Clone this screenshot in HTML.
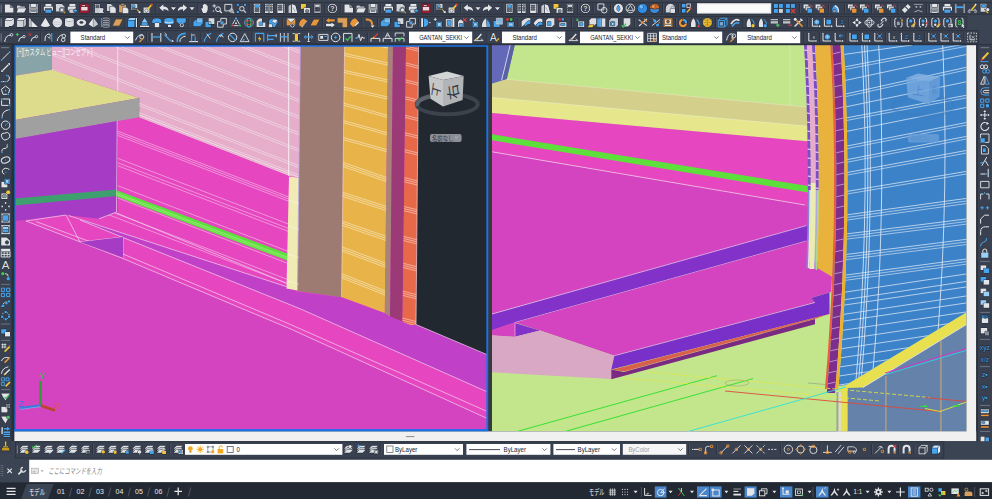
<!DOCTYPE html>
<html lang="ja"><head><meta charset="utf-8"><title>AutoCAD</title>
<style>
html,body{margin:0;padding:0;background:#3b4453;overflow:hidden}
body{width:992px;height:499px;position:relative}
svg{display:block;position:absolute;left:0;top:0}
text{font-family:"Liberation Sans","Noto Sans CJK JP",sans-serif}
</style></head><body>
<svg width="992" height="499" viewBox="0 0 992 499">
<defs><clipPath id="cl"><rect x="15" y="46" width="472.5" height="384.5"/></clipPath>
<clipPath id="cpink"><polygon points="52,46 300.5,46 300,178 289,175.7 139.3,117.2 139.3,98 52,69.7"/></clipPath>
<clipPath id="cwall"><polygon points="117.7,121 139.3,117.2 289,175.7 288,289 66,215 99,218.8 117.7,211.8"/></clipPath>
<clipPath id="corg"><polygon points="344.5,46 388,46 384.8,313 341.5,297"/></clipPath>
<clipPath id="cred"><polygon points="406,46 418.5,46 416,325 410,325 402.5,321.5"/></clipPath>
</defs>
<g clip-path="url(#cl)">
<rect x="15.0" y="46.0" width="472.5" height="384.5" fill="#d444c0" />
<polygon points="26.0,221.0 66.0,215.0 117.7,211.0 117.7,110.0 488.0,110.0 488.0,418.8 290.0,328.7 123.0,258.5" fill="#e646c0" />
<polygon points="52.0,46.0 300.5,46.0 300.0,178.0 289.0,175.7 139.3,117.2 139.3,98.0 52.0,69.7" fill="#e6aecb" />
<polygon points="15.0,46.0 52.0,46.0 52.0,69.7 15.0,75.8" fill="#88a4a8" />
<polygon points="15.0,75.8 52.0,69.7 139.3,98.0 15.0,120.0" fill="#dcdc8c" />
<polygon points="15.0,120.0 139.3,98.0 139.3,117.2 15.0,139.0" fill="#a0a0a0" />
<polygon points="15.0,139.0 117.7,121.0 117.7,211.8 99.0,218.8 66.0,215.0 15.0,221.0" fill="#a63cc5" />
<polygon points="15.0,198.5 116.5,189.4 116.5,196.0 15.0,205.5" fill="#3ea06e" />
<g clip-path="url(#cpink)" stroke="#f1dfea" stroke-width="0.65" fill="none">
<path d="M40 -50.4 L301 51.4"/>
<path d="M40 -48.2 L301 53.6"/>
<path d="M40 -33.9 L301 67.9"/>
<path d="M40 -31.7 L301 70.1"/>
<path d="M40 -17.9 L301 83.9"/>
<path d="M40 -15.7 L301 86.1"/>
<path d="M40 -1.4 L301 100.4"/>
<path d="M40 0.8 L301 102.6"/>
<path d="M40 15.1 L301 116.9"/>
<path d="M40 17.3 L301 119.1"/>
<path d="M40 31.6 L301 133.4"/>
<path d="M40 33.8 L301 135.6"/>
<path d="M40 48.1 L301 149.9"/>
<path d="M40 50.3 L301 152.1"/>
<path d="M40 64.6 L301 166.4"/>
<path d="M40 66.8 L301 168.6"/>
<path d="M40 74.0 L301 175.8"/>
<path d="M40 76.2 L301 178.0"/>
<path d="M40 76.2 L301 178.0"/>
<path d="M40 78.4 L301 180.2"/>
<path d="M288.7 46 V178" stroke="#f4f0f2" stroke-width="1"/>
</g>
<line x1="117.8" y1="46.0" x2="117.8" y2="91.0" stroke="#f6eaf2" stroke-width="0.80" />
<g clip-path="url(#cwall)" stroke="#f6c8ea" stroke-width="0.6" fill="none">
<path d="M100 124.3 L300 201.3"/>
<path d="M100 126.4 L300 203.4"/>
<path d="M100 128.6 L300 205.6"/>
<path d="M100 151.5 L300 228.5"/>
<path d="M100 155.9 L300 232.9"/>
<path d="M100 158.9 L300 235.9"/>
<path d="M100 178.9 L300 255.9"/>
<path d="M100 191.1 L300 268.1"/>
<path d="M100 207.3 L300 284.3"/>
<path d="M100 211.4 L300 288.4"/>
</g>
<line x1="117.2" y1="121.0" x2="116.5" y2="212.0" stroke="#f0c0e6" stroke-width="0.80" />
<polygon points="116.5,190.2 287.0,253.6 287.0,260.6 116.5,196.6" fill="#5ee03c" />
<line x1="116.5" y1="193.2" x2="287.0" y2="257.0" stroke="#b4f098" stroke-width="0.60" />
<line x1="116.5" y1="194.8" x2="287.0" y2="258.6" stroke="#b4f098" stroke-width="0.50" />
<polygon points="68.5,215.5 286.0,286.5 298.0,292.0 341.0,297.3 384.0,312.8 390.0,316.5 402.5,321.5 416.0,325.0 488.0,355.0 488.0,392.2 300.0,308.7 123.0,237.5 80.0,220.0" fill="#c040c8" />
<g stroke="#f2d6ee" stroke-width="0.7" fill="none">
<path d="M80 220 L123 237.5 L300 308.7 L488 392.2"/>
<path d="M26 221 L123 258.5 L290 328.7 L488 418.8"/>
<path d="M36 221.5 L123 254 L290 324.3 L488 411.8"/>
<path d="M26 221 L66 215 L80 242 L123 237 L123 257.5"/>
<path d="M68.5 215.5 L286 286.5"/>
<path d="M116.5 213 L286 283"/>
<path d="M99 218.8 L116.5 212"/>
</g>
<polygon points="80.0,242.0 123.0,237.0 123.0,257.5" fill="#a63cc5" />
<polygon points="289.0,176.5 300.0,178.0 297.5,290.5 286.5,288.5" fill="#f0ebb4" />
<polygon points="300.5,46.0 344.5,46.0 341.5,297.3 297.5,291.0" fill="#9e7b72" />
<polygon points="344.5,46.0 388.0,46.0 384.8,313.0 341.5,297.0" fill="#e8b44a" />
<polygon points="388.0,46.0 393.0,46.0 390.0,316.5 384.8,313.0" fill="#a88478" />
<polygon points="393.0,46.0 406.0,46.0 402.5,321.5 390.0,316.5" fill="#9c3a78" />
<polygon points="406.0,46.0 418.5,46.0 416.0,325.0 410.0,325.0 402.5,321.5" fill="#e8684a" />
<polygon points="418.5,46.0 488.0,46.0 488.0,355.0 416.0,324.5" fill="#212830" />
<line x1="300.3" y1="46.0" x2="297.5" y2="290.0" stroke="#b8a8e8" stroke-width="0.80" />
<line x1="344.6" y1="46.0" x2="341.6" y2="297.0" stroke="#f0e0c0" stroke-width="0.60" />
<line x1="418.6" y1="46.0" x2="416.0" y2="324.5" stroke="#f4d8d0" stroke-width="0.70" />
<line x1="416.0" y1="324.5" x2="488.0" y2="355.0" stroke="#e8d0e8" stroke-width="0.70" />
<g stroke="#ffffff" stroke-width="0.5" opacity="0.8">
<line x1="288.0" y1="200.0" x2="299.0" y2="203.5" stroke="#fff" stroke-width="0.50" />
<line x1="288.0" y1="226.0" x2="299.0" y2="229.5" stroke="#fff" stroke-width="0.50" />
<line x1="288.0" y1="254.0" x2="299.0" y2="257.5" stroke="#fff" stroke-width="0.50" />
<line x1="288.0" y1="281.0" x2="299.0" y2="284.5" stroke="#fff" stroke-width="0.50" />
</g>
<g clip-path="url(#corg)" stroke="#f8ecd0" stroke-width="0.6" fill="none">
<path d="M340 35.4 L392 46.9"/>
<path d="M340 37.5 L392 49.0"/>
<path d="M340 52.4 L392 63.9"/>
<path d="M340 54.5 L392 66.0"/>
<path d="M340 69.4 L392 80.9"/>
<path d="M340 71.5 L392 83.0"/>
<path d="M340 86.3 L392 97.9"/>
<path d="M340 88.4 L392 100.0"/>
<path d="M340 102.1 L392 116.6"/>
<path d="M340 104.2 L392 118.7"/>
<path d="M340 119.6 L392 134.1"/>
<path d="M340 121.7 L392 136.2"/>
<path d="M340 136.6 L392 151.1"/>
<path d="M340 138.7 L392 153.2"/>
<path d="M340 161.3 L392 179.4"/>
<path d="M340 163.4 L392 181.5"/>
<path d="M340 165.5 L392 183.6"/>
<path d="M340 191.4 L392 208.3"/>
<path d="M340 193.5 L392 210.4"/>
<path d="M340 195.6 L392 212.5"/>
<path d="M340 220.3 L392 238.4"/>
<path d="M340 222.4 L392 240.5"/>
<path d="M340 224.5 L392 242.6"/>
<path d="M340 246.1 L392 265.5"/>
<path d="M340 248.2 L392 267.6"/>
<path d="M340 250.3 L392 269.7"/>
<path d="M340 273.0 L392 293.6"/>
<path d="M340 275.1 L392 295.7"/>
<path d="M340 277.2 L392 297.8"/>
<path d="M340 298.9 L392 320.7"/>
<path d="M340 301.0 L392 322.8"/>
<path d="M340 303.1 L392 324.9"/>
</g>
<g clip-path="url(#cred)" stroke="#f8dcd4" stroke-width="0.6" fill="none">
<path d="M400 44.5 L422 50.0"/>
<path d="M400 46.6 L422 52.1"/>
<path d="M400 61.5 L422 67.0"/>
<path d="M400 63.6 L422 69.1"/>
<path d="M400 78.5 L422 84.0"/>
<path d="M400 80.6 L422 86.1"/>
<path d="M400 95.5 L422 101.0"/>
<path d="M400 97.6 L422 103.1"/>
<path d="M400 114.0 L422 119.5"/>
<path d="M400 116.1 L422 121.6"/>
<path d="M400 131.5 L422 137.0"/>
<path d="M400 133.6 L422 139.1"/>
<path d="M400 148.5 L422 154.0"/>
<path d="M400 150.6 L422 156.1"/>
<path d="M400 176.5 L422 182.0"/>
<path d="M400 178.6 L422 184.1"/>
<path d="M400 180.7 L422 186.2"/>
<path d="M400 205.5 L422 211.0"/>
<path d="M400 207.6 L422 213.1"/>
<path d="M400 209.7 L422 215.2"/>
<path d="M400 235.5 L422 241.0"/>
<path d="M400 237.6 L422 243.1"/>
<path d="M400 239.7 L422 245.2"/>
<path d="M400 262.5 L422 268.0"/>
<path d="M400 264.6 L422 270.1"/>
<path d="M400 266.7 L422 272.2"/>
<path d="M400 290.5 L422 296.0"/>
<path d="M400 292.6 L422 298.1"/>
<path d="M400 294.7 L422 300.2"/>
<path d="M400 317.5 L422 323.0"/>
<path d="M400 319.6 L422 325.1"/>
<path d="M400 321.7 L422 327.2"/>
</g>
<ellipse cx="447.2" cy="104.3" rx="30.5" ry="10" fill="none" stroke="#3d434d" stroke-width="4"/>
<path d="M417.5 106 A30.5 10 0 0 1 430 96.5" fill="none" stroke="#5e636c" stroke-width="4"/>
<polygon points="428.6,76.0 447.0,71.5 463.7,76.0 443.0,80.0" fill="#d2d4d6" />
<polygon points="428.6,76.0 443.0,80.0 443.0,106.4 430.5,98.7" fill="#c4c6c8" />
<polygon points="443.0,80.0 463.7,76.0 462.6,100.0 443.0,106.4" fill="#b2b4b7" />
<text x="0" y="0" font-size="13.5" fill="#33373d" text-anchor="middle" transform="translate(432.6,89) rotate(98) skewX(-10) scale(1,0.78)">上</text>
<text x="0" y="0" font-size="15" fill="#33373d" text-anchor="middle" transform="translate(458,90.5) rotate(-98) skewX(8) scale(1,0.9)">右</text>
<rect x="430" y="134" width="31.6" height="8" rx="2" fill="#8b8f97"/>
<text x="432" y="140.5" font-size="6.4" fill="#30343c" textLength="21.5" lengthAdjust="spacingAndGlyphs">名前なし</text>
<path d="M455 136.8 l3.2 0 l-1.6 2.4z" fill="none" stroke="#b4b8be" stroke-width="0.5"/>
<line x1="40.5" y1="381.0" x2="40.5" y2="405.5" stroke="#2ea030" stroke-width="2.60" />
<line x1="40.5" y1="405.5" x2="55.0" y2="410.5" stroke="#b4482e" stroke-width="2.80" />
<line x1="55.0" y1="410.5" x2="40.5" y2="405.5" stroke="#e04040" stroke-width="0.50" transform="translate(0.4,-1.4)"/>
<line x1="40.5" y1="405.5" x2="20.0" y2="408.2" stroke="#3a7ad8" stroke-width="2.60" />
<line x1="20.0" y1="408.2" x2="40.5" y2="405.5" stroke="#8cc0f8" stroke-width="0.60" transform="translate(0,1.2)"/>
<text x="42.4" y="378.6" font-size="9.4" fill="#40b848" text-anchor="middle">Y</text>
<text x="57.2" y="409" font-size="9.4" fill="#e85050" text-anchor="middle">X</text>
<text x="20.6" y="406.8" font-size="9.4" fill="#4a6cf4" text-anchor="middle">Z</text>
<text x="17" y="54.8" font-size="8.3" fill="#f6f6f6" textLength="75.5" lengthAdjust="spacingAndGlyphs">[+][カスタム ビュー][コンセプト]</text>
</g>
<rect x="488.2" y="45.0" width="3.6" height="386.4" fill="#38393b" />
<rect x="14.9" y="45.8" width="472.4" height="384.4" fill="none" stroke="#1a72e8" stroke-width="1.9"/>
<defs><clipPath id="cr"><rect x="492" y="45" width="474.5" height="386.5"/></clipPath>
<clipPath id="cblue"><polygon points="843.6,45.0 844.2,56.4 844.8,67.7 845.3,79.1 845.7,90.5 846.1,101.8 846.5,113.2 846.8,124.6 847.0,135.9 847.2,147.3 847.3,158.7 847.4,170.0 847.4,181.4 847.4,192.8 847.3,204.1 847.2,215.5 847.0,226.9 846.7,238.2 846.4,249.6 846.1,261.0 845.7,272.3 845.2,283.7 844.7,295.1 844.1,306.4 843.5,317.8 842.8,329.2 842.1,340.5 841.3,351.9 840.4,363.3 839.5,374.6 838.6,386.0 846.0,385.0 966.5,312.3 966.5,45.0"/></clipPath>
</defs>
<g clip-path="url(#cr)">
<rect x="492.0" y="45.0" width="474.5" height="386.5" fill="#c3e68c" />
<polygon points="491.8,45.0 514.7,45.0 506.7,79.3 491.8,83.9" fill="#6468b8" />
<polygon points="510.6,45.0 514.7,45.0 506.7,79.3 502.0,80.6" fill="#5a62a4" />
<line x1="510.2" y1="45.0" x2="501.6" y2="80.3" stroke="#dcdcf4" stroke-width="0.90" />
<line x1="790.0" y1="45.0" x2="790.0" y2="105.0" stroke="#d6eeb0" stroke-width="0.80" />
<polygon points="491.8,83.9 506.7,79.3 810.0,107.3 810.0,126.5 492.0,97.5" fill="#d4d08c" />
<polygon points="492.0,97.5 810.0,126.5 810.0,141.6 492.0,113.0" fill="#e6e68c" />
<line x1="506.7" y1="79.3" x2="806.6" y2="107.0" stroke="#e4e6c0" stroke-width="0.60" />
<line x1="492.0" y1="97.5" x2="806.6" y2="126.2" stroke="#eeeec0" stroke-width="0.60" />
<polygon points="492.0,113.0 810.0,141.6 810.0,206.0 492.0,151.8" fill="#e646c0" />
<polygon points="492.0,134.3 808.0,185.9 808.0,192.5 492.0,140.3" fill="#5ee03c" />
<polygon points="492.0,151.8 805.0,205.0 810.0,205.8 810.0,226.0 492.0,314.0" fill="#d444c0" />
<line x1="492.0" y1="151.8" x2="805.0" y2="205.0" stroke="#f2c8ea" stroke-width="0.80" />
<polygon points="492.0,314.0 809.0,224.8 809.0,240.4 515.0,322.5 492.0,330.6" fill="#8232c8" />
<line x1="492.0" y1="314.0" x2="806.6" y2="225.5" stroke="#e8d0f0" stroke-width="0.70" />
<line x1="515.0" y1="322.5" x2="806.6" y2="241.0" stroke="#e8d0f0" stroke-width="0.70" />
<polygon points="515.0,322.5 809.0,240.4 809.0,262.0 820.0,262.0 832.0,276.7 831.0,292.0 811.0,298.0 815.0,302.5 614.4,355.7 540.0,330.5" fill="#d444c0" />
<polygon points="492.0,330.0 515.0,322.0 515.0,337.0 492.0,335.5" fill="#d444c0" />
<polygon points="515.0,323.0 515.0,336.8 540.0,330.5" fill="#8232c8" />
<line x1="515.0" y1="323.0" x2="515.0" y2="336.8" stroke="#e8d0f0" stroke-width="0.60" />
<polygon points="492.0,335.3 515.0,336.8 540.0,330.5 614.4,355.7 611.3,369.5 611.3,379.0 492.0,372.3" fill="#d8a8c4" />
<polygon points="614.4,355.7 815.0,302.5 811.0,298.0 829.5,292.5 829.5,314.0 611.3,369.6" fill="#7830c8" />
<line x1="614.4" y1="355.7" x2="815.0" y2="302.5" stroke="#e8d0f0" stroke-width="0.60" />
<polygon points="612.0,369.8 827.0,314.6 815.0,319.0 625.0,371.6" fill="#d8604a" />
<line x1="625.0" y1="371.4" x2="815.0" y2="318.8" stroke="#d8c0d0" stroke-width="0.60" stroke-dasharray="1 1"/>
<polygon points="611.3,369.5 624.0,372.0 815.0,319.0 815.0,324.2 611.3,379.3" fill="#7a2a82" />
<polygon points="846.0,385.0 966.5,312.3 966.5,324.5 863.0,387.5 846.0,388.0" fill="#e8e050" />
<polygon points="847.5,388.0 863.0,387.5 966.5,324.5 966.5,432.0 847.5,432.0" fill="#6482aa" />
<line x1="863.0" y1="387.5" x2="966.5" y2="324.5" stroke="#e8e8e8" stroke-width="0.80" />
<rect x="836.4" y="392.0" width="2.2" height="40.0" fill="#a0a498" />
<rect x="838.6" y="392.0" width="2.9" height="40.0" fill="#dcdcc8" />
<rect x="841.5" y="388.0" width="5.8" height="44.0" fill="#e8e050" />
<rect x="885.0" y="376.0" width="1.8" height="56.0" fill="#a0988c" />
<rect x="940.0" y="341.0" width="1.8" height="91.0" fill="#a0988c" />
<polygon points="843.6,45.0 844.2,56.4 844.8,67.7 845.3,79.1 845.7,90.5 846.1,101.8 846.5,113.2 846.8,124.6 847.0,135.9 847.2,147.3 847.3,158.7 847.4,170.0 847.4,181.4 847.4,192.8 847.3,204.1 847.2,215.5 847.0,226.9 846.7,238.2 846.4,249.6 846.1,261.0 845.7,272.3 845.2,283.7 844.7,295.1 844.1,306.4 843.5,317.8 842.8,329.2 842.1,340.5 841.3,351.9 840.4,363.3 839.5,374.6 838.6,386.0 846.0,385.0 966.5,312.3 966.5,45.0" fill="#3c82c8" />
<g clip-path="url(#cblue)" fill="none">
<g stroke="#dfe9f6" stroke-width="0.75">
<path d="M838 68.2 L970 43.0"/>
<path d="M838 70.8 L970 45.6" opacity="0.85"/>
<path d="M838 82.0 L970 53.7"/>
<path d="M838 95.7 L970 66.5"/>
<path d="M838 98.3 L970 69.1" opacity="0.85"/>
<path d="M838 108.5 L970 81.0"/>
<path d="M838 119.5 L970 94.6"/>
<path d="M838 122.1 L970 97.2" opacity="0.85"/>
<path d="M838 133.1 L970 106.7"/>
<path d="M838 147.8 L970 121.8"/>
<path d="M838 150.4 L970 124.4" opacity="0.85"/>
<path d="M838 161.4 L970 135.7"/>
<path d="M838 164.0 L970 138.3" opacity="0.85"/>
<path d="M838 174.2 L970 149.8"/>
<path d="M838 176.8 L970 152.4" opacity="0.85"/>
<path d="M838 192.9 L970 170.8"/>
<path d="M838 195.5 L970 173.4" opacity="0.85"/>
<path d="M838 216.1 L970 197.9"/>
<path d="M838 218.7 L970 200.5" opacity="0.85"/>
<path d="M838 221.3 L970 203.1" opacity="0.85"/>
<path d="M838 235.0 L970 218.5"/>
<path d="M838 237.6 L970 221.1" opacity="0.85"/>
<path d="M838 240.2 L970 223.7" opacity="0.85"/>
<path d="M838 255.5 L970 238.9"/>
<path d="M838 258.1 L970 241.5" opacity="0.85"/>
<path d="M838 260.7 L970 244.1" opacity="0.85"/>
<path d="M838 276.1 L970 258.5"/>
<path d="M838 278.7 L970 261.1" opacity="0.85"/>
<path d="M838 281.3 L970 263.7" opacity="0.85"/>
<path d="M838 293.2 L970 273.4"/>
<path d="M838 300.7 L970 280.9"/>
<path d="M838 306.0 L970 286.4"/>
<path d="M838 315.2 L970 295.4"/>
<path d="M838 321.9 L970 302.4"/>
<path d="M838 331.0 L970 311.4"/>
<path d="M838 340.2 L970 320.4"/>
<path d="M838 349.2 L970 329.4"/>
<path d="M838 358.2 L970 338.4"/>
<path d="M838 367.2 L970 347.4"/>
<path d="M838 376.2 L970 356.4"/>
<path d="M838 385.2 L970 365.4"/>
<path d="M838 394.2 L970 374.4"/>
<path d="M840 55 L912 45"/>
</g>
<g stroke="#dce8f8" stroke-width="0.85">
<path d="M861.8 45.0 L862.4 57.0 L862.9 69.0 L863.4 81.0 L863.8 93.0 L864.2 105.0 L864.5 117.0 L864.8 129.0 L864.9 141.0 L865.1 153.0 L865.1 165.0 L865.1 177.0 L865.1 189.0 L864.9 201.0 L864.7 213.0 L864.5 225.0 L864.2 237.0 L863.8 249.0 L863.4 261.0 L862.9 273.0 L862.4 285.0 L861.8 297.0 L861.1 309.0 L860.4 321.0 L859.6 333.0 L858.8 345.0 L857.9 357.0 L856.9 369.0 L855.9 381.0 L854.8 393.0"/>
<path d="M864.5 45.0 L865.1 57.0 L865.6 69.0 L866.1 81.0 L866.5 93.0 L866.9 105.0 L867.2 117.0 L867.5 129.0 L867.6 141.0 L867.8 153.0 L867.8 165.0 L867.8 177.0 L867.8 189.0 L867.6 201.0 L867.4 213.0 L867.2 225.0 L866.9 237.0 L866.5 249.0 L866.1 261.0 L865.6 273.0 L865.1 285.0 L864.5 297.0 L863.8 309.0 L863.1 321.0 L862.3 333.0 L861.5 345.0 L860.6 357.0 L859.6 369.0 L858.6 381.0 L857.5 393.0"/>
<path d="M867.0 45.0 L867.6 57.0 L868.1 69.0 L868.6 81.0 L869.0 93.0 L869.4 105.0 L869.7 117.0 L870.0 129.0 L870.1 141.0 L870.3 153.0 L870.3 165.0 L870.3 177.0 L870.3 189.0 L870.1 201.0 L869.9 213.0 L869.7 225.0 L869.4 237.0 L869.0 249.0 L868.6 261.0 L868.1 273.0 L867.6 285.0 L867.0 297.0 L866.3 309.0 L865.6 321.0 L864.8 333.0 L864.0 345.0 L863.1 357.0 L862.1 369.0 L861.1 381.0 L860.0 393.0"/>
<path d="M878.7 45.0 L879.3 57.0 L879.8 69.0 L880.3 81.0 L880.7 93.0 L881.0 105.0 L881.3 117.0 L881.5 129.0 L881.6 141.0 L881.7 153.0 L881.8 165.0 L881.7 177.0 L881.7 189.0 L881.5 201.0 L881.3 213.0 L881.0 225.0 L880.7 237.0 L880.3 249.0 L879.9 261.0 L879.4 273.0 L878.8 285.0 L878.2 297.0 L877.5 309.0 L876.7 321.0 L875.9 333.0 L875.1 345.0 L874.1 357.0 L873.1 369.0 L872.1 381.0 L871.0 393.0"/>
<path d="M942.7 45.0 L943.2 57.0 L943.6 69.0 L944.0 81.0 L944.3 93.0 L944.6 105.0 L944.8 117.0 L944.9 129.0 L945.0 141.0 L945.0 153.0 L944.9 165.0 L944.8 177.0 L944.7 189.0 L944.4 201.0 L944.1 213.0 L943.8 225.0 L943.4 237.0 L942.9 249.0 L942.4 261.0 L941.8 273.0 L941.1 285.0 L940.4 297.0 L939.6 309.0 L938.8 321.0 L937.9 333.0 L937.0 345.0 L936.0 357.0 L934.9 369.0 L933.7 381.0 L932.6 393.0"/>
</g>
<ellipse cx="923" cy="106" rx="31" ry="9.5" stroke="#3a7cc0" stroke-width="3.5" opacity="0.35"/>
<polygon points="906.0,78.0 918.0,73.5 940.0,77.0 929.0,82.0" fill="#86b2e2" opacity="0.85" stroke="none"/>
<polygon points="906.0,78.0 929.0,82.0 929.0,104.0 908.0,97.5" fill="#76a8de" opacity="0.85" stroke="none"/>
<polygon points="929.0,82.0 940.0,77.0 939.5,96.5 929.0,104.0" fill="#6aa0da" opacity="0.85" stroke="none"/>
<text x="918.5" y="95" font-size="12" fill="#5088c8" stroke="none" text-anchor="middle" opacity="0.8" transform="rotate(6 918 90)">上</text>
<text x="934.4" y="94" font-size="10" fill="#4c84c4" stroke="none" text-anchor="middle" opacity="0.7" transform="translate(934.4,90) scale(0.5,1) translate(-934.4,-90) rotate(-12 934 90)">前</text>
<rect x="908" y="134" width="31" height="8.4" rx="2" fill="#6a9fd8" stroke="none" opacity="0.8"/>
<text x="910.5" y="140.4" font-size="5.6" fill="#5a92d0" stroke="none" textLength="19" opacity="0.9">名前なし</text>
</g>
<polygon points="804.0,45.0 804.3,51.0 804.7,57.1 805.0,63.1 805.2,69.2 805.5,75.2 805.8,81.2 806.0,87.3 806.3,93.3 806.5,99.4 806.7,105.4 806.8,111.5 807.0,117.5 807.2,123.5 807.3,129.6 807.4,135.6 807.5,141.7 807.6,147.7 807.7,153.8 807.8,159.8 807.8,165.8 807.8,171.9 807.8,177.9 807.8,184.0 807.8,190.0 810.8,190.0 810.8,184.0 810.8,177.9 810.8,171.9 810.8,165.8 810.8,159.8 810.7,153.8 810.6,147.7 810.5,141.7 810.4,135.6 810.3,129.6 810.2,123.5 810.0,117.5 809.8,111.5 809.7,105.4 809.5,99.4 809.3,93.3 809.0,87.3 808.8,81.2 808.5,75.2 808.2,69.2 808.0,63.1 807.7,57.1 807.3,51.0 807.0,45.0" fill="#7d4dc8" />
<polygon points="807.8,190.0 807.8,193.2 807.8,196.5 807.8,199.8 807.7,203.0 807.7,206.2 807.7,209.5 807.6,212.8 807.6,216.0 807.5,219.2 807.5,222.5 807.4,225.8 807.3,229.0 807.3,232.2 807.2,235.5 807.1,238.8 807.0,242.0 807.0,245.2 806.9,248.5 806.8,251.8 806.7,255.0 806.6,258.2 806.5,261.5 806.4,264.8 806.2,268.0 807.8,268.0 808.0,264.8 808.1,261.5 808.2,258.2 808.3,255.0 808.4,251.8 808.5,248.5 808.6,245.2 808.6,242.0 808.7,238.8 808.8,235.5 808.9,232.2 808.9,229.0 809.0,225.8 809.1,222.5 809.1,219.2 809.2,216.0 809.2,212.8 809.3,209.5 809.3,206.2 809.3,203.0 809.4,199.8 809.4,196.5 809.4,193.2 809.4,190.0" fill="#8a84d4" />
<polygon points="809.4,190.0 809.4,193.2 809.4,196.5 809.4,199.8 809.3,203.0 809.3,206.2 809.3,209.5 809.2,212.8 809.2,216.0 809.1,219.2 809.1,222.5 809.0,225.8 808.9,229.0 808.9,232.2 808.8,235.5 808.7,238.8 808.6,242.0 808.6,245.2 808.5,248.5 808.4,251.8 808.3,255.0 808.2,258.2 808.1,261.5 808.0,264.8 807.8,268.0 809.2,268.0 809.4,264.8 809.5,261.5 809.6,258.2 809.7,255.0 809.8,251.8 809.9,248.5 810.0,245.2 810.0,242.0 810.1,238.8 810.2,235.5 810.3,232.2 810.3,229.0 810.4,225.8 810.5,222.5 810.5,219.2 810.6,216.0 810.6,212.8 810.7,209.5 810.7,206.2 810.7,203.0 810.8,199.8 810.8,196.5 810.8,193.2 810.8,190.0" fill="#e8e4f4" />
<polygon points="807.0,45.0 807.3,50.8 807.6,56.5 807.9,62.2 808.2,68.0 808.5,73.8 808.7,79.5 808.9,85.2 809.2,91.0 809.4,96.8 809.6,102.5 809.8,108.2 809.9,114.0 810.1,119.8 810.2,125.5 810.3,131.2 810.4,137.0 810.5,142.8 810.6,148.5 810.7,154.2 810.8,160.0 810.8,165.8 810.8,171.5 810.8,177.2 810.8,183.0 815.8,183.0 815.8,177.2 815.8,171.5 815.8,165.8 815.8,160.0 815.7,154.2 815.6,148.5 815.5,142.8 815.4,137.0 815.3,131.2 815.2,125.5 815.1,119.8 814.9,114.0 814.8,108.2 814.6,102.5 814.4,96.8 814.2,91.0 813.9,85.2 813.7,79.5 813.5,73.8 813.2,68.0 812.9,62.2 812.6,56.5 812.3,50.8 812.0,45.0" fill="#e8aacd" />
<polygon points="810.8,183.0 810.8,186.6 810.8,190.2 810.8,193.8 810.8,197.3 810.8,200.9 810.7,204.5 810.7,208.1 810.6,211.7 810.6,215.2 810.5,218.8 810.5,222.4 810.4,226.0 810.3,229.6 810.3,233.2 810.2,236.8 810.1,240.3 810.0,243.9 809.9,247.5 809.8,251.1 809.7,254.7 809.6,258.2 809.5,261.8 809.3,265.4 809.2,269.0 814.2,269.0 814.3,265.4 814.5,261.8 814.6,258.2 814.7,254.7 814.8,251.1 814.9,247.5 815.0,243.9 815.1,240.3 815.2,236.8 815.3,233.2 815.3,229.6 815.4,226.0 815.5,222.4 815.5,218.8 815.6,215.2 815.6,211.7 815.7,208.1 815.7,204.5 815.8,200.9 815.8,197.3 815.8,193.8 815.8,190.2 815.8,186.6 815.8,183.0" fill="#ecebb0" />
<polygon points="812.0,45.0 812.3,51.0 812.7,57.1 813.0,63.1 813.2,69.2 813.5,75.2 813.8,81.2 814.0,87.3 814.3,93.3 814.5,99.4 814.7,105.4 814.8,111.5 815.0,117.5 815.2,123.5 815.3,129.6 815.4,135.6 815.5,141.7 815.6,147.7 815.7,153.8 815.8,159.8 815.8,165.8 815.8,171.9 815.8,177.9 815.8,184.0 815.8,190.0 818.8,190.0 818.8,184.0 818.8,177.9 818.8,171.9 818.8,165.8 818.8,159.8 818.7,153.8 818.6,147.7 818.5,141.7 818.4,135.6 818.3,129.6 818.2,123.5 818.0,117.5 817.8,111.5 817.7,105.4 817.5,99.4 817.3,93.3 817.0,87.3 816.8,81.2 816.5,75.2 816.2,69.2 816.0,63.1 815.7,57.1 815.3,51.0 815.0,45.0" fill="#7d4dc8" />
<polygon points="815.8,190.0 815.8,193.3 815.8,196.6 815.8,199.9 815.7,203.2 815.7,206.5 815.7,209.8 815.6,213.0 815.6,216.3 815.5,219.6 815.5,222.9 815.4,226.2 815.3,229.5 815.3,232.8 815.2,236.1 815.1,239.4 815.0,242.7 814.9,246.0 814.8,249.2 814.8,252.5 814.7,255.8 814.5,259.1 814.4,262.4 814.3,265.7 814.2,269.0 815.8,269.0 815.9,265.7 816.0,262.4 816.1,259.1 816.3,255.8 816.4,252.5 816.4,249.2 816.5,246.0 816.6,242.7 816.7,239.4 816.8,236.1 816.9,232.8 816.9,229.5 817.0,226.2 817.1,222.9 817.1,219.6 817.2,216.3 817.2,213.0 817.3,209.8 817.3,206.5 817.3,203.2 817.4,199.9 817.4,196.6 817.4,193.3 817.4,190.0" fill="#b0a8e0" />
<polygon points="817.4,190.0 817.4,193.3 817.4,196.7 817.4,200.0 817.3,203.3 817.3,206.7 817.3,210.0 817.2,213.3 817.2,216.7 817.1,220.0 817.1,223.3 817.0,226.7 816.9,230.0 816.9,233.3 816.8,236.7 816.7,240.0 816.6,243.3 816.5,246.7 816.4,250.0 816.3,253.3 816.2,256.7 816.1,260.0 816.0,263.3 815.9,266.7 815.8,270.0 817.2,270.0 817.3,266.7 817.4,263.3 817.5,260.0 817.6,256.7 817.7,253.3 817.8,250.0 817.9,246.7 818.0,243.3 818.1,240.0 818.2,236.7 818.3,233.3 818.3,230.0 818.4,226.7 818.5,223.3 818.5,220.0 818.6,216.7 818.6,213.3 818.7,210.0 818.7,206.7 818.7,203.3 818.8,200.0 818.8,196.7 818.8,193.3 818.8,190.0" fill="#a8d890" />
<g stroke="#ecdcf4" stroke-width="0.8">
<line x1="804.3" y1="50.0" x2="807.3" y2="50.5" stroke="#f0e4f8" stroke-width="1.20" />
<line x1="812.3" y1="53.0" x2="815.3" y2="53.5" stroke="#f0e4f8" stroke-width="1.20" />
<line x1="804.8" y1="59.0" x2="807.8" y2="59.5" stroke="#f0e4f8" stroke-width="1.20" />
<line x1="812.8" y1="62.0" x2="815.8" y2="62.5" stroke="#f0e4f8" stroke-width="1.20" />
<line x1="805.2" y1="68.0" x2="808.2" y2="68.5" stroke="#f0e4f8" stroke-width="1.20" />
<line x1="813.2" y1="71.0" x2="816.2" y2="71.5" stroke="#f0e4f8" stroke-width="1.20" />
<line x1="805.6" y1="77.0" x2="808.6" y2="77.5" stroke="#f0e4f8" stroke-width="1.20" />
<line x1="813.6" y1="80.0" x2="816.6" y2="80.5" stroke="#f0e4f8" stroke-width="1.20" />
<line x1="806.0" y1="86.0" x2="809.0" y2="86.5" stroke="#f0e4f8" stroke-width="1.20" />
<line x1="814.0" y1="89.0" x2="817.0" y2="89.5" stroke="#f0e4f8" stroke-width="1.20" />
<line x1="806.3" y1="95.0" x2="809.3" y2="95.5" stroke="#f0e4f8" stroke-width="1.20" />
<line x1="814.3" y1="98.0" x2="817.3" y2="98.5" stroke="#f0e4f8" stroke-width="1.20" />
<line x1="806.6" y1="104.0" x2="809.6" y2="104.5" stroke="#f0e4f8" stroke-width="1.20" />
<line x1="814.6" y1="107.0" x2="817.6" y2="107.5" stroke="#f0e4f8" stroke-width="1.20" />
<line x1="806.9" y1="113.0" x2="809.9" y2="113.5" stroke="#f0e4f8" stroke-width="1.20" />
<line x1="814.9" y1="116.0" x2="817.9" y2="116.5" stroke="#f0e4f8" stroke-width="1.20" />
<line x1="807.1" y1="122.0" x2="810.1" y2="122.5" stroke="#f0e4f8" stroke-width="1.20" />
<line x1="815.1" y1="125.0" x2="818.1" y2="125.5" stroke="#f0e4f8" stroke-width="1.20" />
<line x1="807.3" y1="131.0" x2="810.3" y2="131.5" stroke="#f0e4f8" stroke-width="1.20" />
<line x1="815.3" y1="134.0" x2="818.3" y2="134.5" stroke="#f0e4f8" stroke-width="1.20" />
<line x1="807.5" y1="140.0" x2="810.5" y2="140.5" stroke="#f0e4f8" stroke-width="1.20" />
<line x1="815.5" y1="143.0" x2="818.5" y2="143.5" stroke="#f0e4f8" stroke-width="1.20" />
<line x1="807.6" y1="149.0" x2="810.6" y2="149.5" stroke="#f0e4f8" stroke-width="1.20" />
<line x1="815.6" y1="152.0" x2="818.6" y2="152.5" stroke="#f0e4f8" stroke-width="1.20" />
<line x1="807.7" y1="158.0" x2="810.7" y2="158.5" stroke="#f0e4f8" stroke-width="1.20" />
<line x1="815.7" y1="161.0" x2="818.7" y2="161.5" stroke="#f0e4f8" stroke-width="1.20" />
<line x1="807.8" y1="167.0" x2="810.8" y2="167.5" stroke="#f0e4f8" stroke-width="1.20" />
<line x1="815.8" y1="170.0" x2="818.8" y2="170.5" stroke="#f0e4f8" stroke-width="1.20" />
<line x1="807.8" y1="176.0" x2="810.8" y2="176.5" stroke="#f0e4f8" stroke-width="1.20" />
<line x1="815.8" y1="179.0" x2="818.8" y2="179.5" stroke="#f0e4f8" stroke-width="1.20" />
<line x1="807.8" y1="185.0" x2="810.8" y2="185.5" stroke="#f0e4f8" stroke-width="1.20" />
<line x1="815.8" y1="188.0" x2="818.8" y2="188.5" stroke="#f0e4f8" stroke-width="1.20" />
</g>
<polygon points="815.0,45.0 815.6,56.1 816.2,67.3 816.7,78.5 817.1,89.6 817.5,100.8 817.9,111.9 818.2,123.0 818.4,134.2 818.6,145.3 818.7,156.5 818.8,167.7 818.8,178.8 818.8,189.9 818.8,201.1 818.6,212.2 818.5,223.4 818.2,234.6 817.9,245.7 817.6,256.9 817.2,268.0 832.0,276.7 832.5,268.0 832.9,256.9 833.2,245.7 833.5,234.6 833.8,223.4 833.9,212.2 834.1,201.1 834.1,189.9 834.1,178.8 834.1,167.7 834.0,156.5 833.9,145.3 833.7,134.2 833.5,123.0 833.2,111.9 832.8,100.8 832.4,89.6 832.0,78.5 831.5,67.3 830.9,56.1 830.3,45.0" fill="#e8b23c" />
<polygon points="830.2,45.0 831.0,59.3 831.7,73.7 832.3,88.0 832.8,102.3 833.2,116.7 833.5,131.0 833.8,145.3 834.0,159.7 834.0,174.0 834.0,188.3 833.9,202.7 833.8,217.0 833.5,231.3 833.1,245.7 832.7,260.0 832.2,274.3 831.6,288.7 830.9,303.0 830.1,317.3 829.2,331.7 828.3,346.0 827.3,360.3 826.1,374.7 824.9,389.0 827.1,389.0 828.3,374.7 829.5,360.3 830.5,346.0 831.4,331.7 832.3,317.3 833.1,303.0 833.8,288.7 834.4,274.3 834.9,260.0 835.3,245.7 835.7,231.3 836.0,217.0 836.1,202.7 836.2,188.3 836.2,174.0 836.2,159.7 836.0,145.3 835.7,131.0 835.4,116.7 835.0,102.3 834.5,88.0 833.9,73.7 833.2,59.3 832.4,45.0" fill="#e85c44" />
<polygon points="832.4,45.0 833.2,59.5 833.9,74.0 834.5,88.5 835.0,103.0 835.4,117.5 835.8,132.0 836.0,146.5 836.2,161.0 836.2,175.5 836.2,190.0 836.1,204.5 835.9,219.0 835.7,233.5 835.3,248.0 834.8,262.5 834.3,277.0 833.7,291.5 832.9,306.0 832.1,320.5 831.2,335.0 830.3,349.5 829.2,364.0 828.0,378.5 826.8,393.0 835.0,393.0 836.2,378.5 837.4,364.0 838.5,349.5 839.4,335.0 840.3,320.5 841.1,306.0 841.9,291.5 842.5,277.0 843.0,262.5 843.5,248.0 843.9,233.5 844.1,219.0 844.3,204.5 844.4,190.0 844.4,175.5 844.4,161.0 844.2,146.5 844.0,132.0 843.6,117.5 843.2,103.0 842.7,88.5 842.1,74.0 841.4,59.5 840.6,45.0" fill="#7d2d8c" />
<polygon points="840.6,45.0 841.4,59.4 842.1,73.8 842.7,88.1 843.2,102.5 843.6,116.9 843.9,131.2 844.2,145.6 844.4,160.0 844.4,174.4 844.4,188.8 844.3,203.1 844.2,217.5 843.9,231.9 843.5,246.2 843.1,260.6 842.6,275.0 842.0,289.4 841.3,303.8 840.5,318.1 839.6,332.5 838.6,346.9 837.6,361.2 836.5,375.6 835.2,390.0 838.2,390.0 839.5,375.6 840.6,361.2 841.6,346.9 842.6,332.5 843.5,318.1 844.3,303.8 845.0,289.4 845.6,275.0 846.1,260.6 846.5,246.2 846.9,231.9 847.2,217.5 847.3,203.1 847.4,188.8 847.4,174.4 847.4,160.0 847.2,145.6 846.9,131.2 846.6,116.9 846.2,102.5 845.7,88.1 845.1,73.8 844.4,59.4 843.6,45.0" fill="#eeb030" />
<line x1="833.0" y1="53.8" x2="840.8" y2="52.0" stroke="#c8a8d8" stroke-width="0.80" />
<line x1="833.6" y1="64.8" x2="841.4" y2="63.0" stroke="#c8a8d8" stroke-width="0.80" />
<line x1="834.1" y1="75.8" x2="841.9" y2="74.0" stroke="#c8a8d8" stroke-width="0.80" />
<line x1="834.5" y1="86.8" x2="842.3" y2="85.0" stroke="#c8a8d8" stroke-width="0.80" />
<line x1="834.9" y1="97.8" x2="842.7" y2="96.0" stroke="#c8a8d8" stroke-width="0.80" />
<line x1="835.3" y1="108.8" x2="843.1" y2="107.0" stroke="#c8a8d8" stroke-width="0.80" />
<line x1="835.6" y1="119.8" x2="843.4" y2="118.0" stroke="#c8a8d8" stroke-width="0.80" />
<line x1="835.9" y1="130.8" x2="843.7" y2="129.0" stroke="#c8a8d8" stroke-width="0.80" />
<line x1="836.1" y1="141.8" x2="843.9" y2="140.0" stroke="#c8a8d8" stroke-width="0.80" />
<line x1="836.3" y1="152.8" x2="844.1" y2="151.0" stroke="#c8a8d8" stroke-width="0.80" />
<line x1="836.4" y1="163.8" x2="844.2" y2="162.0" stroke="#c8a8d8" stroke-width="0.80" />
<line x1="836.4" y1="174.8" x2="844.2" y2="173.0" stroke="#c8a8d8" stroke-width="0.80" />
<line x1="836.4" y1="185.8" x2="844.2" y2="184.0" stroke="#c8a8d8" stroke-width="0.80" />
<line x1="836.4" y1="196.8" x2="844.2" y2="195.0" stroke="#c8a8d8" stroke-width="0.80" />
<line x1="836.3" y1="207.8" x2="844.1" y2="206.0" stroke="#c8a8d8" stroke-width="0.80" />
<line x1="836.2" y1="218.8" x2="844.0" y2="217.0" stroke="#c8a8d8" stroke-width="0.80" />
<line x1="836.0" y1="229.8" x2="843.8" y2="228.0" stroke="#c8a8d8" stroke-width="0.80" />
<line x1="835.7" y1="240.8" x2="843.5" y2="239.0" stroke="#c8a8d8" stroke-width="0.80" />
<line x1="835.4" y1="251.8" x2="843.2" y2="250.0" stroke="#c8a8d8" stroke-width="0.80" />
<line x1="835.1" y1="262.8" x2="842.9" y2="261.0" stroke="#c8a8d8" stroke-width="0.80" />
<line x1="834.7" y1="273.8" x2="842.5" y2="272.0" stroke="#c8a8d8" stroke-width="0.80" />
<line x1="834.2" y1="284.8" x2="842.0" y2="283.0" stroke="#c8a8d8" stroke-width="0.80" />
<line x1="833.7" y1="295.8" x2="841.5" y2="294.0" stroke="#c8a8d8" stroke-width="0.80" />
<line x1="833.2" y1="306.8" x2="841.0" y2="305.0" stroke="#c8a8d8" stroke-width="0.80" />
<line x1="832.6" y1="317.8" x2="840.4" y2="316.0" stroke="#c8a8d8" stroke-width="0.80" />
<line x1="831.9" y1="328.8" x2="839.7" y2="327.0" stroke="#c8a8d8" stroke-width="0.80" />
<line x1="831.2" y1="339.8" x2="839.0" y2="338.0" stroke="#c8a8d8" stroke-width="0.80" />
<line x1="830.5" y1="350.8" x2="838.3" y2="349.0" stroke="#c8a8d8" stroke-width="0.80" />
<line x1="829.7" y1="361.8" x2="837.5" y2="360.0" stroke="#c8a8d8" stroke-width="0.80" />
<line x1="828.8" y1="372.8" x2="836.6" y2="371.0" stroke="#c8a8d8" stroke-width="0.80" />
<line x1="827.9" y1="383.8" x2="835.7" y2="382.0" stroke="#c8a8d8" stroke-width="0.80" />
<line x1="517.0" y1="431.5" x2="717.0" y2="375.7" stroke="#28e028" stroke-width="0.90" />
<line x1="565.0" y1="431.5" x2="753.0" y2="378.6" stroke="#28e028" stroke-width="0.90" />
<line x1="624.0" y1="378.0" x2="880.0" y2="401.0" stroke="#e8e83c" stroke-width="0.80" stroke-dasharray="4 2"/>
<line x1="647.0" y1="372.0" x2="930.0" y2="397.5" stroke="#e8e83c" stroke-width="0.80" stroke-dasharray="4 2"/>
<line x1="725.0" y1="391.0" x2="940.0" y2="411.5" stroke="#e04838" stroke-width="0.90" />
<line x1="925.0" y1="397.5" x2="966.5" y2="401.5" stroke="#e04838" stroke-width="0.90" />
<line x1="688.0" y1="431.5" x2="846.0" y2="387.0" stroke="#30e0d8" stroke-width="0.90" />
<line x1="885.0" y1="373.0" x2="966.5" y2="348.5" stroke="#e030d0" stroke-width="0.90" />
<line x1="885.0" y1="374.8" x2="966.5" y2="350.3" stroke="#30d8e0" stroke-width="0.80" />
<line x1="925.0" y1="408.5" x2="940.0" y2="411.5" stroke="#e8e83c" stroke-width="0.90" />
<line x1="940.0" y1="411.5" x2="966.5" y2="402.0" stroke="#e8e83c" stroke-width="0.90" />
<path d="M918 407 l8 -2 l2 2 z M950 406.5 l8 -2 l2 2z" fill="#30e030"/>
<ellipse cx="737" cy="383" rx="12" ry="3" fill="none" stroke="#98a878" stroke-width="0.6"/>
<line x1="808.0" y1="383.0" x2="825.0" y2="384.5" stroke="#98a080" stroke-width="0.70" />
</g>
<rect x="966.5" y="45.0" width="9.7" height="396.0" fill="#f0f0f0" />
<rect x="0.0" y="0.0" width="992.0" height="45.0" fill="#3b4453" />
<rect x="0.0" y="44.2" width="992.0" height="1.0" fill="#2a303a" />
<rect x="-1.0" y="2.4" width="994.0" height="11.8" fill="#394150" stroke="#2d333e" stroke-width="0.9"/>
<g transform="translate(9.4,8.4)" stroke="#1d2532" stroke-width="0.8" paint-order="stroke" stroke-linejoin="round"><path d="M-4.5 -4 h5.5 l3 3 v5 h-8.5z" fill="#e2e4e7" /><path d="M1 -4 l3 3 h-3z" fill="#8e939a" /></g>
<g transform="translate(21.4,8.4)" stroke="#1d2532" stroke-width="0.8" paint-order="stroke" stroke-linejoin="round"><path d="M-4.5 -3 h3 l1 1 h4 v1.5 h-7 l-1 4z" fill="#c9ccd0" /><path d="M-3.2 -0.2 h8 l-2 4.2 h-7.6z" fill="#e2e4e7" /></g>
<g transform="translate(33.4,8.4)" stroke="#1d2532" stroke-width="0.8" paint-order="stroke" stroke-linejoin="round"><rect x="-4.5" y="-4.5" width="9" height="9" fill="#a4a8ae" /><rect x="-2.5" y="-4.5" width="5" height="3.2" fill="#e2e4e7" /><rect x="-3" y="1" width="6" height="3.5" fill="#e2e4e7" /><rect x="-2" y="2" width="4" height="0.8" fill="#a4a8ae" /></g>
<path d="M40.7 3.7 v9.5" stroke="#252a33" stroke-width="0.8"/><path d="M41.5 3.7 v9.5" stroke="#555e6e" stroke-width="0.6"/>
<g transform="translate(48.4,8.4)" stroke="#1d2532" stroke-width="0.8" paint-order="stroke" stroke-linejoin="round"><rect x="-3" y="-4.5" width="6" height="3" fill="#e2e4e7" /><rect x="-4.6" y="-1.8" width="9.2" height="4.2" fill="#e2e4e7" rx="0.8"/><rect x="-3" y="0.8" width="6" height="3.6" fill="#46a4ee" /><rect x="-3" y="0.2" width="6" height="0.8" fill="#8a9098" /></g>
<g transform="translate(60.4,8.4)" stroke="#1d2532" stroke-width="0.8" paint-order="stroke" stroke-linejoin="round"><path d="M-4.5 -4.5 h6 l2.5 2.5 v5 h-8.5z" fill="#d0d3d7" /><circle cx="1.5" cy="1.5" r="2.6" fill="#8a9098" /><circle cx="1.5" cy="1.5" r="1.6" fill="#e2e4e7" /><path d="M3.3 3.3 l1.5 1.5" fill="none" stroke="#c9a040" stroke-width="1.2" /></g>
<g transform="translate(72.4,8.4)" stroke="#1d2532" stroke-width="0.8" paint-order="stroke" stroke-linejoin="round"><rect x="-3" y="-4.5" width="6" height="3" fill="#e2e4e7" /><rect x="-4.6" y="-1.8" width="8" height="4" fill="#e2e4e7" rx="0.8"/><rect x="-3" y="1" width="5" height="3.4" fill="#cfd2d6" /><path d="M1 1.5 h2 v-1.2 l2 2 l-2 2 v-1.2 h-2z" fill="#46a4ee" /></g>
<g transform="translate(84.4,8.4)" stroke="#1d2532" stroke-width="0.8" paint-order="stroke" stroke-linejoin="round"><rect x="-4.6" y="-4.6" width="9.2" height="9.2" fill="#9c1c2e" rx="1.6"/><rect x="-3.2" y="-1.5" width="6.4" height="3.6" fill="#f0d8dc" /><rect x="-2.2" y="-3.4" width="3" height="1.2" fill="#e8b8c0" /></g>
<path d="M92.3 3.7 v9.5" stroke="#252a33" stroke-width="0.8"/><path d="M93.1 3.7 v9.5" stroke="#555e6e" stroke-width="0.6"/>
<g transform="translate(99.4,8.4)" stroke="#1d2532" stroke-width="0.8" paint-order="stroke" stroke-linejoin="round"><path d="M-4.5 -4.5 h5 v4 h3 v5 h-8z" fill="#c4c7cc" /><path d="M0 0.5 l4 4 M4 0.5 l-4 4" fill="none" stroke="#e2e4e7" stroke-width="1.1" /><rect x="-3.5" y="-3.3" width="3" height="0.8" fill="#6a707a" /><rect x="-3.5" y="-1.6" width="3" height="0.8" fill="#6a707a" /></g>
<g transform="translate(111.4,8.4)" stroke="#1d2532" stroke-width="0.8" paint-order="stroke" stroke-linejoin="round"><path d="M-4.5 -4.5 h4 l2 2 v5 h-6z" fill="#cdd0d4" /><path d="M-1.5 -1.8 h4 l2 2 v4.5 h-6z" fill="#e2e4e7" /><path d="M-1.5 -1.8 h4 l2 2 v4.5 h-6z" fill="none" stroke="#6a707a" stroke-width="0.5" /></g>
<g transform="translate(123.6,8.4)" stroke="#1d2532" stroke-width="0.8" paint-order="stroke" stroke-linejoin="round"><rect x="-4.5" y="-3.8" width="7" height="8" fill="#d8a060" rx="0.8"/><rect x="-2.5" y="-4.8" width="3" height="1.8" fill="#8a9098" /><path d="M-1 -1 h4 l1.8 1.8 v4 h-5.8z" fill="#e2e4e7" /></g>
<g transform="translate(135.8,8.4)" stroke="#1d2532" stroke-width="0.8" paint-order="stroke" stroke-linejoin="round"><path d="M-4.5 -4.5 h6 v6 h-6z" fill="#d4d7da" /><rect x="-3.5" y="-3.4" width="2.5" height="2.5" fill="#46a4ee" /><rect x="-3.5" y="0" width="4" height="0.8" fill="#6a707a" /><path d="M0.5 0 l4 3 l-1.6 1.6 z" fill="#f2c63a" /><circle cx="3.8" cy="3.8" r="1.1" fill="#e2e4e7" /></g>
<g transform="translate(148.0,8.4)" stroke="#1d2532" stroke-width="0.8" paint-order="stroke" stroke-linejoin="round"><path d="M-4.5 -1 h6 v5.5 h-6z" fill="#cfd2d6" /><path d="M-1 1.5 l5 -5.5" fill="none" stroke="#f2c63a" stroke-width="1.6" /><path d="M3 -3 l1.4 -1.6" fill="none" stroke="#d83c3c" stroke-width="1.6" /><circle cx="-1.5" cy="2.2" r="1.3" fill="#e2e4e7" /></g>
<path d="M156.1 3.7 v9.5" stroke="#252a33" stroke-width="0.8"/><path d="M156.9 3.7 v9.5" stroke="#555e6e" stroke-width="0.6"/>
<g transform="translate(164.0,8.4)" stroke="#1d2532" stroke-width="0.8" paint-order="stroke" stroke-linejoin="round"><path d="M-4.8 -0.6 l4.2 -3.6 v2.4 q5.2 0 5.2 4.6 q-1.6 -2 -5.2 -2 v2.4z" fill="#e2e4e7" /></g>
<g transform="translate(173.4,8.4)" stroke="#1d2532" stroke-width="0.8" paint-order="stroke" stroke-linejoin="round"><path d="M-2.6 -1.2 h5.2 l-2.6 3z" fill="#e2e4e7" /></g>
<g transform="translate(182.4,8.4)" stroke="#1d2532" stroke-width="0.8" paint-order="stroke" stroke-linejoin="round"><path d="M4.8 -0.6 l-4.2 -3.6 v2.4 q-5.2 0 -5.2 4.6 q1.6 -2 5.2 -2 v2.4z" fill="#e2e4e7" /></g>
<g transform="translate(192.0,8.4)" stroke="#1d2532" stroke-width="0.8" paint-order="stroke" stroke-linejoin="round"><path d="M-2.6 -1.2 h5.2 l-2.6 3z" fill="#e2e4e7" /></g>
<path d="M198.1 3.7 v9.5" stroke="#252a33" stroke-width="0.8"/><path d="M198.9 3.7 v9.5" stroke="#555e6e" stroke-width="0.6"/>
<g transform="translate(205.0,8.4)" stroke="#1d2532" stroke-width="0.8" paint-order="stroke" stroke-linejoin="round"><path d="M-3.8 0 l1 -0.4 l0.6 1 v-4.2 q0.7 -0.6 1.2 0 v-0.8 q0.7 -0.6 1.3 0 v0.6 q0.7 -0.5 1.3 0 v1 q0.7 -0.4 1.1 0.2 v4 q-0.4 2.4 -2 3.2 h-2.6 q-1.2 -2.4 -1.9 -4.6z" fill="#e2e4e7" /></g>
<g transform="translate(217.0,8.4)" stroke="#1d2532" stroke-width="0.8" paint-order="stroke" stroke-linejoin="round"><circle cx="1" cy="0.8" r="2.4" fill="none" stroke="#e2e4e7" stroke-width="1"/><path d="M2.8 2.6 l2 2" fill="none" stroke="#e2e4e7" stroke-width="1.2" /><path d="M-4.5 -2.5 h3.4 M-2.8 -4.2 v3.4" fill="none" stroke="#e2e4e7" stroke-width="0.9" /><path d="M-3.5 1.5 l1.2 1.6 h-2.4z" fill="#e2e4e7" /></g>
<g transform="translate(229.0,8.4)" stroke="#1d2532" stroke-width="0.8" paint-order="stroke" stroke-linejoin="round"><path d="M-4.2 -4 h7 v6.5 h-7z" fill="none" stroke="#e2e4e7" stroke-width="0.9" /><circle cx="2.4" cy="2.2" r="1.7" fill="none" stroke="#e2e4e7" stroke-width="0.9"/><path d="M3.6 3.4 l1.4 1.4" fill="none" stroke="#e2e4e7" stroke-width="1.1" /></g>
<g transform="translate(241.4,8.4)" stroke="#1d2532" stroke-width="0.8" paint-order="stroke" stroke-linejoin="round"><path d="M-4 -4 l2 2 M4 -4 l-2 2 M-4 4 l2 -2" fill="none" stroke="#46a4ee" stroke-width="1" /><circle cx="0.5" cy="0.3" r="2.2" fill="none" stroke="#e2e4e7" stroke-width="0.9"/><path d="M2.2 2 l2.2 2.2" fill="none" stroke="#e2e4e7" stroke-width="1.2" /><rect x="-4.6" y="-4.6" width="2" height="2" fill="#46a4ee" /><rect x="2.6" y="-4.6" width="2" height="2" fill="#46a4ee" /><rect x="-4.6" y="2.6" width="2" height="2" fill="#46a4ee" /></g>
<path d="M249.3 3.7 v9.5" stroke="#252a33" stroke-width="0.8"/><path d="M250.1 3.7 v9.5" stroke="#555e6e" stroke-width="0.6"/>
<g transform="translate(257.0,8.4)" stroke="#1d2532" stroke-width="0.8" paint-order="stroke" stroke-linejoin="round"><rect x="-3.2" y="-4.6" width="6.4" height="9.2" fill="#d6d9dc" rx="0.6"/><rect x="-2" y="-3.4" width="4" height="2.6" fill="#46a4ee" /><rect x="-2" y="0.2" width="1.6" height="1.2" fill="#6a707a" /><rect x="0.4" y="0.2" width="1.6" height="1.2" fill="#6a707a" /><rect x="-2" y="2.2" width="1.6" height="1.2" fill="#6a707a" /><rect x="0.4" y="2.2" width="1.6" height="1.2" fill="#6a707a" /></g>
<g transform="translate(269.0,8.4)" stroke="#1d2532" stroke-width="0.8" paint-order="stroke" stroke-linejoin="round"><rect x="-4" y="-4.6" width="3.6" height="9.2" fill="#d6d9dc" /><rect x="0.4" y="-4.6" width="3.6" height="9.2" fill="#d6d9dc" /><rect x="-3.2" y="-3.4" width="2" height="1" fill="#6a707a" /><rect x="1.2" y="-3.4" width="2" height="1" fill="#6a707a" /><rect x="-3.2" y="-1" width="2" height="1" fill="#6a707a" /><rect x="1.2" y="-1" width="2" height="1" fill="#6a707a" /><rect x="-3.2" y="1.4" width="2" height="1" fill="#6a707a" /><rect x="1.2" y="1.4" width="2" height="1" fill="#6a707a" /></g>
<g transform="translate(281.0,8.4)" stroke="#1d2532" stroke-width="0.8" paint-order="stroke" stroke-linejoin="round"><rect x="-3.6" y="-4.6" width="6" height="9.2" fill="#e0e2e5" /><rect x="-2.6" y="-3.2" width="3.6" height="0.9" fill="#5a606a" /><rect x="-2.6" y="-1.2" width="3.6" height="0.9" fill="#5a606a" /><rect x="-2.6" y="0.8" width="3.6" height="0.9" fill="#5a606a" /><rect x="2.6" y="-4.6" width="1.4" height="9.2" fill="#8a9098" /></g>
<g transform="translate(293.0,8.4)" stroke="#1d2532" stroke-width="0.8" paint-order="stroke" stroke-linejoin="round"><path d="M-4.5 4.5 v-7 l3 -2 v9z" fill="#c4c7cc" /><path d="M-1 4.5 v-9 l3.4 1.6 l2 7.4z" fill="#e2e4e7" /><path d="M0 -1 l2 4" fill="none" stroke="#8a9098" stroke-width="0.7" /></g>
<g transform="translate(305.4,8.4)" stroke="#1d2532" stroke-width="0.8" paint-order="stroke" stroke-linejoin="round"><rect x="-4.5" y="-4.5" width="5" height="5" fill="#f2c63a" /><rect x="-1.5" y="-0.5" width="6" height="5" fill="#dfe1e4" /><rect x="0.5" y="1.5" width="2.4" height="2.4" fill="#7a8088" /></g>
<g transform="translate(317.4,8.4)" stroke="#1d2532" stroke-width="0.8" paint-order="stroke" stroke-linejoin="round"><rect x="-3.2" y="-4.6" width="6.4" height="9.2" fill="#a4a8ae" rx="0.6"/><rect x="-2.2" y="-3.6" width="4.4" height="2" fill="#d8dadd" /><rect x="-2.2" y="-0.6" width="1.2" height="1.2" fill="#4a505a" /><rect x="-0.6" y="-0.6" width="1.2" height="1.2" fill="#4a505a" /><rect x="1" y="-0.6" width="1.2" height="1.2" fill="#4a505a" /><rect x="-2.2" y="1.4" width="1.2" height="1.2" fill="#4a505a" /><rect x="-0.6" y="1.4" width="1.2" height="1.2" fill="#4a505a" /><rect x="1" y="1.4" width="1.2" height="1.2" fill="#4a505a" /></g>
<path d="M325.1 3.7 v9.5" stroke="#252a33" stroke-width="0.8"/><path d="M325.9 3.7 v9.5" stroke="#555e6e" stroke-width="0.6"/>
<g transform="translate(332.4,8.4)" stroke="#1d2532" stroke-width="0.8" paint-order="stroke" stroke-linejoin="round"><circle cx="0" cy="0" r="4.7" fill="#e2e4e7" /><circle cx="0" cy="0" r="3.5" fill="#394150" /><text x="0" y="2.6" font-size="7" font-weight="bold" text-anchor="middle" fill="#e2e4e7">?</text></g>
<path d="M340.3 3.7 v9.5" stroke="#252a33" stroke-width="0.8"/><path d="M341.1 3.7 v9.5" stroke="#555e6e" stroke-width="0.6"/>
<g transform="translate(349.0,8.4)" stroke="#1d2532" stroke-width="0.8" paint-order="stroke" stroke-linejoin="round"><path d="M-4.5 -4 h5.5 l3 3 v5 h-8.5z" fill="#e2e4e7" /><path d="M1 -4 l3 3 h-3z" fill="#8e939a" /></g>
<g transform="translate(361.0,8.4)" stroke="#1d2532" stroke-width="0.8" paint-order="stroke" stroke-linejoin="round"><path d="M-4.5 -3 h3 l1 1 h4 v1.5 h-7 l-1 4z" fill="#c9ccd0" /><path d="M-3.2 -0.2 h8 l-2 4.2 h-7.6z" fill="#e2e4e7" /></g>
<g transform="translate(373.0,8.4)" stroke="#1d2532" stroke-width="0.8" paint-order="stroke" stroke-linejoin="round"><rect x="-4.5" y="-4.5" width="9" height="9" fill="#a4a8ae" /><rect x="-2.5" y="-4.5" width="5" height="3.2" fill="#e2e4e7" /><rect x="-3" y="1" width="6" height="3.5" fill="#e2e4e7" /><rect x="-2" y="2" width="4" height="0.8" fill="#a4a8ae" /></g>
<path d="M380.7 3.7 v9.5" stroke="#252a33" stroke-width="0.8"/><path d="M381.5 3.7 v9.5" stroke="#555e6e" stroke-width="0.6"/>
<g transform="translate(388.4,8.4)" stroke="#1d2532" stroke-width="0.8" paint-order="stroke" stroke-linejoin="round"><rect x="-3" y="-4.5" width="6" height="3" fill="#e2e4e7" /><rect x="-4.6" y="-1.8" width="9.2" height="4.2" fill="#e2e4e7" rx="0.8"/><rect x="-3" y="0.8" width="6" height="3.6" fill="#46a4ee" /><rect x="-3" y="0.2" width="6" height="0.8" fill="#8a9098" /></g>
<g transform="translate(401.0,8.4)" stroke="#1d2532" stroke-width="0.8" paint-order="stroke" stroke-linejoin="round"><path d="M-4.5 -4.5 h6 l2.5 2.5 v5 h-8.5z" fill="#d0d3d7" /><circle cx="1.5" cy="1.5" r="2.6" fill="#8a9098" /><circle cx="1.5" cy="1.5" r="1.6" fill="#e2e4e7" /><path d="M3.3 3.3 l1.5 1.5" fill="none" stroke="#c9a040" stroke-width="1.2" /></g>
<g transform="translate(413.4,8.4)" stroke="#1d2532" stroke-width="0.8" paint-order="stroke" stroke-linejoin="round"><rect x="-3" y="-4.5" width="6" height="3" fill="#e2e4e7" /><rect x="-4.6" y="-1.8" width="8" height="4" fill="#e2e4e7" rx="0.8"/><rect x="-3" y="1" width="5" height="3.4" fill="#cfd2d6" /><path d="M1 1.5 h2 v-1.2 l2 2 l-2 2 v-1.2 h-2z" fill="#46a4ee" /></g>
<g transform="translate(426.0,8.4)" stroke="#1d2532" stroke-width="0.8" paint-order="stroke" stroke-linejoin="round"><rect x="-4.6" y="-4.6" width="9.2" height="9.2" fill="#9c1c2e" rx="1.6"/><rect x="-3.2" y="-1.5" width="6.4" height="3.6" fill="#f0d8dc" /><rect x="-2.2" y="-3.4" width="3" height="1.2" fill="#e8b8c0" /></g>
<path d="M433.7 3.7 v9.5" stroke="#252a33" stroke-width="0.8"/><path d="M434.5 3.7 v9.5" stroke="#555e6e" stroke-width="0.6"/>
<g transform="translate(441.0,8.4)" stroke="#1d2532" stroke-width="0.8" paint-order="stroke" stroke-linejoin="round"><path d="M-4.5 -4.5 h6 v6 h-6z" fill="#d4d7da" /><rect x="-3.5" y="-3.4" width="2.5" height="2.5" fill="#46a4ee" /><rect x="-3.5" y="0" width="4" height="0.8" fill="#6a707a" /><path d="M0.5 0 l4 3 l-1.6 1.6 z" fill="#f2c63a" /><circle cx="3.8" cy="3.8" r="1.1" fill="#e2e4e7" /></g>
<g transform="translate(453.0,8.4)" stroke="#1d2532" stroke-width="0.8" paint-order="stroke" stroke-linejoin="round"><path d="M-4.5 -1 h6 v5.5 h-6z" fill="#cfd2d6" /><path d="M-1 1.5 l5 -5.5" fill="none" stroke="#f2c63a" stroke-width="1.6" /><path d="M3 -3 l1.4 -1.6" fill="none" stroke="#d83c3c" stroke-width="1.6" /><circle cx="-1.5" cy="2.2" r="1.3" fill="#e2e4e7" /></g>
<path d="M460.7 3.7 v9.5" stroke="#252a33" stroke-width="0.8"/><path d="M461.5 3.7 v9.5" stroke="#555e6e" stroke-width="0.6"/>
<g transform="translate(468.4,8.4)" stroke="#1d2532" stroke-width="0.8" paint-order="stroke" stroke-linejoin="round"><path d="M-4.8 -0.6 l4.2 -3.6 v2.4 q5.2 0 5.2 4.6 q-1.6 -2 -5.2 -2 v2.4z" fill="#e2e4e7" /></g>
<g transform="translate(478.0,8.4)" stroke="#1d2532" stroke-width="0.8" paint-order="stroke" stroke-linejoin="round"><path d="M-2.6 -1.2 h5.2 l-2.6 3z" fill="#e2e4e7" /></g>
<g transform="translate(487.4,8.4)" stroke="#1d2532" stroke-width="0.8" paint-order="stroke" stroke-linejoin="round"><path d="M4.8 -0.6 l-4.2 -3.6 v2.4 q-5.2 0 -5.2 4.6 q1.6 -2 5.2 -2 v2.4z" fill="#e2e4e7" /></g>
<g transform="translate(497.4,8.4)" stroke="#1d2532" stroke-width="0.8" paint-order="stroke" stroke-linejoin="round"><path d="M-2.6 -1.2 h5.2 l-2.6 3z" fill="#e2e4e7" /></g>
<path d="M503.1 3.7 v9.5" stroke="#252a33" stroke-width="0.8"/><path d="M503.9 3.7 v9.5" stroke="#555e6e" stroke-width="0.6"/>
<g transform="translate(509.4,8.4)" stroke="#1d2532" stroke-width="0.8" paint-order="stroke" stroke-linejoin="round"><rect x="-3.2" y="-4.6" width="6.4" height="9.2" fill="#d6d9dc" rx="0.6"/><rect x="-2" y="-3.4" width="4" height="2.6" fill="#46a4ee" /><rect x="-2" y="0.2" width="1.6" height="1.2" fill="#6a707a" /><rect x="0.4" y="0.2" width="1.6" height="1.2" fill="#6a707a" /><rect x="-2" y="2.2" width="1.6" height="1.2" fill="#6a707a" /><rect x="0.4" y="2.2" width="1.6" height="1.2" fill="#6a707a" /></g>
<g transform="translate(521.6,8.4)" stroke="#1d2532" stroke-width="0.8" paint-order="stroke" stroke-linejoin="round"><rect x="-4" y="-4.6" width="3.6" height="9.2" fill="#d6d9dc" /><rect x="0.4" y="-4.6" width="3.6" height="9.2" fill="#d6d9dc" /><rect x="-3.2" y="-3.4" width="2" height="1" fill="#6a707a" /><rect x="1.2" y="-3.4" width="2" height="1" fill="#6a707a" /><rect x="-3.2" y="-1" width="2" height="1" fill="#6a707a" /><rect x="1.2" y="-1" width="2" height="1" fill="#6a707a" /><rect x="-3.2" y="1.4" width="2" height="1" fill="#6a707a" /><rect x="1.2" y="1.4" width="2" height="1" fill="#6a707a" /></g>
<g transform="translate(533.8,8.4)" stroke="#1d2532" stroke-width="0.8" paint-order="stroke" stroke-linejoin="round"><rect x="-3.6" y="-4.6" width="6" height="9.2" fill="#e0e2e5" /><rect x="-2.6" y="-3.2" width="3.6" height="0.9" fill="#5a606a" /><rect x="-2.6" y="-1.2" width="3.6" height="0.9" fill="#5a606a" /><rect x="-2.6" y="0.8" width="3.6" height="0.9" fill="#5a606a" /><rect x="2.6" y="-4.6" width="1.4" height="9.2" fill="#8a9098" /></g>
<g transform="translate(545.8,8.4)" stroke="#1d2532" stroke-width="0.8" paint-order="stroke" stroke-linejoin="round"><path d="M-4.5 4.5 v-7 l3 -2 v9z" fill="#c4c7cc" /><path d="M-1 4.5 v-9 l3.4 1.6 l2 7.4z" fill="#e2e4e7" /><path d="M0 -1 l2 4" fill="none" stroke="#8a9098" stroke-width="0.7" /></g>
<g transform="translate(558.0,8.4)" stroke="#1d2532" stroke-width="0.8" paint-order="stroke" stroke-linejoin="round"><rect x="-4.5" y="-4.5" width="5" height="5" fill="#f2c63a" /><rect x="-1.5" y="-0.5" width="6" height="5" fill="#dfe1e4" /><rect x="0.5" y="1.5" width="2.4" height="2.4" fill="#7a8088" /></g>
<g transform="translate(570.0,8.4)" stroke="#1d2532" stroke-width="0.8" paint-order="stroke" stroke-linejoin="round"><rect x="-3.2" y="-4.6" width="6.4" height="9.2" fill="#a4a8ae" rx="0.6"/><rect x="-2.2" y="-3.6" width="4.4" height="2" fill="#d8dadd" /><rect x="-2.2" y="-0.6" width="1.2" height="1.2" fill="#4a505a" /><rect x="-0.6" y="-0.6" width="1.2" height="1.2" fill="#4a505a" /><rect x="1" y="-0.6" width="1.2" height="1.2" fill="#4a505a" /><rect x="-2.2" y="1.4" width="1.2" height="1.2" fill="#4a505a" /><rect x="-0.6" y="1.4" width="1.2" height="1.2" fill="#4a505a" /><rect x="1" y="1.4" width="1.2" height="1.2" fill="#4a505a" /></g>
<path d="M577.7 3.7 v9.5" stroke="#252a33" stroke-width="0.8"/><path d="M578.5 3.7 v9.5" stroke="#555e6e" stroke-width="0.6"/>
<g transform="translate(585.4,8.4)" stroke="#1d2532" stroke-width="0.8" paint-order="stroke" stroke-linejoin="round"><circle cx="0" cy="0" r="4.7" fill="#e2e4e7" /><circle cx="0" cy="0" r="3.5" fill="#394150" /><text x="0" y="2.6" font-size="7" font-weight="bold" text-anchor="middle" fill="#e2e4e7">?</text></g>
<path d="M593.3 3.7 v9.5" stroke="#252a33" stroke-width="0.8"/><path d="M594.1 3.7 v9.5" stroke="#555e6e" stroke-width="0.6"/>
<g transform="translate(602.4,8.4)" stroke="#1d2532" stroke-width="0.8" paint-order="stroke" stroke-linejoin="round"><path d="M-4.5 -4.5 h6 v6 h-6z" fill="none" stroke="#e2e4e7" stroke-width="0.9" /><circle cx="1.8" cy="1.8" r="2.8" fill="none" stroke="#e2e4e7" stroke-width="0.9"/></g>
<path d="M610.7 3.7 v9.5" stroke="#252a33" stroke-width="0.8"/><path d="M611.5 3.7 v9.5" stroke="#555e6e" stroke-width="0.6"/>
<g transform="translate(618.4,8.4)" stroke="#1d2532" stroke-width="0.8" paint-order="stroke" stroke-linejoin="round"><circle cx="0" cy="0" r="4.6" fill="#e2e4e7" /><path d="M0 -3.2 q3 4.4 0 6 q-3 -1.6 0 -6" fill="#46a4ee" /></g>
<g transform="translate(630.4,8.4)" stroke="#1d2532" stroke-width="0.8" paint-order="stroke" stroke-linejoin="round"><circle cx="0" cy="0" r="4.3" fill="none" stroke="#e2e4e7" stroke-width="0.9"/><path d="M0 -3 l3 5 h-6z" fill="none" stroke="#e2e4e7" stroke-width="0.8" /></g>
<g transform="translate(642.4,8.4)" stroke="#1d2532" stroke-width="0.8" paint-order="stroke" stroke-linejoin="round"><circle cx="0" cy="0" r="4.7" fill="#2f8fe8"/><circle cx="-1.2" cy="-1.6" r="2" fill="#7cc4fa" opacity="0.8"/></g>
<g transform="translate(654.6,8.4)" stroke="#1d2532" stroke-width="0.8" paint-order="stroke" stroke-linejoin="round"><circle cx="0" cy="0" r="4.7" fill="#d06820"/><path d="M-4.7 0 a4.7 4.7 0 0 0 9.4 0 q-4.7 2 -9.4 0" fill="#3a8ce0"/><circle cx="-1.2" cy="-2" r="1.6" fill="#f0a060" opacity="0.8"/></g>
<path d="M662.7 3.7 v9.5" stroke="#252a33" stroke-width="0.8"/><path d="M663.5 3.7 v9.5" stroke="#555e6e" stroke-width="0.6"/>
<g transform="translate(670.4,8.4)" stroke="#1d2532" stroke-width="0.8" paint-order="stroke" stroke-linejoin="round"><path d="M-4.6 0 a4.6 4.6 0 0 1 9.2 0 v4 h-9.2z" fill="#d0d3d7" /><rect x="0" y="0.5" width="4.6" height="4" fill="#e2e4e7" /><path d="M1 0.5 v-1.4 a1.3 1.3 0 0 1 2.6 0 v1.4" fill="none" stroke="#8a9098" stroke-width="0.8" /></g>
<path d="M678.7 3.7 v9.5" stroke="#252a33" stroke-width="0.8"/><path d="M679.5 3.7 v9.5" stroke="#555e6e" stroke-width="0.6"/>
<g transform="translate(686.4,8.4)" stroke="#1d2532" stroke-width="0.8" paint-order="stroke" stroke-linejoin="round"><rect x="-4.5" y="-4.5" width="3.6" height="3.6" fill="#46a4ee" /><rect x="-4.5" y="0.6" width="3.6" height="3.6" fill="#46a4ee" /><rect x="0.4" y="-4.5" width="3.6" height="3.6" fill="none" stroke="#e2e4e7" stroke-width="0.8"/><path d="M0.5 4 l4 -4.5" fill="none" stroke="#f2c63a" stroke-width="1.4" /><path d="M3.6 0.6 l1 -1.2" fill="none" stroke="#d83c3c" stroke-width="1.4" /></g>
<g transform="translate(778.4,8.4)" stroke="#1d2532" stroke-width="0.8" paint-order="stroke" stroke-linejoin="round"><rect x="-4.5" y="-4.5" width="4" height="4" fill="#46a4ee" /><rect x="0.5" y="-4.5" width="4" height="4" fill="#46a4ee" /><rect x="-4.5" y="0.5" width="4" height="4" fill="#46a4ee" /><rect x="0.5" y="0.5" width="4" height="4" fill="#cfd2d6" /></g>
<g transform="translate(790.4,8.4)" stroke="#1d2532" stroke-width="0.8" paint-order="stroke" stroke-linejoin="round"><rect x="-4.5" y="-4.5" width="4" height="4" fill="#46a4ee" /><rect x="0.5" y="-4.5" width="4" height="4" fill="#46a4ee" /><rect x="-4.5" y="0.5" width="4" height="4" fill="#46a4ee" /><path d="M0.6 0.6 l4 4 M4.6 0.6 l-4 4" fill="none" stroke="#d83c3c" stroke-width="1.3" /></g>
<path d="M799.7 3.7 v9.5" stroke="#252a33" stroke-width="0.8"/><path d="M800.5 3.7 v9.5" stroke="#555e6e" stroke-width="0.6"/>
<g transform="translate(808.0,8.4)" stroke="#1d2532" stroke-width="0.8" paint-order="stroke" stroke-linejoin="round"><rect x="-4.5" y="-4" width="5" height="4" fill="#e2e4e7" /><rect x="-2.5" y="-2" width="5" height="4" fill="#bfc3c8" /><rect x="-0.5" y="0.2" width="4.6" height="4.2" fill="#46a4ee" /><path d="M1.5 -3.5 q3 0 3 2.6" fill="none" stroke="#d83c3c" stroke-width="0.8" /></g>
<g transform="translate(820.0,8.4)" stroke="#1d2532" stroke-width="0.8" paint-order="stroke" stroke-linejoin="round"><rect x="-4.5" y="-4" width="5" height="4" fill="#e2e4e7" /><rect x="-2.5" y="-2" width="5" height="4" fill="#bfc3c8" /><rect x="-0.5" y="0.2" width="4.6" height="4.2" fill="#e6953a" /><path d="M1.5 -3.5 q3 0 3 2.6" fill="none" stroke="#d83c3c" stroke-width="0.8" /></g>
<path d="M828.5 3.7 v9.5" stroke="#252a33" stroke-width="0.8"/><path d="M829.3 3.7 v9.5" stroke="#555e6e" stroke-width="0.6"/>
<g transform="translate(836.4,8.4)" stroke="#1d2532" stroke-width="0.8" paint-order="stroke" stroke-linejoin="round"><path d="M-4 4 q-1.5 -5 3 -8 q3 2 3.6 8z" fill="#46a4ee" /><path d="M-1.5 -2.5 q4 1 3.5 6.5" fill="none" stroke="#e2e4e7" stroke-width="1.1" /><circle cx="-2" cy="2.6" r="1.6" fill="#8a9098" /></g>
<path d="M844.7 3.7 v9.5" stroke="#252a33" stroke-width="0.8"/><path d="M845.5 3.7 v9.5" stroke="#555e6e" stroke-width="0.6"/>
<g transform="translate(852.4,8.4)" stroke="#1d2532" stroke-width="0.8" paint-order="stroke" stroke-linejoin="round"><rect x="-4.5" y="-4" width="5" height="4" fill="#e2e4e7" /><rect x="-2.5" y="-2" width="5" height="4" fill="#bfc3c8" /><rect x="-0.5" y="0.2" width="4.6" height="4.2" fill="#e6953a" /><path d="M1.5 -3.5 q3 0 3 2.6" fill="none" stroke="#d83c3c" stroke-width="0.8" /></g>
<g transform="translate(864.4,8.4)" stroke="#1d2532" stroke-width="0.8" paint-order="stroke" stroke-linejoin="round"><rect x="-4.5" y="-4" width="5" height="4" fill="#e2e4e7" /><rect x="-2.5" y="-2" width="5" height="4" fill="#bfc3c8" /><rect x="-0.5" y="0.2" width="4.6" height="4.2" fill="#46a4ee" /><path d="M1.5 -3.5 q3 0 3 2.6" fill="none" stroke="#d83c3c" stroke-width="0.8" /></g>
<path d="M871.7 3.7 v9.5" stroke="#252a33" stroke-width="0.8"/><path d="M872.5 3.7 v9.5" stroke="#555e6e" stroke-width="0.6"/>
<g transform="translate(879.4,8.4)" stroke="#1d2532" stroke-width="0.8" paint-order="stroke" stroke-linejoin="round"><rect x="-4.5" y="-4" width="5" height="4" fill="#e2e4e7" /><rect x="-2.5" y="-2" width="5" height="4" fill="#bfc3c8" /><rect x="-0.5" y="0.2" width="4.6" height="4.2" fill="#e6953a" /><path d="M1.5 -3.5 q3 0 3 2.6" fill="none" stroke="#d83c3c" stroke-width="0.8" /></g>
<g transform="translate(891.4,8.4)" stroke="#1d2532" stroke-width="0.8" paint-order="stroke" stroke-linejoin="round"><rect x="-4.5" y="-4" width="5" height="4" fill="#e2e4e7" /><rect x="-2.5" y="-2" width="5" height="4" fill="#bfc3c8" /><rect x="-0.5" y="0.2" width="4.6" height="4.2" fill="#46a4ee" /><path d="M1.5 -3.5 q3 0 3 2.6" fill="none" stroke="#d83c3c" stroke-width="0.8" /></g>
<path d="M898.3 3.7 v9.5" stroke="#252a33" stroke-width="0.8"/><path d="M899.1 3.7 v9.5" stroke="#555e6e" stroke-width="0.6"/>
<g transform="translate(906.4,8.4)" stroke="#1d2532" stroke-width="0.8" paint-order="stroke" stroke-linejoin="round"><path d="M-4.6 1.6 l6 -6 l3 3 l-6 6z" fill="#e2e4e7" /><path d="M-1.2 -1.8 l3 3" fill="none" stroke="#394150" stroke-width="1.1" /></g>
<g transform="translate(918.4,8.4)" stroke="#1d2532" stroke-width="0.8" paint-order="stroke" stroke-linejoin="round"><path d="M-4 3.5 q4 -3 8 0" fill="none" stroke="#a4a8ae" stroke-width="1" /><circle cx="-2" cy="-1.5" r="1.1" fill="#a4a8ae" /><circle cx="2" cy="-1.5" r="1.1" fill="#a4a8ae" /><path d="M-4.5 -4 h9" fill="none" stroke="#a4a8ae" stroke-width="0.8" /></g>
<path d="M926.7 3.7 v9.5" stroke="#252a33" stroke-width="0.8"/><path d="M927.5 3.7 v9.5" stroke="#555e6e" stroke-width="0.6"/>
<g transform="translate(934.6,8.4)" stroke="#1d2532" stroke-width="0.8" paint-order="stroke" stroke-linejoin="round"><rect x="-4.5" y="-4.5" width="9" height="9" fill="#a4a8ae" /><rect x="-2.5" y="-4.5" width="5" height="3.2" fill="#e2e4e7" /><rect x="-3" y="1" width="6" height="3.5" fill="#e2e4e7" /><rect x="-2" y="2" width="4" height="0.8" fill="#a4a8ae" /></g>
<g transform="translate(947.4,8.4)" stroke="#1d2532" stroke-width="0.8" paint-order="stroke" stroke-linejoin="round"><rect x="-3" y="-4.5" width="6" height="3" fill="#e2e4e7" /><rect x="-4.6" y="-1.8" width="9.2" height="4.2" fill="#e2e4e7" rx="0.8"/><rect x="-3" y="0.8" width="6" height="3.6" fill="#46a4ee" /><rect x="-3" y="0.2" width="6" height="0.8" fill="#8a9098" /></g>
<g transform="translate(960.0,8.4)" stroke="#1d2532" stroke-width="0.8" paint-order="stroke" stroke-linejoin="round"><path d="M-4.2 -4.5 v9 M4.2 -4.5 v9" fill="none" stroke="#a4a8ae" stroke-width="1.3" /><path d="M-4 -1.2 h8" fill="none" stroke="#46a4ee" stroke-width="1.8" /></g>
<g transform="translate(972.4,8.4)" stroke="#1d2532" stroke-width="0.8" paint-order="stroke" stroke-linejoin="round"><path d="M-4.5 3.5 l2 -3 v4z M4.5 3.5 l-2 -3 v4z" fill="none" stroke="#a4a8ae" stroke-width="0.9" /><path d="M-4 2 h8" fill="none" stroke="#a4a8ae" stroke-width="0.9" /><path d="M-1 1.5 l4.2 -5" fill="none" stroke="#f2c63a" stroke-width="1.5" /><path d="M2.6 -3 l1.2 -1.5" fill="none" stroke="#e2e4e7" stroke-width="1.5" /></g>
<g transform="translate(984.4,8.4)" stroke="#1d2532" stroke-width="0.8" paint-order="stroke" stroke-linejoin="round"><rect x="-3.8" y="-4.6" width="5.8" height="8" fill="#d4d7da" rx="0.5"/><rect x="-2.8" y="-3.6" width="3.8" height="2.4" fill="#46a4ee" /><path d="M0.2 0.6 l4.4 3 l-1.8 1.4 z" fill="#f2c63a" /><circle cx="3.4" cy="1.2" r="1.6" fill="#e2e4e7" /></g>
<path d="M1.2 4.4 v8.0" stroke="#6a7484" stroke-width="1.2"/>
<rect x="697" y="3.2" width="74.2" height="10.4" fill="#e9eaec"/><rect x="698.4" y="4.4" width="71.4" height="8" fill="#fbfbfb"/>
<rect x="-1.0" y="16.4" width="967.6" height="11.9" fill="#394150" stroke="#2d333e" stroke-width="0.9"/>
<g transform="translate(9.4,22.6)" stroke="#1d2532" stroke-width="0.8" paint-order="stroke" stroke-linejoin="round"><path d="M-4.5 -2.5 l2 -2 h7 v6 l-2 2 h-3 v1 h-4z" fill="#dcdee1" /><path d="M-4.5 -2.5 h7 l2 -2 h-7z" fill="#e2e4e7" /></g>
<g transform="translate(21.4,22.6)" stroke="#1d2532" stroke-width="0.8" paint-order="stroke" stroke-linejoin="round"><path d="M-4.5 -2.5 l2 -2 h7 v7 l-2 2 h-7z" fill="#d0d3d6" /><path d="M-4.5 -2.5 h7 l2 -2 h-7z" fill="#e2e4e7" /><path d="M2.5 -2.5 l2 -2 v7 l-2 2z" fill="#b8bcc1" /></g>
<g transform="translate(33.4,22.6)" stroke="#1d2532" stroke-width="0.8" paint-order="stroke" stroke-linejoin="round"><path d="M-4.5 -4.5 l9 9 h-9z" fill="#e4e6e8" /><path d="M-4.5 -4.5 l2 1 v8 h-2z" fill="#bcc0c5" /></g>
<g transform="translate(45.4,22.6)" stroke="#1d2532" stroke-width="0.8" paint-order="stroke" stroke-linejoin="round"><path d="M0 -4.8 l4.8 8 q-4.8 2.6 -9.6 0z" fill="#e6e8ea" /></g>
<g transform="translate(57.4,22.6)" stroke="#1d2532" stroke-width="0.8" paint-order="stroke" stroke-linejoin="round"><circle cx="0" cy="0" r="4.8" fill="#e0e2e5" /><ellipse cx="0" cy="0.8" rx="4.7" ry="1.2" fill="none" stroke="#b4b8be" stroke-width="0.5"/></g>
<g transform="translate(69.4,22.6)" stroke="#1d2532" stroke-width="0.8" paint-order="stroke" stroke-linejoin="round"><path d="M-4.4 -3.2 q4.4 -2.6 8.8 0 v6.4 q-4.4 2.6 -8.8 0z" fill="#dcdee1" /><ellipse cx="0" cy="-3.2" rx="4.4" ry="1.5" fill="#e2e4e7"/></g>
<g transform="translate(81.4,22.6)" stroke="#1d2532" stroke-width="0.8" paint-order="stroke" stroke-linejoin="round"><ellipse cx="0" cy="0" rx="4.8" ry="3.4" fill="#e2e4e7"/><ellipse cx="0" cy="-0.2" rx="1.7" ry="0.9" fill="#394150"/></g>
<g transform="translate(93.4,22.6)" stroke="#1d2532" stroke-width="0.8" paint-order="stroke" stroke-linejoin="round"><path d="M0 -4.8 l4.8 6.4 l-4.8 3.2 l-4.8 -3.2z" fill="#e6e8ea" /><path d="M0 -4.8 l4.8 6.4 l-4.8 3.2z" fill="#c4c8cc" /></g>
<g transform="translate(105.4,22.6)" stroke="#1d2532" stroke-width="0.8" paint-order="stroke" stroke-linejoin="round"><ellipse cx="0.5" cy="-3.2" rx="3.8" ry="1.4" fill="none" stroke="#a4a8ae" stroke-width="0.8"/><ellipse cx="0.5" cy="-1" rx="3.8" ry="1.4" fill="none" stroke="#a4a8ae" stroke-width="0.8"/><ellipse cx="0.5" cy="1.2" rx="3.8" ry="1.4" fill="none" stroke="#a4a8ae" stroke-width="0.8"/><ellipse cx="0.5" cy="3.4" rx="3.8" ry="1.4" fill="none" stroke="#a4a8ae" stroke-width="0.8"/><rect x="-4.6" y="-4.6" width="1" height="9.2" fill="#46a4ee" /></g>
<g transform="translate(117.6,22.6)" stroke="#1d2532" stroke-width="0.8" paint-order="stroke" stroke-linejoin="round"><path d="M-4.6 3 l3 -6 h6.2 l-3 6z" fill="#d8a060" /><path d="M-4.6 3 l3 -6 h6.2 l-3 6z" fill="none" stroke="#e6953a" stroke-width="0.5"/></g>
<path d="M125.1 17.9 v9.5" stroke="#252a33" stroke-width="0.8"/><path d="M125.9 17.9 v9.5" stroke="#555e6e" stroke-width="0.6"/>
<g transform="translate(132.4,22.6)" stroke="#1d2532" stroke-width="0.8" paint-order="stroke" stroke-linejoin="round"><path d="M-4.5 -2.5 l2 -2 h7 v7 l-2 2 h-7z" fill="#46a4ee" /><path d="M-4.5 -2.5 h7 l2 -2 h-7z" fill="#9ad0f8" /><path d="M2.5 -2.5 l2 -2 v7 l-2 2z" fill="#2f80d0" /><rect x="3.6" y="-4.6" width="1" height="9.2" fill="#e2e4e7" /></g>
<g transform="translate(144.6,22.6)" stroke="#1d2532" stroke-width="0.8" paint-order="stroke" stroke-linejoin="round"><path d="M-3 0 l3 -4.6 l3 4.6 v3 h-6z" fill="#46a4ee" /><rect x="-4.6" y="3" width="9.2" height="1.4" fill="#e2e4e7" /><path d="M-3 0 l3 -4.6 l3 4.6z" fill="#8ccaf8" /></g>
<g transform="translate(156.8,22.6)" stroke="#1d2532" stroke-width="0.8" paint-order="stroke" stroke-linejoin="round"><path d="M-4.6 -1 q0 -3.4 4.6 -3.4 q4.6 0 4.6 3.4 v1.4 h-9.2z" fill="#46a4ee" /><rect x="-2" y="0.4" width="4.4" height="4.2" fill="#e2e4e7" /></g>
<g transform="translate(169.0,22.6)" stroke="#1d2532" stroke-width="0.8" paint-order="stroke" stroke-linejoin="round"><path d="M-4.6 -3.6 q4.6 -2 9.2 0 v4.6 q-4.6 2 -9.2 0z" fill="#46a4ee" /><path d="M-4.6 -0.6 q4.6 2 9.2 0" fill="none" stroke="#e2e4e7" stroke-width="0.9" /><rect x="-1" y="2.2" width="3" height="2.2" fill="#e2e4e7" /></g>
<g transform="translate(181.2,22.6)" stroke="#1d2532" stroke-width="0.8" paint-order="stroke" stroke-linejoin="round"><path d="M-4.6 -4.4 h9.2 v3.4 l-3 3 h-3.2 l-3 -3z" fill="#46a4ee" /><circle cx="0.6" cy="2.6" r="2" fill="#e2e4e7" /><circle cx="0.6" cy="2.6" r="0.9" fill="#394150" /></g>
<path d="M189.1 17.9 v9.5" stroke="#252a33" stroke-width="0.8"/><path d="M189.9 17.9 v9.5" stroke="#555e6e" stroke-width="0.6"/>
<g transform="translate(198.0,22.6)" stroke="#1d2532" stroke-width="0.8" paint-order="stroke" stroke-linejoin="round"><path d="M-4.6 -0.6 l2.6 -2.6 h6.6 v4.2 l-2.6 2.6 h-6.6z" fill="#46a4ee" /><path d="M-1 -4.6 h5.6 v4.6 h-5.6z" fill="#8ccaf8" opacity="0.7"/></g>
<g transform="translate(210.0,22.6)" stroke="#1d2532" stroke-width="0.8" paint-order="stroke" stroke-linejoin="round"><rect x="-4.6" y="-0.8" width="5.4" height="5.4" fill="#46a4ee" /><rect x="-1.4" y="-4.4" width="5.8" height="5.8" fill="#d6d9dc" /><rect x="-1.4" y="-0.8" width="2.2" height="2.2" fill="#8ccaf8" /></g>
<g transform="translate(222.0,22.6)" stroke="#1d2532" stroke-width="0.8" paint-order="stroke" stroke-linejoin="round"><rect x="-4.4" y="-1" width="5.6" height="5.6" fill="none" stroke="#e2e4e7" stroke-width="0.9"/><rect x="-1.2" y="-4.2" width="5.6" height="5.6" fill="none" stroke="#e2e4e7" stroke-width="0.9"/><rect x="-1.2" y="-1" width="2.4" height="2.4" fill="#46a4ee" /></g>
<path d="M229.1 17.9 v9.5" stroke="#252a33" stroke-width="0.8"/><path d="M229.9 17.9 v9.5" stroke="#555e6e" stroke-width="0.6"/>
<g transform="translate(236.0,22.6)" stroke="#1d2532" stroke-width="0.8" paint-order="stroke" stroke-linejoin="round"><path d="M0 -4.4 l4.2 7.4 h-8.4z" fill="none" stroke="#e2e4e7" stroke-width="0.9" /><circle cx="0" cy="-4.2" r="1.1" fill="#46a4ee" /><circle cx="4" cy="3" r="1.1" fill="#44c45c" /><circle cx="-4" cy="3" r="1.1" fill="#d83c3c" /><circle cx="0" cy="0.6" r="1" fill="#e2e4e7" /></g>
<g transform="translate(249.0,22.6)" stroke="#1d2532" stroke-width="0.8" paint-order="stroke" stroke-linejoin="round"><ellipse cx="0" cy="0" rx="4.6" ry="2" fill="none" stroke="#d83c3c" stroke-width="0.9"/><ellipse cx="0" cy="0" rx="2" ry="4.6" fill="none" stroke="#44c45c" stroke-width="0.9"/><circle cx="0" cy="0" r="4.4" fill="none" stroke="#46a4ee" stroke-width="0.8"/></g>
<g transform="translate(261.0,22.6)" stroke="#1d2532" stroke-width="0.8" paint-order="stroke" stroke-linejoin="round"><path d="M-4.4 4.4 v-6 l2.4 -2.6 h3 v4 h3.4 v4.6z" fill="#dcdee1" /><rect x="-1.8" y="-0.4" width="3.4" height="3" fill="#46a4ee" /></g>
<g transform="translate(273.4,22.6)" stroke="#1d2532" stroke-width="0.8" paint-order="stroke" stroke-linejoin="round"><path d="M-4.4 4.4 v-5 q0 -3.6 4.4 -3.6 q4.4 0 4.4 3.6 l-3 5z" fill="#46a4ee" /><path d="M-1.6 -1.4 q3 -3 5.6 -0.4 l-2.4 2.4z" fill="#e2e4e7" /><rect x="-4.6" y="1.6" width="3.4" height="3" fill="#e2e4e7" /></g>
<path d="M282.7 17.9 v9.5" stroke="#252a33" stroke-width="0.8"/><path d="M283.5 17.9 v9.5" stroke="#555e6e" stroke-width="0.6"/>
<g transform="translate(291.0,22.6)" stroke="#1d2532" stroke-width="0.8" paint-order="stroke" stroke-linejoin="round"><rect x="-4.4" y="-4" width="8.8" height="7" fill="#e6953a" rx="0.5"/><path d="M-4.4 -4 h8.8 l-4.4 3.6z" fill="#e2e4e7" /><circle cx="1.4" cy="2.8" r="2.1" fill="#e2e4e7" /><circle cx="1.4" cy="2.8" r="1" fill="#394150" /></g>
<g transform="translate(303.0,22.6)" stroke="#1d2532" stroke-width="0.8" paint-order="stroke" stroke-linejoin="round"><path d="M-4 2.6 q0 -5 4.6 -6.8 l3.6 2.6 q-4.4 1.4 -5 6.4z" fill="#e6953a" /><path d="M-0.8 4.8 q0.6 -5 5 -6.4" fill="#d8a060" stroke="#e2e4e7" stroke-width="0.7" fill="none"/></g>
<g transform="translate(315.0,22.6)" stroke="#1d2532" stroke-width="0.8" paint-order="stroke" stroke-linejoin="round"><path d="M-4.6 2.8 l3.4 -5.8 h5.8 l-3.4 5.8z" fill="#e6953a" /></g>
<path d="M322.7 17.9 v9.5" stroke="#252a33" stroke-width="0.8"/><path d="M323.5 17.9 v9.5" stroke="#555e6e" stroke-width="0.6"/>
<g transform="translate(330.4,22.6)" stroke="#1d2532" stroke-width="0.8" paint-order="stroke" stroke-linejoin="round"><path d="M4.4 -3.4 h-5.4 v-1.4 l-3.6 2.6 l3.6 2.6 v-1.4 h5.4z" fill="#e6953a" /><path d="M-4.4 2.4 h5.4 v-1.4 l3.6 2.6 l-3.6 2.6 v-1.4 h-5.4z" fill="#e2e4e7" transform="translate(0,-1.2)"/></g>
<g transform="translate(342.4,22.6)" stroke="#1d2532" stroke-width="0.8" paint-order="stroke" stroke-linejoin="round"><path d="M-4.6 -4.4 h9.2 v8.8 h-4.2 v-4.6 h-5z" fill="#d8a060" /><path d="M-4.6 -4.4 h9.2 v8.8 h-4.2 v-4.6 h-5z" fill="none" stroke="#e6953a" stroke-width="0.6" /></g>
<g transform="translate(354.4,22.6)" stroke="#1d2532" stroke-width="0.8" paint-order="stroke" stroke-linejoin="round"><path d="M-4.4 1.4 q1 -5.4 5.4 -5.8 l3 3 q-1 4.8 -5.6 5.8z" fill="#e6953a" /><path d="M0.8 3 l3.4 -3.4" fill="none" stroke="#e2e4e7" stroke-width="1.3" /></g>
<path d="M362.1 17.9 v9.5" stroke="#252a33" stroke-width="0.8"/><path d="M362.9 17.9 v9.5" stroke="#555e6e" stroke-width="0.6"/>
<g transform="translate(369.4,22.6)" stroke="#1d2532" stroke-width="0.8" paint-order="stroke" stroke-linejoin="round"><path d="M-3.6 -3 q6.6 -1 6.6 6.4" fill="none" stroke="#e6953a" stroke-width="2.2" /><path d="M1 3 l4.4 -0.4 l-2.2 2.6z" fill="#e2e4e7" /></g>
<path d="M377.7 17.9 v9.5" stroke="#252a33" stroke-width="0.8"/><path d="M378.5 17.9 v9.5" stroke="#555e6e" stroke-width="0.6"/>
<g transform="translate(385.4,22.6)" stroke="#1d2532" stroke-width="0.8" paint-order="stroke" stroke-linejoin="round"><path d="M-4.6 -0.6 l2.6 -2.6 h6.6 v4.2 l-2.6 2.6 h-6.6z" fill="#46a4ee" /><path d="M-1 -4.6 h5.6 v4.6 h-5.6z" fill="#8ccaf8" opacity="0.7"/></g>
<g transform="translate(399.0,22.6)" stroke="#1d2532" stroke-width="0.8" paint-order="stroke" stroke-linejoin="round"><rect x="-4.6" y="-0.8" width="5.4" height="5.4" fill="#46a4ee" /><rect x="-1.4" y="-4.4" width="5.8" height="5.8" fill="#d6d9dc" /><rect x="-1.4" y="-0.8" width="2.2" height="2.2" fill="#8ccaf8" /></g>
<g transform="translate(411.0,22.6)" stroke="#1d2532" stroke-width="0.8" paint-order="stroke" stroke-linejoin="round"><rect x="-4.4" y="-1" width="5.6" height="5.6" fill="none" stroke="#e2e4e7" stroke-width="0.9"/><rect x="-1.2" y="-4.2" width="5.6" height="5.6" fill="none" stroke="#e2e4e7" stroke-width="0.9"/><rect x="-1.2" y="-1" width="2.4" height="2.4" fill="#46a4ee" /></g>
<path d="M418.7 17.9 v9.5" stroke="#252a33" stroke-width="0.8"/><path d="M419.5 17.9 v9.5" stroke="#555e6e" stroke-width="0.6"/>
<g transform="translate(425.6,22.6)" stroke="#1d2532" stroke-width="0.8" paint-order="stroke" stroke-linejoin="round"><path d="M-4.4 -4.4 h2 v8.8 h-2z" fill="#e2e4e7" /><path d="M-1.6 -4.4 q4.4 0.4 4.4 4.4 q0 4 -4.4 4.4z" fill="#46a4ee" /><path d="M3.4 0 h1.6" fill="none" stroke="#e2e4e7" stroke-width="0.9" /></g>
<g transform="translate(438.0,22.6)" stroke="#1d2532" stroke-width="0.8" paint-order="stroke" stroke-linejoin="round"><path d="M-4.2 -3.2 h3 M-2.7 -4.7 v3" fill="none" stroke="#e2e4e7" stroke-width="0.9" /><rect x="-1.6" y="-1" width="5.6" height="5.6" fill="#46a4ee" /><rect x="-0.4" y="0.2" width="3.2" height="3.2" fill="#9ad0f8" /></g>
<g transform="translate(450.0,22.6)" stroke="#1d2532" stroke-width="0.8" paint-order="stroke" stroke-linejoin="round"><rect x="-4.2" y="-3.6" width="6.4" height="7.6" fill="#c9ccd0" /><rect x="-2.6" y="-2.2" width="3.4" height="4.8" fill="#46a4ee" /><rect x="2.4" y="-4.6" width="2" height="9" fill="#e2e4e7" /></g>
<g transform="translate(462.0,22.6)" stroke="#1d2532" stroke-width="0.8" paint-order="stroke" stroke-linejoin="round"><path d="M-4 4.4 v-4 q0 -3 3 -3.6 l2.4 2 v5.6z" fill="#dcdee1" /><path d="M1 -4.4 l3.4 3.4 M4.4 -4.4 l-3.4 3.4" fill="none" stroke="#d83c3c" stroke-width="1.2" /><rect x="-2.6" y="1" width="3" height="3" fill="#46a4ee" /></g>
<g transform="translate(474.0,22.6)" stroke="#1d2532" stroke-width="0.8" paint-order="stroke" stroke-linejoin="round"><path d="M-4 -2 a2 2 0 1 1 2 2" fill="none" stroke="#e2e4e7" stroke-width="1" /><rect x="-1.4" y="-0.8" width="5.6" height="5.4" fill="#46a4ee" /><rect x="0" y="0.6" width="2.8" height="2.6" fill="#9ad0f8" /></g>
<g transform="translate(486.0,22.6)" stroke="#1d2532" stroke-width="0.8" paint-order="stroke" stroke-linejoin="round"><path d="M-4.2 4.4 q0 -6.4 4.2 -8.8 q1.6 2 1.6 8.8z" fill="#dcdee1" /><path d="M0.4 -3 q4 2.4 3.8 7.4 h-3z" fill="#46a4ee" /></g>
<g transform="translate(498.0,22.6)" stroke="#1d2532" stroke-width="0.8" paint-order="stroke" stroke-linejoin="round"><rect x="-4.4" y="-1.6" width="6" height="6" fill="#46a4ee" /><rect x="-1.6" y="-4.4" width="6" height="6" fill="#8ccaf8" opacity="0.85"/><path d="M-1.6 -4.4 h6 v6 h-6z" fill="none" stroke="#e2e4e7" stroke-width="0.6" /></g>
<g transform="translate(510.4,22.6)" stroke="#1d2532" stroke-width="0.8" paint-order="stroke" stroke-linejoin="round"><rect x="-4.2" y="-4.4" width="2.6" height="2.6" fill="#d83c3c" /><rect x="-0.6" y="-4.4" width="2.6" height="2.6" fill="#44c45c" /><rect x="-3" y="-0.6" width="6.6" height="5" fill="#46a4ee" /><rect x="-1.8" y="0.6" width="4.2" height="2.6" fill="#9ad0f8" /></g>
<path d="M518.1 17.9 v9.5" stroke="#252a33" stroke-width="0.8"/><path d="M518.9 17.9 v9.5" stroke="#555e6e" stroke-width="0.6"/>
<g transform="translate(526.0,22.6)" stroke="#1d2532" stroke-width="0.8" paint-order="stroke" stroke-linejoin="round"><path d="M-4.4 4.4 v-5.4 q3.4 -4.4 8.8 -3.4 v5.4 q-5 -0.6 -8.8 3.4z" fill="#dcdee1" /><path d="M-1.4 2 q2 -3.8 5.6 -4.4 v3.6 q-3 0.2 -5.6 3z" fill="#46a4ee" /></g>
<g transform="translate(538.0,22.6)" stroke="#1d2532" stroke-width="0.8" paint-order="stroke" stroke-linejoin="round"><path d="M-4.4 1 q4 -7 8.8 -4.4 v3.4 q-4.6 -2 -6.4 3.4z" fill="#e2e4e7" /><path d="M-2 3.4 q1.8 -5 6.4 -3.4 v2.4 q-3.4 -0.8 -4.4 2z" fill="#46a4ee" /></g>
<g transform="translate(550.0,22.6)" stroke="#1d2532" stroke-width="0.8" paint-order="stroke" stroke-linejoin="round"><path d="M-4 -2.4 l2.4 -2 h6 v6.4 l-2.4 2.4 h-6z" fill="#dcdee1" /><rect x="-2.6" y="-1" width="3.4" height="4" fill="#46a4ee" /></g>
<g transform="translate(562.4,22.6)" stroke="#1d2532" stroke-width="0.8" paint-order="stroke" stroke-linejoin="round"><rect x="-4" y="-4.4" width="2.4" height="2.4" fill="#d83c3c" /><rect x="-0.8" y="-4.4" width="2.4" height="2.4" fill="#46a4ee" /><rect x="-3" y="-0.4" width="7" height="4.8" fill="#dcdee1" /><rect x="-1.6" y="1" width="4" height="2" fill="#46a4ee" /></g>
<path d="M571.7 17.9 v9.5" stroke="#252a33" stroke-width="0.8"/><path d="M572.5 17.9 v9.5" stroke="#555e6e" stroke-width="0.6"/>
<g transform="translate(580.0,22.6)" stroke="#1d2532" stroke-width="0.8" paint-order="stroke" stroke-linejoin="round"><path d="M-4 -2.6 h2.6 M-2.7 -4 v2.6" fill="none" stroke="#44c45c" stroke-width="1" /><rect x="-1.8" y="-1.2" width="6" height="5.6" fill="#e2e4e7" /><rect x="-0.6" y="0.2" width="3.4" height="3" fill="#46a4ee" /></g>
<g transform="translate(592.0,22.6)" stroke="#1d2532" stroke-width="0.8" paint-order="stroke" stroke-linejoin="round"><path d="M-2.6 3 v-5.4 l2 -2 h5 v5.4 l-2 2z" fill="#dcdee1" /><path d="M-4.6 4.6 l2.4 -2.4 h4 l-1.4 2.4z" fill="#f2c63a" /></g>
<g transform="translate(601.6,22.6)" stroke="#1d2532" stroke-width="0.8" paint-order="stroke" stroke-linejoin="round"><rect x="-4.4" y="-4.2" width="3.6" height="8.4" fill="#46a4ee" /><rect x="0.2" y="-4.2" width="3.6" height="8.4" fill="#dcdee1" /><path d="M-0.6 -4.6 v9.2" fill="none" stroke="#e2e4e7" stroke-width="0.6" /></g>
<g transform="translate(613.6,22.6)" stroke="#1d2532" stroke-width="0.8" paint-order="stroke" stroke-linejoin="round"><path d="M-4.4 -2.2 l2 -2.2 h6.8 v6.8 l-2 2 h-6.8z" fill="#c9ccd0" /><rect x="-3" y="-0.8" width="4" height="4" fill="#46a4ee" /><rect x="-1.8" y="0.4" width="1.8" height="1.8" fill="#e2e4e7" /></g>
<g transform="translate(626.0,22.6)" stroke="#1d2532" stroke-width="0.8" paint-order="stroke" stroke-linejoin="round"><path d="M-2.4 -4.4 h6.8 v6 l-2.4 2.4 h-4.4z" fill="#dcdee1" /><path d="M-4.4 2.6 l1.6 1.8 l2.8 -3.4" fill="none" stroke="#44c45c" stroke-width="1.2" /></g>
<path d="M634.7 17.9 v9.5" stroke="#252a33" stroke-width="0.8"/><path d="M635.5 17.9 v9.5" stroke="#555e6e" stroke-width="0.6"/>
<g transform="translate(643.0,22.6)" stroke="#1d2532" stroke-width="0.8" paint-order="stroke" stroke-linejoin="round"><path d="M-4.4 -3 l8.4 6 M-4 3.4 l8 -7" fill="none" stroke="#e2e4e7" stroke-width="1.1" /><circle cx="-1" cy="0" r="1.3" fill="#e6953a" /><path d="M1 -4 l3 3" fill="none" stroke="#e6953a" stroke-width="1.1" /></g>
<g transform="translate(656.0,22.6)" stroke="#1d2532" stroke-width="0.8" paint-order="stroke" stroke-linejoin="round"><circle cx="-1.2" cy="-1.8" r="1.6" fill="#46a4ee" /><circle cx="1.6" cy="2.4" r="1.6" fill="#46a4ee" /><path d="M-4 3 l8 -6" fill="none" stroke="#e2e4e7" stroke-width="0.9" /><path d="M-3 -4 l1.2 1.4 M3.8 -0.4 l-1.2 1.4" fill="none" stroke="#e6953a" stroke-width="1" /></g>
<g transform="translate(668.0,22.6)" stroke="#1d2532" stroke-width="0.8" paint-order="stroke" stroke-linejoin="round"><rect x="-4.4" y="-4.4" width="8.8" height="8.8" fill="#e6953a" rx="0.6"/><rect x="-3.2" y="-3.2" width="6.4" height="4.4" fill="#f4ddb8" /><rect x="-3.2" y="2" width="6.4" height="1.4" fill="#e2e4e7" /><circle cx="0" cy="-1" r="1.3" fill="#8a5a30" /></g>
<path d="M675.7 17.9 v9.5" stroke="#252a33" stroke-width="0.8"/><path d="M676.5 17.9 v9.5" stroke="#555e6e" stroke-width="0.6"/>
<g transform="translate(683.0,22.6)" stroke="#1d2532" stroke-width="0.8" paint-order="stroke" stroke-linejoin="round"><circle cx="0" cy="0.4" r="4.2" fill="#e6953a" /><path d="M0 0.4 v-4.2 a4.2 4.2 0 0 1 4.2 4.2z" fill="#46a4ee" /><circle cx="0" cy="0.4" r="1.6" fill="#394150" /></g>
<g transform="translate(695.0,22.6)" stroke="#1d2532" stroke-width="0.8" paint-order="stroke" stroke-linejoin="round"><path d="M-4 4.4 q-0.6 -6 2.6 -8.8 q2.6 3 2 8.8z" fill="#e2e4e7" /><path d="M1.6 -3 q3 2 2.4 6.6" fill="none" stroke="#46a4ee" stroke-width="1.1" /><circle cx="3.4" cy="3.6" r="1.2" fill="#d83c3c" /></g>
<g transform="translate(707.4,22.6)" stroke="#1d2532" stroke-width="0.8" paint-order="stroke" stroke-linejoin="round"><circle cx="0" cy="0" r="4.6" fill="#e6bc3c" /><path d="M-4.6 0 h9.2 M0 -4.6 v9.2 M-3.4 -3 q3.4 2 6.8 0 M-3.4 3 q3.4 -2 6.8 0" fill="none" stroke="#a87c18" stroke-width="0.6" /></g>
<path d="M715.7 17.9 v9.5" stroke="#252a33" stroke-width="0.8"/><path d="M716.5 17.9 v9.5" stroke="#555e6e" stroke-width="0.6"/>
<g transform="translate(722.6,22.6)" stroke="#1d2532" stroke-width="0.8" paint-order="stroke" stroke-linejoin="round"><path d="M-4.4 -2 l2.4 -2.4 h6.4 v6.4 l-2.4 2.4 h-6.4z M-4.4 -2 h6.4 v6.4 M2 -2 l2.4 -2.4" fill="none" stroke="#46a4ee" stroke-width="1" /><rect x="-3" y="-0.6" width="3.6" height="3.6" fill="#9ad0f8" opacity="0.7"/></g>
<g transform="translate(735.0,22.6)" stroke="#1d2532" stroke-width="0.8" paint-order="stroke" stroke-linejoin="round"><path d="M-4 1.4 q4 -6.4 8.4 -3.4" fill="none" stroke="#e2e4e7" stroke-width="1.6" /><path d="M-3 4 q3.4 -5 7.4 -3.4" fill="none" stroke="#46a4ee" stroke-width="1.6" /></g>
<path d="M743.1 17.9 v9.5" stroke="#252a33" stroke-width="0.8"/><path d="M743.9 17.9 v9.5" stroke="#555e6e" stroke-width="0.6"/>
<g transform="translate(750.4,22.6)" stroke="#1d2532" stroke-width="0.8" paint-order="stroke" stroke-linejoin="round"><path d="M-3.6 4.4 q-1 -5.4 2.2 -8.8 q2.2 2.2 2 8.8z" fill="#e2e4e7" /><path d="M1.2 -3.4 q3 2.2 2.6 6" fill="none" stroke="#46a4ee" stroke-width="1" /><circle cx="2.6" cy="3.2" r="1.7" fill="#f2c63a" /></g>
<g transform="translate(762.6,22.6)" stroke="#1d2532" stroke-width="0.8" paint-order="stroke" stroke-linejoin="round"><path d="M-3.6 4.4 q-1 -5.4 2.2 -8.8 q2.2 2.2 2 8.8z" fill="#e2e4e7" /><path d="M1.2 -3.4 q3 2.2 2.6 6" fill="none" stroke="#46a4ee" stroke-width="1" /><circle cx="2.6" cy="3.2" r="1.7" fill="#46a4ee" /></g>
<g transform="translate(775.0,22.6)" stroke="#1d2532" stroke-width="0.8" paint-order="stroke" stroke-linejoin="round"><rect x="-4.4" y="-3.4" width="7.4" height="1.2" fill="#e2e4e7" /><rect x="-4.4" y="-1.4" width="7.4" height="2.4" fill="#bfc3c8" /><path d="M1 2.6 h3.6 M2.8 0.8 v3.6" fill="none" stroke="#44c45c" stroke-width="1.2" /></g>
<g transform="translate(787.4,22.6)" stroke="#1d2532" stroke-width="0.8" paint-order="stroke" stroke-linejoin="round"><rect x="-4.4" y="-3.4" width="7.4" height="1.2" fill="#e2e4e7" /><rect x="-4.4" y="-1.4" width="7.4" height="2.4" fill="#bfc3c8" /><path d="M1 2.6 h3.6" fill="none" stroke="#d83c3c" stroke-width="1.2" /></g>
<g transform="translate(798.6,22.6)" stroke="#1d2532" stroke-width="0.8" paint-order="stroke" stroke-linejoin="round"><path d="M-4 4 l7.4 -7.4" fill="none" stroke="#e2e4e7" stroke-width="1.4" /><path d="M-4 -4 l8 8" fill="none" stroke="#e6953a" stroke-width="1.5" /><path d="M2 -4.6 l2.6 2.6 l-1.6 0.6 l-1.6 -1.6z" fill="#e2e4e7" /><circle cx="-3.4" cy="-3.4" r="1.5" fill="#e2e4e7" /></g>
<path d="M807.7 17.9 v9.5" stroke="#252a33" stroke-width="0.8"/><path d="M808.5 17.9 v9.5" stroke="#555e6e" stroke-width="0.6"/>
<g transform="translate(816.0,22.6)" stroke="#1d2532" stroke-width="0.8" paint-order="stroke" stroke-linejoin="round"><path d="M-3.6 -4.4 v8 h8" fill="none" stroke="#e2e4e7" stroke-width="1" /><path d="M-3.6 -4.8 l1.2 1.8 h-2.4z M4.8 3.6 l-1.8 1.2 v-2.4z" fill="#e2e4e7" /><circle cx="0.8" cy="-0.6" r="2.6" fill="#46a4ee" /><path d="M-1.4 -0.6 h4.4 M0.8 -2.8 v4.4" fill="none" stroke="#e2e4e7" stroke-width="0.5" /></g>
<g transform="translate(828.0,22.6)" stroke="#1d2532" stroke-width="0.8" paint-order="stroke" stroke-linejoin="round"><path d="M-3.6 -4.4 v8 h8" fill="none" stroke="#e2e4e7" stroke-width="1" /><path d="M-3.6 -4.8 l1.2 1.8 h-2.4z M4.8 3.6 l-1.8 1.2 v-2.4z" fill="#e2e4e7" /><rect x="-1.6" y="-3" width="4.8" height="4.8" fill="#46a4ee" /></g>
<g transform="translate(840.0,22.6)" stroke="#1d2532" stroke-width="0.8" paint-order="stroke" stroke-linejoin="round"><path d="M-3.6 -4.4 v8 h8" fill="none" stroke="#e2e4e7" stroke-width="1" /><path d="M-3.6 -4.8 l1.2 1.8 h-2.4z M4.8 3.6 l-1.8 1.2 v-2.4z" fill="#e2e4e7" /><text x="0.6" y="1.6" font-size="5" fill="#46a4ee">3</text></g>
<path d="M848.7 17.9 v9.5" stroke="#252a33" stroke-width="0.8"/><path d="M849.5 17.9 v9.5" stroke="#555e6e" stroke-width="0.6"/>
<g transform="translate(857.0,22.6)" stroke="#1d2532" stroke-width="0.8" paint-order="stroke" stroke-linejoin="round"><path d="M0 -4.8 l1.8 3 h-1 v1 h1 v-1 l3 1.8 l-3 1.8 v-1 h-1 v1 h1 l-1.8 3 l-1.8 -3 h1 v-1 h-1 v1 l-3 -1.8 l3 -1.8 v1 h1 v-1 h-1z" fill="#e2e4e7" /><circle cx="0" cy="0" r="1.1" fill="#394150" /></g>
<g transform="translate(869.4,22.6)" stroke="#1d2532" stroke-width="0.8" paint-order="stroke" stroke-linejoin="round"><ellipse cx="0" cy="0" rx="4.6" ry="2.4" fill="none" stroke="#e2e4e7" stroke-width="0.9"/><ellipse cx="0" cy="0" rx="2.4" ry="4.6" fill="none" stroke="#e2e4e7" stroke-width="0.9"/><circle cx="0" cy="0" r="1" fill="#e2e4e7" /></g>
<g transform="translate(882.0,22.6)" stroke="#1d2532" stroke-width="0.8" paint-order="stroke" stroke-linejoin="round"><path d="M-3.6 1.4 q-1.4 2 0.6 3 q1.6 0.6 3 -1.4 l1 -1.6 M3.6 -1.4 q1.4 -2 -0.6 -3 q-1.6 -0.6 -3 1.4 l-1 1.6" fill="none" stroke="#e2e4e7" stroke-width="1.1" /><path d="M-1.6 1.8 l3.2 -3.6" fill="none" stroke="#e2e4e7" stroke-width="1" /></g>
<path d="M890.7 17.9 v9.5" stroke="#252a33" stroke-width="0.8"/><path d="M891.5 17.9 v9.5" stroke="#555e6e" stroke-width="0.6"/>
<g transform="translate(899.0,22.6)" stroke="#1d2532" stroke-width="0.8" paint-order="stroke" stroke-linejoin="round"><path d="M-2.6 -4.4 q-1.6 0 -1.6 1.6 v5.6 q0 1.6 1.6 1.6 M1.4 -4.4 q1.6 0 1.6 1.6 v5.6 q0 1.6 -1.6 1.6" fill="none" stroke="#e2e4e7" stroke-width="1" /><rect x="-2.2" y="-1" width="3" height="3.6" fill="#9aa0a8" /><path d="M2.4 -4.6 l0.6 1.4 l1.4 0.2 l-1 1 l0.2 1.4 l-1.2 -0.7z" fill="#f2c63a" /></g>
<g transform="translate(911.4,22.6)" stroke="#1d2532" stroke-width="0.8" paint-order="stroke" stroke-linejoin="round"><path d="M-2.6 -4.4 q-1.6 0 -1.6 1.6 v5.6 q0 1.6 1.6 1.6 M1.4 -4.4 q1.6 0 1.6 1.6 v5.6 q0 1.6 -1.6 1.6" fill="none" stroke="#e2e4e7" stroke-width="1" /><circle cx="-0.6" cy="-1.6" r="1.7" fill="#46a4ee" /><path d="M0 4 l4 -3.6" fill="none" stroke="#f2c63a" stroke-width="1.5" /><path d="M3.4 1 l1 -1" fill="none" stroke="#d83c3c" stroke-width="1.4" /></g>
<g transform="translate(923.6,22.6)" stroke="#1d2532" stroke-width="0.8" paint-order="stroke" stroke-linejoin="round"><path d="M-2.6 -4.4 q-1.6 0 -1.6 1.6 v5.6 q0 1.6 1.6 1.6 M1.4 -4.4 q1.6 0 1.6 1.6 v5.6 q0 1.6 -1.6 1.6" fill="none" stroke="#e2e4e7" stroke-width="1" /><circle cx="-0.6" cy="-1.6" r="1.7" fill="#46a4ee" /><circle cx="-0.6" cy="2.2" r="1.3" fill="#e2e4e7" /><path d="M1.6 -1 l3 3 M4.6 -1 l-3 3" fill="none" stroke="#d83c3c" stroke-width="1.1" /></g>
<g transform="translate(936.0,22.6)" stroke="#1d2532" stroke-width="0.8" paint-order="stroke" stroke-linejoin="round"><path d="M-2.6 -4.4 q-1.6 0 -1.6 1.6 v5.6 q0 1.6 1.6 1.6 M1.4 -4.4 q1.6 0 1.6 1.6 v5.6 q0 1.6 -1.6 1.6" fill="none" stroke="#e2e4e7" stroke-width="1" /><circle cx="-0.6" cy="-1.6" r="1.7" fill="#46a4ee" /><circle cx="-0.8" cy="2.2" r="1.2" fill="#e2e4e7" /><path d="M0.6 4.4 l3.6 -3.4" fill="none" stroke="#f2c63a" stroke-width="1.5" /><path d="M3.6 1.6 l1 -1" fill="none" stroke="#d83c3c" stroke-width="1.4" /></g>
<g transform="translate(948.0,22.6)" stroke="#1d2532" stroke-width="0.8" paint-order="stroke" stroke-linejoin="round"><path d="M-2.6 -4.4 q-1.6 0 -1.6 1.6 v5.6 q0 1.6 1.6 1.6 M1.4 -4.4 q1.6 0 1.6 1.6 v5.6 q0 1.6 -1.6 1.6" fill="none" stroke="#e2e4e7" stroke-width="1" /><circle cx="-0.6" cy="-1.6" r="1.7" fill="#46a4ee" /><rect x="0.4" y="1" width="4.4" height="3.6" fill="#e2e4e7" /><rect x="1.4" y="2.4" width="1.4" height="1.2" fill="#6a707a" /></g>
<g transform="translate(960.0,22.6)" stroke="#1d2532" stroke-width="0.8" paint-order="stroke" stroke-linejoin="round"><path d="M-2.6 -4.4 q-1.6 0 -1.6 1.6 v5.6 q0 1.6 1.6 1.6 M1.4 -4.4 q1.6 0 1.6 1.6 v5.6 q0 1.6 -1.6 1.6" fill="none" stroke="#e2e4e7" stroke-width="1" /><text x="-0.6" y="2.6" font-size="7" text-anchor="middle" fill="#44c45c" font-weight="bold">8</text><path d="M1.6 0.6 v4.4 l1 -1 l0.9 1.6 l0.8 -0.4 l-0.8 -1.5 h1.4z" fill="#e2e4e7" /></g>
<path d="M1.2 18.6 v8.0" stroke="#6a7484" stroke-width="1.2"/>
<rect x="-1.0" y="30.6" width="979.4" height="13.2" fill="#394150" stroke="#2d333e" stroke-width="0.9"/>
<g transform="translate(8.4,37.4)" stroke="#1d2532" stroke-width="0.8" paint-order="stroke" stroke-linejoin="round"><path d="M-3.4 3.6 q0.4 -5.6 6 -6" fill="none" stroke="#e2e4e7" stroke-width="1" /><circle cx="3.2" cy="-2.6" r="1.3" fill="none" stroke="#e2e4e7" stroke-width="0.8"/><path d="M-4.4 4.4 l0.4 -2 l1.6 1.6z" fill="#e2e4e7" /></g>
<g transform="translate(21.0,37.4)" stroke="#1d2532" stroke-width="0.8" paint-order="stroke" stroke-linejoin="round"><path d="M-2.4 4 q0.2 -4 4.4 -4.6" fill="none" stroke="#e2e4e7" stroke-width="1" /><circle cx="3" cy="-0.8" r="1.2" fill="none" stroke="#e2e4e7" stroke-width="0.8"/><path d="M-3.6 -4.4 v3 M-5.1 -2.9 h3" fill="none" stroke="#44c45c" stroke-width="1.1" /></g>
<g transform="translate(33.4,37.4)" stroke="#1d2532" stroke-width="0.8" paint-order="stroke" stroke-linejoin="round"><path d="M-2.4 4 q0.2 -4 4.4 -4.6" fill="none" stroke="#e2e4e7" stroke-width="1" /><circle cx="3" cy="-0.8" r="1.2" fill="none" stroke="#e2e4e7" stroke-width="0.8"/><path d="M-4.8 -4.2 l2.6 2.6 M-2.2 -4.2 l-2.6 2.6" fill="none" stroke="#d83c3c" stroke-width="1" /></g>
<path d="M40.7 32.4 v10.0" stroke="#252a33" stroke-width="0.8"/><path d="M41.5 32.4 v10.0" stroke="#555e6e" stroke-width="0.6"/>
<g transform="translate(48.6,37.4)" stroke="#1d2532" stroke-width="0.8" paint-order="stroke" stroke-linejoin="round"><path d="M-3.6 3.6 q-0.4 -6.6 4 -7 q2.6 0.4 0.6 3.6" fill="none" stroke="#e2e4e7" stroke-width="1" /><rect x="2.6" y="-4.4" width="1.2" height="8.8" fill="#46a4ee" /><path d="M-1 -0.6 l3 2" fill="none" stroke="#e2e4e7" stroke-width="0.8" /></g>
<g transform="translate(61.0,37.4)" stroke="#1d2532" stroke-width="0.8" paint-order="stroke" stroke-linejoin="round"><path d="M-3.8 3.6 q0.6 -5 5.2 -6.4" fill="none" stroke="#e2e4e7" stroke-width="1" /><circle cx="2.8" cy="-1.4" r="1.8" fill="none" stroke="#e2e4e7" stroke-width="0.9"/><circle cx="2.2" cy="2.4" r="1.8" fill="none" stroke="#e2e4e7" stroke-width="0.9"/></g>
<g transform="translate(139.4,37.4)" stroke="#1d2532" stroke-width="0.8" paint-order="stroke" stroke-linejoin="round"><path d="M-4 3 q3 -7 7.6 -5.4" fill="none" stroke="#e2e4e7" stroke-width="1" /><circle cx="2.4" cy="-0.4" r="2" fill="none" stroke="#e2e4e7" stroke-width="0.9"/><path d="M0 4.6 l3.4 -3.4" fill="none" stroke="#e6953a" stroke-width="1.3" /></g>
<path d="M146.7 32.4 v10.0" stroke="#252a33" stroke-width="0.8"/><path d="M147.5 32.4 v10.0" stroke="#555e6e" stroke-width="0.6"/>
<path d="M150.1 32.4 v10.0" stroke="#252a33" stroke-width="0.8"/><path d="M150.9 32.4 v10.0" stroke="#555e6e" stroke-width="0.6"/>
<g transform="translate(156.4,37.4)" stroke="#1d2532" stroke-width="0.8" paint-order="stroke" stroke-linejoin="round"><path d="M-4.4 -4.4 v8.8 M4.4 -4.4 v8.8" fill="none" stroke="#e2e4e7" stroke-width="1" /><path d="M-4 -0.4 h8" fill="none" stroke="#46a4ee" stroke-width="1.3" /></g>
<g transform="translate(169.0,37.4)" stroke="#1d2532" stroke-width="0.8" paint-order="stroke" stroke-linejoin="round"><path d="M-4.4 -2.6 l6.4 6.6" fill="none" stroke="#46a4ee" stroke-width="1.3" /><path d="M-4.4 -4.4 l2.4 2.4 M2.4 2.4 l2 2" fill="none" stroke="#e2e4e7" stroke-width="1" /><path d="M4.6 4.6 l-2.6 -0.6 l2 -2z" fill="#e2e4e7" /></g>
<g transform="translate(181.4,37.4)" stroke="#1d2532" stroke-width="0.8" paint-order="stroke" stroke-linejoin="round"><path d="M-4.2 4.4 q0 -8 8.4 -8.4" fill="none" stroke="#46a4ee" stroke-width="1.6" /><path d="M-1.6 4.4 q0.4 -5 5.8 -5.6" fill="none" stroke="#e2e4e7" stroke-width="1" /></g>
<g transform="translate(193.6,37.4)" stroke="#1d2532" stroke-width="0.8" paint-order="stroke" stroke-linejoin="round"><path d="M-4.4 4.2 h8.8" fill="none" stroke="#e2e4e7" stroke-width="1.1" /><path d="M-2 4 v-8 M1.6 4 v-5" fill="none" stroke="#46a4ee" stroke-width="1.1" /><path d="M-2 -2.4 h3.6" fill="none" stroke="#e2e4e7" stroke-width="0.8" /></g>
<path d="M201.1 32.4 v10.0" stroke="#252a33" stroke-width="0.8"/><path d="M201.9 32.4 v10.0" stroke="#555e6e" stroke-width="0.6"/>
<g transform="translate(208.4,37.4)" stroke="#1d2532" stroke-width="0.8" paint-order="stroke" stroke-linejoin="round"><path d="M-4.2 4.4 q0.6 -6 7 -8.6" fill="none" stroke="#46a4ee" stroke-width="1.1" /><path d="M-1.6 -3.6 l3.4 4.6" fill="none" stroke="#e2e4e7" stroke-width="0.9" /></g>
<g transform="translate(220.6,37.4)" stroke="#1d2532" stroke-width="0.8" paint-order="stroke" stroke-linejoin="round"><path d="M-4.2 4.4 q0.6 -6 7 -8.6" fill="none" stroke="#46a4ee" stroke-width="1.1" /><path d="M-1.4 -2.6 l1.6 2 l0.6 -2 l2 2.6" fill="none" stroke="#e2e4e7" stroke-width="0.9" /></g>
<g transform="translate(232.6,37.4)" stroke="#1d2532" stroke-width="0.8" paint-order="stroke" stroke-linejoin="round"><circle cx="0" cy="0" r="4.2" fill="none" stroke="#e2e4e7" stroke-width="1"/><path d="M-3 -3 l6 6" fill="none" stroke="#46a4ee" stroke-width="1.2" /></g>
<g transform="translate(244.6,37.4)" stroke="#1d2532" stroke-width="0.8" paint-order="stroke" stroke-linejoin="round"><path d="M-4.4 4.2 h8.8 l-4.2 -8z" fill="none" stroke="#e2e4e7" stroke-width="0.9" /><path d="M-1.6 4 q0.2 -1.6 1.4 -2.4" fill="none" stroke="#46a4ee" stroke-width="1.2" /></g>
<path d="M252.1 32.4 v10.0" stroke="#252a33" stroke-width="0.8"/><path d="M252.9 32.4 v10.0" stroke="#555e6e" stroke-width="0.6"/>
<g transform="translate(259.6,37.4)" stroke="#1d2532" stroke-width="0.8" paint-order="stroke" stroke-linejoin="round"><path d="M-4.2 4.4 v-8.4 h8.4 v8.4" fill="none" stroke="#46a4ee" stroke-width="1.1" /><path d="M0.4 -1.6 l-2.2 3.4 h1.8 l-1 3 l3 -4 h-1.8z" fill="#f2c63a" /></g>
<g transform="translate(272.0,37.4)" stroke="#1d2532" stroke-width="0.8" paint-order="stroke" stroke-linejoin="round"><path d="M-4.4 -3.4 v7 M-4.4 -1.8 h8.4 M-4.4 2 h6" fill="none" stroke="#46a4ee" stroke-width="1.1" /><path d="M4.2 -3.4 v3.2" fill="none" stroke="#e2e4e7" stroke-width="0.9" /></g>
<g transform="translate(284.2,37.4)" stroke="#1d2532" stroke-width="0.8" paint-order="stroke" stroke-linejoin="round"><path d="M-3.8 -4.4 v8.8 M3.8 -4.4 v8.8 M0 -4.4 v8.8" fill="none" stroke="#e2e4e7" stroke-width="0.9" /><path d="M-3.8 -0.6 h7.6" fill="none" stroke="#46a4ee" stroke-width="1.3" /></g>
<g transform="translate(296.4,37.4)" stroke="#1d2532" stroke-width="0.8" paint-order="stroke" stroke-linejoin="round"><path d="M-3.8 -3.8 h7.6 M-3.8 3.8 h7.6" fill="none" stroke="#e2e4e7" stroke-width="0.9" /><rect x="-1.6" y="-3.6" width="3.2" height="7.2" fill="#f2c63a" /></g>
<g transform="translate(308.6,37.4)" stroke="#1d2532" stroke-width="0.8" paint-order="stroke" stroke-linejoin="round"><path d="M0 -4.6 v9.2" fill="none" stroke="#e2e4e7" stroke-width="1" /><path d="M-4.4 -0.4 h8.8" fill="none" stroke="#46a4ee" stroke-width="1.2" /><path d="M-2.4 -2.4 l-2 2 l2 2 M2.4 -2.4 l2 2 l-2 2" fill="none" stroke="#46a4ee" stroke-width="0.8" /><path d="M-1.6 4.6 h3.2 l-1.6 -2z" fill="#e2e4e7" /></g>
<path d="M316.1 32.4 v10.0" stroke="#252a33" stroke-width="0.8"/><path d="M316.9 32.4 v10.0" stroke="#555e6e" stroke-width="0.6"/>
<g transform="translate(323.4,37.4)" stroke="#1d2532" stroke-width="0.8" paint-order="stroke" stroke-linejoin="round"><rect x="-4.6" y="-3" width="9.2" height="6" fill="none" stroke="#e2e4e7" stroke-width="0.9"/><rect x="-3.2" y="-1.6" width="3" height="3" fill="#e2e4e7" /><rect x="1" y="-1.6" width="2.4" height="1.2" fill="#46a4ee" /></g>
<g transform="translate(335.6,37.4)" stroke="#1d2532" stroke-width="0.8" paint-order="stroke" stroke-linejoin="round"><circle cx="0" cy="0" r="4.3" fill="none" stroke="#e2e4e7" stroke-width="1"/><path d="M-1.6 0 h3.2 M0 -1.6 v3.2" fill="none" stroke="#46a4ee" stroke-width="0.9" /></g>
<g transform="translate(347.8,37.4)" stroke="#1d2532" stroke-width="0.8" paint-order="stroke" stroke-linejoin="round"><path d="M-4.2 4.4 v-8.4 h8.4 v8.4" fill="none" stroke="#e2e4e7" stroke-width="1" /><path d="M-2.2 1 l1.8 2 l3.2 -4" fill="none" stroke="#44c45c" stroke-width="1.4" /></g>
<g transform="translate(360.0,37.4)" stroke="#1d2532" stroke-width="0.8" paint-order="stroke" stroke-linejoin="round"><path d="M-4.6 0.6 h2.4 l1.2 -3.6 l1.6 6.4 l1.4 -4 l0.8 1.2 h2" fill="none" stroke="#e2e4e7" stroke-width="1" /><rect x="-4.6" y="-0.2" width="1.6" height="1.6" fill="#46a4ee" /></g>
<path d="M367.9 32.4 v10.0" stroke="#252a33" stroke-width="0.8"/><path d="M368.7 32.4 v10.0" stroke="#555e6e" stroke-width="0.6"/>
<g transform="translate(375.4,37.4)" stroke="#1d2532" stroke-width="0.8" paint-order="stroke" stroke-linejoin="round"><path d="M-4.4 4.4 v-3.4 h8.8 v3.4" fill="none" stroke="#e2e4e7" stroke-width="1" /><path d="M-2 0.6 l4.4 -4.6" fill="none" stroke="#d83c3c" stroke-width="1.5" /><path d="M-2.6 1.2 l1.4 -1.4" fill="none" stroke="#f2c63a" stroke-width="1.5" /></g>
<g transform="translate(387.6,37.4)" stroke="#1d2532" stroke-width="0.8" paint-order="stroke" stroke-linejoin="round"><path d="M-4.4 4.4 v-3.4 h8.8 v3.4" fill="none" stroke="#e2e4e7" stroke-width="1" /><path d="M-2.4 0.4 l2.4 -5 l2.4 5 M-1.4 -1.6 h2.8" fill="none" stroke="#e2e4e7" stroke-width="0.9" /></g>
<g transform="translate(399.6,37.4)" stroke="#1d2532" stroke-width="0.8" paint-order="stroke" stroke-linejoin="round"><path d="M-4.4 4.4 v-3.4 h8.8 v3.4 M-4.4 -1 v-3.4 h8.8 v3.4" fill="none" stroke="#e2e4e7" stroke-width="0.9" /><path d="M-1.6 1.6 l1.4 1.6 l2.6 -3.4" fill="none" stroke="#44c45c" stroke-width="1.3" /></g>
<g transform="translate(478.6,37.4)" stroke="#1d2532" stroke-width="0.8" paint-order="stroke" stroke-linejoin="round"><path d="M-4.4 3.2 h8.8 M-4.4 3.2 l2 -2 M4.4 3.2 l-2 -2" fill="none" stroke="#e2e4e7" stroke-width="0.9" /><path d="M-1.6 1.6 l4.4 -5" fill="none" stroke="#e2e4e7" stroke-width="1.4" /><path d="M-2.2 2.2 l1 -1" fill="none" stroke="#f2c63a" stroke-width="1.4" /></g>
<path d="M487.1 32.4 v10.0" stroke="#252a33" stroke-width="0.8"/><path d="M487.9 32.4 v10.0" stroke="#555e6e" stroke-width="0.6"/>
<g transform="translate(494.4,37.4)" stroke="#1d2532" stroke-width="0.8" paint-order="stroke" stroke-linejoin="round"><text x="-1" y="3.6" font-size="10" text-anchor="middle" fill="#e2e4e7">A</text><path d="M1.6 4 l3 -3" fill="none" stroke="#f2c63a" stroke-width="1.2" /></g>
<g transform="translate(573.4,37.4)" stroke="#1d2532" stroke-width="0.8" paint-order="stroke" stroke-linejoin="round"><path d="M-4.4 3.2 h8.8 M-4.4 3.2 l2 -2 M4.4 3.2 l-2 -2" fill="none" stroke="#e2e4e7" stroke-width="0.9" /><path d="M-1.6 1.6 l4.4 -5" fill="none" stroke="#e2e4e7" stroke-width="1.4" /><path d="M-2.2 2.2 l1 -1" fill="none" stroke="#f2c63a" stroke-width="1.4" /></g>
<g transform="translate(652.0,37.4)" stroke="#1d2532" stroke-width="0.8" paint-order="stroke" stroke-linejoin="round"><path d="M-4.4 -4 h8.8 v8 h-8.8z M-4.4 -1.4 h8.8 M-4.4 1.2 h8.8 M-1.4 -4 v8 M1.6 -4 v8" fill="none" stroke="#e2e4e7" stroke-width="0.8" /><path d="M0.6 4.4 l3.4 -3.4" fill="none" stroke="#e6953a" stroke-width="1.4" /></g>
<g transform="translate(731.0,37.4)" stroke="#1d2532" stroke-width="0.8" paint-order="stroke" stroke-linejoin="round"><path d="M-4.4 3 q1 -6.6 5 -6.6 q2.6 0.6 0.6 3.4 q-1 1.6 1 2" fill="none" stroke="#e2e4e7" stroke-width="1" /><circle cx="2.8" cy="-1.6" r="1.9" fill="none" stroke="#e2e4e7" stroke-width="0.9"/><path d="M-0.6 4.4 l3.6 -3.6" fill="none" stroke="#e6953a" stroke-width="1.3" /></g>
<path d="M804.1 32.4 v10.0" stroke="#252a33" stroke-width="0.8"/><path d="M804.9 32.4 v10.0" stroke="#555e6e" stroke-width="0.6"/>
<g transform="translate(812.4,37.4)" stroke="#1d2532" stroke-width="0.8" paint-order="stroke" stroke-linejoin="round"><path d="M-3.6 -4.4 v8 h8" fill="none" stroke="#e2e4e7" stroke-width="1" /><path d="M-3.6 -4.8 l1.2 1.8 h-2.4z M4.8 3.6 l-1.8 1.2 v-2.4z" fill="#e2e4e7" /><text x="0" y="1.6" font-size="5" fill="#e2e4e7">x</text></g>
<path d="M819.7 32.4 v10.0" stroke="#252a33" stroke-width="0.8"/><path d="M820.5 32.4 v10.0" stroke="#555e6e" stroke-width="0.6"/>
<g transform="translate(826.6,37.4)" stroke="#1d2532" stroke-width="0.8" paint-order="stroke" stroke-linejoin="round"><path d="M-3.6 -4.4 v8 h8" fill="none" stroke="#e2e4e7" stroke-width="1" /><path d="M-3.6 -4.8 l1.2 1.8 h-2.4z M4.8 3.6 l-1.8 1.2 v-2.4z" fill="#e2e4e7" /><circle cx="0.8" cy="-0.6" r="2.6" fill="#46a4ee" /><path d="M-1.4 -0.6 h4.4 M0.8 -2.8 v4.4" fill="none" stroke="#e2e4e7" stroke-width="0.5" /></g>
<g transform="translate(838.8,37.4)" stroke="#1d2532" stroke-width="0.8" paint-order="stroke" stroke-linejoin="round"><path d="M-3.6 -4.4 v8 h8" fill="none" stroke="#e2e4e7" stroke-width="1" /><path d="M-3.6 -4.8 l1.2 1.8 h-2.4z M4.8 3.6 l-1.8 1.2 v-2.4z" fill="#e2e4e7" /><path d="M4.4 -1.6 h-4 M1.8 -3 l-1.6 1.4 l1.6 1.4" fill="none" stroke="#46a4ee" stroke-width="0.9" /></g>
<path d="M846.1 32.4 v10.0" stroke="#252a33" stroke-width="0.8"/><path d="M846.9 32.4 v10.0" stroke="#555e6e" stroke-width="0.6"/>
<g transform="translate(853.6,37.4)" stroke="#1d2532" stroke-width="0.8" paint-order="stroke" stroke-linejoin="round"><path d="M-3.6 -4.4 v8 h8" fill="none" stroke="#e2e4e7" stroke-width="1" /><path d="M-3.6 -4.8 l1.2 1.8 h-2.4z M4.8 3.6 l-1.8 1.2 v-2.4z" fill="#e2e4e7" /><rect x="-1.6" y="-3" width="4.8" height="4.8" fill="#46a4ee" /></g>
<g transform="translate(866.0,37.4)" stroke="#1d2532" stroke-width="0.8" paint-order="stroke" stroke-linejoin="round"><path d="M-3.6 -4.4 v8 h8" fill="none" stroke="#e2e4e7" stroke-width="1" /><path d="M-3.6 -4.8 l1.2 1.8 h-2.4z M4.8 3.6 l-1.8 1.2 v-2.4z" fill="#e2e4e7" /><rect x="-1.6" y="-3" width="4.8" height="4.8" fill="#46a4ee" /></g>
<g transform="translate(878.4,37.4)" stroke="#1d2532" stroke-width="0.8" paint-order="stroke" stroke-linejoin="round"><path d="M-3.6 -4.4 v8 h8" fill="none" stroke="#e2e4e7" stroke-width="1" /><path d="M-3.6 -4.8 l1.2 1.8 h-2.4z M4.8 3.6 l-1.8 1.2 v-2.4z" fill="#e2e4e7" /><path d="M-1 -3.4 l4.4 4.4 M3.4 -3.4 l-4.4 4.4" fill="none" stroke="#e2e4e7" stroke-width="0.6" /><rect x="0" y="-2.4" width="2.4" height="2.4" fill="#46a4ee" /></g>
<path d="M885.7 32.4 v10.0" stroke="#252a33" stroke-width="0.8"/><path d="M886.5 32.4 v10.0" stroke="#555e6e" stroke-width="0.6"/>
<g transform="translate(892.8,37.4)" stroke="#1d2532" stroke-width="0.8" paint-order="stroke" stroke-linejoin="round"><path d="M-3.6 -4.4 v8 h8" fill="none" stroke="#e2e4e7" stroke-width="1" /><path d="M-3.6 -4.8 l1.2 1.8 h-2.4z M4.8 3.6 l-1.8 1.2 v-2.4z" fill="#e2e4e7" /><text x="0" y="1.6" font-size="5" fill="#e2e4e7">x</text></g>
<g transform="translate(905.0,37.4)" stroke="#1d2532" stroke-width="0.8" paint-order="stroke" stroke-linejoin="round"><path d="M-3.6 -4.4 v8 h8" fill="none" stroke="#e2e4e7" stroke-width="1" /><path d="M-3.6 -4.8 l1.2 1.8 h-2.4z M4.8 3.6 l-1.8 1.2 v-2.4z" fill="#e2e4e7" /><text x="0" y="1.6" font-size="5" fill="#46a4ee">Z</text></g>
<g transform="translate(917.4,37.4)" stroke="#1d2532" stroke-width="0.8" paint-order="stroke" stroke-linejoin="round"><path d="M-3.6 -4.4 v8 h8" fill="none" stroke="#e2e4e7" stroke-width="1" /><path d="M-3.6 -4.8 l1.2 1.8 h-2.4z M4.8 3.6 l-1.8 1.2 v-2.4z" fill="#e2e4e7" /><text x="0.6" y="1.6" font-size="5" fill="#46a4ee">3</text></g>
<path d="M924.7 32.4 v10.0" stroke="#252a33" stroke-width="0.8"/><path d="M925.5 32.4 v10.0" stroke="#555e6e" stroke-width="0.6"/>
<g transform="translate(932.4,37.4)" stroke="#1d2532" stroke-width="0.8" paint-order="stroke" stroke-linejoin="round"><path d="M-3.6 -4.4 v8 h8" fill="none" stroke="#e2e4e7" stroke-width="1" /><path d="M-3.6 -4.8 l1.2 1.8 h-2.4z M4.8 3.6 l-1.8 1.2 v-2.4z" fill="#e2e4e7" /><path d="M-1 -3.4 l4.4 4.4 M3.4 -3.4 l-4.4 4.4" fill="none" stroke="#e2e4e7" stroke-width="0.6" /><rect x="0" y="-2.4" width="2.4" height="2.4" fill="#46a4ee" /></g>
<g transform="translate(944.6,37.4)" stroke="#1d2532" stroke-width="0.8" paint-order="stroke" stroke-linejoin="round"><path d="M-3.6 -4.4 v8 h8" fill="none" stroke="#e2e4e7" stroke-width="1" /><path d="M-3.6 -4.8 l1.2 1.8 h-2.4z M4.8 3.6 l-1.8 1.2 v-2.4z" fill="#e2e4e7" /><path d="M-1 -3.4 l4.4 4.4 M3.4 -3.4 l-4.4 4.4" fill="none" stroke="#e2e4e7" stroke-width="0.6" /><rect x="0" y="-2.4" width="2.4" height="2.4" fill="#46a4ee" /></g>
<g transform="translate(956.8,37.4)" stroke="#1d2532" stroke-width="0.8" paint-order="stroke" stroke-linejoin="round"><path d="M-3.6 -4.4 v8 h8" fill="none" stroke="#e2e4e7" stroke-width="1" /><path d="M-3.6 -4.8 l1.2 1.8 h-2.4z M4.8 3.6 l-1.8 1.2 v-2.4z" fill="#e2e4e7" /><path d="M-1 -3.4 l4.4 4.4 M3.4 -3.4 l-4.4 4.4" fill="none" stroke="#e2e4e7" stroke-width="0.6" /><rect x="0" y="-2.4" width="2.4" height="2.4" fill="#46a4ee" /></g>
<path d="M964.1 32.4 v10.0" stroke="#252a33" stroke-width="0.8"/><path d="M964.9 32.4 v10.0" stroke="#555e6e" stroke-width="0.6"/>
<g transform="translate(972.0,37.4)" stroke="#1d2532" stroke-width="0.8" paint-order="stroke" stroke-linejoin="round"><path d="M-4.4 -4.4 h8.8 v8.8 h-8.8z" fill="none" stroke="#e2e4e7" stroke-width="0.8" stroke-dasharray="1.6 1.2"/><path d="M-2 -2.6 v5 h5" fill="none" stroke="#e2e4e7" stroke-width="0.9" /><path d="M-0.4 -1.6 l3 3 M2.6 -1.6 l-3 3" fill="none" stroke="#e2e4e7" stroke-width="0.6" /></g>
<path d="M1.2 33.4 v8.0" stroke="#6a7484" stroke-width="1.2"/>
<rect x="70.4" y="31.6" width="62.8" height="11.6" fill="#fff"/>
<text x="80.6" y="39.8" font-size="6.7" fill="#20242c" textLength="24.6" lengthAdjust="spacingAndGlyphs">Standard</text>
<path d="M125.2 36.4 l2.2 2.2 l2.2 -2.2" fill="none" stroke="#555a64" stroke-width="0.8"/>
<rect x="409.0" y="31.6" width="63.2" height="11.6" fill="#fff"/>
<text x="419.2" y="39.8" font-size="6.7" fill="#20242c" textLength="43.0" lengthAdjust="spacingAndGlyphs">GANTAN_SEKKI</text>
<path d="M464.2 36.4 l2.2 2.2 l2.2 -2.2" fill="none" stroke="#555a64" stroke-width="0.8"/>
<rect x="502.0" y="31.6" width="63.2" height="11.6" fill="#fff"/>
<text x="512.4" y="39.8" font-size="6.7" fill="#20242c" textLength="24.6" lengthAdjust="spacingAndGlyphs">Standard</text>
<path d="M557.2 36.4 l2.2 2.2 l2.2 -2.2" fill="none" stroke="#555a64" stroke-width="0.8"/>
<rect x="580.0" y="31.6" width="63.4" height="11.6" fill="#fff"/>
<text x="590.2" y="39.8" font-size="6.7" fill="#20242c" textLength="43.0" lengthAdjust="spacingAndGlyphs">GANTAN_SEKKI</text>
<path d="M635.4 36.4 l2.2 2.2 l2.2 -2.2" fill="none" stroke="#555a64" stroke-width="0.8"/>
<rect x="659.0" y="31.6" width="63.2" height="11.6" fill="#fff"/>
<text x="662.0" y="39.8" font-size="6.7" fill="#20242c" textLength="24.6" lengthAdjust="spacingAndGlyphs">Standard</text>
<path d="M714.2 36.4 l2.2 2.2 l2.2 -2.2" fill="none" stroke="#555a64" stroke-width="0.8"/>
<rect x="737.0" y="31.6" width="63.2" height="11.6" fill="#fff"/>
<text x="747.2" y="39.8" font-size="6.7" fill="#20242c" textLength="24.6" lengthAdjust="spacingAndGlyphs">Standard</text>
<path d="M792.2 36.4 l2.2 2.2 l2.2 -2.2" fill="none" stroke="#555a64" stroke-width="0.8"/>
<rect x="0.0" y="45.0" width="11.4" height="409.0" fill="#394150" />
<rect x="11.4" y="45.0" width="3.0" height="396.0" fill="#2a303a" />
<path d="M1 47.6 h8" stroke="#6a7484" stroke-width="1.2"/>
<g transform="translate(5.6,56.0)" stroke="#1d2532" stroke-width="0.8" paint-order="stroke" stroke-linejoin="round"><path d="M-4 4 l8 -8" fill="none" stroke="#e2e4e7" stroke-width="1" /><circle cx="-4" cy="4" r="0.9" fill="#46a4ee" /><circle cx="4" cy="-4" r="0.9" fill="#46a4ee" /></g>
<g transform="translate(5.6,67.5)" stroke="#1d2532" stroke-width="0.8" paint-order="stroke" stroke-linejoin="round"><path d="M-4 4 l8 -8" fill="none" stroke="#e2e4e7" stroke-width="1.1" /><path d="M4.6 -4.6 l-2.6 0.6 l2 2z M-4.6 4.6 l2.6 -0.6 l-2 -2z" fill="#e2e4e7" /></g>
<g transform="translate(5.6,79.0)" stroke="#1d2532" stroke-width="0.8" paint-order="stroke" stroke-linejoin="round"><path d="M-4.4 2.6 h4 M1 -3.6 q4 0.6 2.4 4.4 q-1.4 2 -3.4 1.8" fill="none" stroke="#e2e4e7" stroke-width="1" /><circle cx="-4.2" cy="2.6" r="0.9" fill="#46a4ee" /><circle cx="0" cy="2.6" r="0.9" fill="#46a4ee" /><circle cx="1" cy="-3.6" r="0.9" fill="#46a4ee" /></g>
<g transform="translate(5.6,90.5)" stroke="#1d2532" stroke-width="0.8" paint-order="stroke" stroke-linejoin="round"><path d="M0 -4.4 l4.2 3.2 l-1.6 5 h-5.2 l-1.6 -5z" fill="none" stroke="#e2e4e7" stroke-width="1" /><circle cx="0" cy="0" r="0.9" fill="#46a4ee" /><circle cx="2.6" cy="3.8" r="0.9" fill="#46a4ee" /></g>
<g transform="translate(5.6,102.0)" stroke="#1d2532" stroke-width="0.8" paint-order="stroke" stroke-linejoin="round"><path d="M-4 -3 h8 v6.4 h-8z" fill="none" stroke="#e2e4e7" stroke-width="1" /><circle cx="-4" cy="-3" r="0.9" fill="#46a4ee" /><circle cx="4" cy="3.4" r="0.9" fill="#46a4ee" /></g>
<g transform="translate(5.6,113.5)" stroke="#1d2532" stroke-width="0.8" paint-order="stroke" stroke-linejoin="round"><path d="M-3.6 4.2 q0 -7 7.2 -8" fill="none" stroke="#e2e4e7" stroke-width="1" /><circle cx="-3.6" cy="4.2" r="0.9" fill="#46a4ee" /><circle cx="3.6" cy="-3.8" r="0.9" fill="#46a4ee" /></g>
<g transform="translate(5.6,125.2)" stroke="#1d2532" stroke-width="0.8" paint-order="stroke" stroke-linejoin="round"><circle cx="0" cy="0" r="4.2" fill="none" stroke="#e2e4e7" stroke-width="1"/><path d="M0 0 l3 -3" fill="none" stroke="#46a4ee" stroke-width="0.9" /><circle cx="0" cy="0" r="0.8" fill="#46a4ee" /></g>
<g transform="translate(5.6,136.8)" stroke="#1d2532" stroke-width="0.8" paint-order="stroke" stroke-linejoin="round"><path d="M-4 0 q-1 -4 3 -3.6 q3 -2 5 1 q1.4 3 -2 5 q-3 2 -5 -0.4z" fill="none" stroke="#e2e4e7" stroke-width="1" /></g>
<g transform="translate(5.6,148.4)" stroke="#1d2532" stroke-width="0.8" paint-order="stroke" stroke-linejoin="round"><path d="M-3.6 4.2 q-1 -4 3 -4.2 q3 0 2 -4.2" fill="none" stroke="#e2e4e7" stroke-width="1" /><circle cx="-3.6" cy="4.2" r="0.8" fill="#46a4ee" /><circle cx="1.6" cy="-4.2" r="0.8" fill="#46a4ee" /></g>
<g transform="translate(5.6,160.0)" stroke="#1d2532" stroke-width="0.8" paint-order="stroke" stroke-linejoin="round"><ellipse cx="0" cy="0" rx="4.4" ry="3" fill="none" stroke="#e2e4e7" stroke-width="1" transform="rotate(-20)"/><circle cx="0" cy="0" r="0.8" fill="#46a4ee" /></g>
<g transform="translate(5.6,171.6)" stroke="#1d2532" stroke-width="0.8" paint-order="stroke" stroke-linejoin="round"><path d="M3.8 -2 q-4 -3 -7 0.6 q-1 3 2 4" fill="none" stroke="#e2e4e7" stroke-width="1" /><circle cx="0.4" cy="0.6" r="0.8" fill="#46a4ee" /></g>
<g transform="translate(5.6,183.2)" stroke="#1d2532" stroke-width="0.8" paint-order="stroke" stroke-linejoin="round"><rect x="-4.2" y="-1.4" width="6" height="5.6" fill="#e2e4e7" /><rect x="-1" y="-4.4" width="5.2" height="5.2" fill="#46a4ee" /><rect x="0.2" y="-3.2" width="2.8" height="2.8" fill="#9ad0f8" /></g>
<g transform="translate(5.6,194.8)" stroke="#1d2532" stroke-width="0.8" paint-order="stroke" stroke-linejoin="round"><rect x="-4.2" y="-1.4" width="6" height="5.6" fill="#e2e4e7" /><rect x="-2.8" y="0" width="3.2" height="2.8" fill="#8a9098" /><circle cx="2.6" cy="-2.6" r="2" fill="#f2c63a" /></g>
<g transform="translate(5.6,206.4)" stroke="#1d2532" stroke-width="0.8" paint-order="stroke" stroke-linejoin="round"><circle cx="0" cy="-3.4" r="0.9" fill="#e2e4e7" /><circle cx="-3.4" cy="0" r="0.9" fill="#e2e4e7" /><circle cx="3.4" cy="0" r="0.9" fill="#e2e4e7" /><circle cx="0" cy="3.4" r="0.9" fill="#e2e4e7" /></g>
<g transform="translate(5.6,218.0)" stroke="#1d2532" stroke-width="0.8" paint-order="stroke" stroke-linejoin="round"><path d="M-4.4 -4 h8.8 M-4.4 4 h8.8 M-3.4 -4 v8 M3.4 -4 v8" fill="none" stroke="#e2e4e7" stroke-width="0.9" /><rect x="-2.6" y="-2.8" width="5.2" height="5.6" fill="#46a4ee" /></g>
<g transform="translate(5.6,229.6)" stroke="#1d2532" stroke-width="0.8" paint-order="stroke" stroke-linejoin="round"><path d="M-4.4 -4 h8.8 M-4.4 4 h8.8 M-3.4 -4 v8 M3.4 -4 v8" fill="none" stroke="#e2e4e7" stroke-width="0.9" /><rect x="-2.6" y="-2.8" width="5.2" height="3" fill="#9ad0f8" /><rect x="-2.6" y="0.2" width="5.2" height="2.6" fill="#46a4ee" /></g>
<g transform="translate(5.6,241.4)" stroke="#1d2532" stroke-width="0.8" paint-order="stroke" stroke-linejoin="round"><path d="M-4.4 -4 h5.4 l3.4 3.4 v4.6 h-8.8z" fill="#e2e4e7" /><circle cx="1.4" cy="1" r="1.6" fill="#394150" /></g>
<g transform="translate(5.6,253.0)" stroke="#1d2532" stroke-width="0.8" paint-order="stroke" stroke-linejoin="round"><path d="M-4.4 -4 h8.8 v8 h-8.8z M-4.4 -1.2 h8.8 M-4.4 1.4 h8.8 M-1.4 -1.2 v5.2 M1.6 -1.2 v5.2" fill="none" stroke="#e2e4e7" stroke-width="0.9" /><rect x="-4.4" y="-4" width="8.8" height="2.4" fill="#e2e4e7" /></g>
<g transform="translate(5.6,264.6)" stroke="#1d2532" stroke-width="0.8" paint-order="stroke" stroke-linejoin="round"><text x="0" y="4.2" font-size="11.5" text-anchor="middle" fill="#e2e4e7">A</text></g>
<g transform="translate(5.6,276.2)" stroke="#1d2532" stroke-width="0.8" paint-order="stroke" stroke-linejoin="round"><circle cx="-2.8" cy="-2.4" r="1.7" fill="#44c45c" /><circle cx="2.6" cy="2.6" r="1.7" fill="#46a4ee" /><path d="M-0.6 -2.6 q3.4 0 3.2 3" fill="none" stroke="#e2e4e7" stroke-width="0.9" /></g>
<path d="M1 284.4 h9" stroke="#6a7484" stroke-width="1"/>
<g transform="translate(5.6,292.4)" stroke="#1d2532" stroke-width="0.8" paint-order="stroke" stroke-linejoin="round"><path d="M-4.2 -4.2 h3.2 v3.2 h-3.2z M1 -4.2 h3.2 v3.2 h-3.2z M-4.2 1 h3.2 v3.2 h-3.2z M1 1 h3.2 v3.2 h-3.2z" fill="none" stroke="#46a4ee" stroke-width="1" /></g>
<g transform="translate(5.6,304.0)" stroke="#1d2532" stroke-width="0.8" paint-order="stroke" stroke-linejoin="round"><path d="M-4.2 3 q3 -7 8.4 -5" fill="none" stroke="#e2e4e7" stroke-width="0.9" /><rect x="-3.6" y="0.6" width="2.4" height="2.4" fill="#46a4ee" /><rect x="-0.4" y="-2" width="2.4" height="2.4" fill="#46a4ee" /><rect x="2.4" y="-3.6" width="2" height="2" fill="#46a4ee" /></g>
<g transform="translate(5.6,315.6)" stroke="#1d2532" stroke-width="0.8" paint-order="stroke" stroke-linejoin="round"><circle cx="0" cy="0" r="3.4" fill="none" stroke="#e2e4e7" stroke-width="0.8" stroke-dasharray="1.4 1"/><rect x="-1" y="-4.6" width="2.2" height="2.2" fill="#46a4ee" /><rect x="-4.6" y="0" width="2.2" height="2.2" fill="#46a4ee" /><rect x="2.4" y="0" width="2.2" height="2.2" fill="#46a4ee" /><rect x="-1" y="2.6" width="2.2" height="2.2" fill="#46a4ee" /></g>
<path d="M1 324.0 h9" stroke="#6a7484" stroke-width="1"/>
<g transform="translate(5.6,332.6)" stroke="#1d2532" stroke-width="0.8" paint-order="stroke" stroke-linejoin="round"><rect x="-4.4" y="-3.4" width="5.2" height="4.4" fill="#46a4ee" /><rect x="-0.6" y="-0.6" width="5" height="4.4" fill="#e2e4e7" /></g>
<path d="M1 340.4 h9" stroke="#6a7484" stroke-width="1"/>
<g transform="translate(5.6,347.6)" stroke="#1d2532" stroke-width="0.8" paint-order="stroke" stroke-linejoin="round"><path d="M-4.2 -3 h5 M-4.2 -0.6 h5 M-3 -4.2 v5 M-0.6 -4.2 v5" fill="none" stroke="#e2e4e7" stroke-width="0.8" /><path d="M-1 4 l5 -5" fill="none" stroke="#f2c63a" stroke-width="1.6" /><path d="M3.4 -1.6 l1 -1" fill="none" stroke="#d83c3c" stroke-width="1.5" /></g>
<g transform="translate(5.6,359.0)" stroke="#1d2532" stroke-width="0.8" paint-order="stroke" stroke-linejoin="round"><path d="M-4.2 2 q2 -5 8.4 -3" fill="none" stroke="#e2e4e7" stroke-width="1" /><path d="M-1 3.6 l4.4 -4.4" fill="none" stroke="#e6953a" stroke-width="1.6" /></g>
<g transform="translate(5.6,370.4)" stroke="#1d2532" stroke-width="0.8" paint-order="stroke" stroke-linejoin="round"><path d="M-4.2 3.4 q1 -6 7 -7" fill="none" stroke="#e2e4e7" stroke-width="1" /><path d="M-1 4 l5 -5" fill="none" stroke="#e2e4e7" stroke-width="1.4" /><path d="M-1.6 4.6 l1 -1" fill="none" stroke="#f2c63a" stroke-width="1.4" /></g>
<g transform="translate(5.6,382.0)" stroke="#1d2532" stroke-width="0.8" paint-order="stroke" stroke-linejoin="round"><path d="M-4.2 -4.2 h3 v3 h-3z M0.4 -4.2 h3 v3 h-3z M-4.2 0.4 h3 v3 h-3z" fill="none" stroke="#46a4ee" stroke-width="0.9" /><path d="M0 4.4 l4.4 -4.4" fill="none" stroke="#f2c63a" stroke-width="1.6" /></g>
<path d="M1 389.6 h9" stroke="#6a7484" stroke-width="1"/>
<g transform="translate(5.6,397.0)" stroke="#1d2532" stroke-width="0.8" paint-order="stroke" stroke-linejoin="round"><path d="M-4.4 -3.4 h8.8 l-3 4 l-1.4 3 l-2.6 -3.6z" fill="#e2e4e7" /><path d="M-1 0 l1.4 1.6 l3 -3.6" fill="none" stroke="#44c45c" stroke-width="1.2" /></g>
<g transform="translate(5.6,408.4)" stroke="#1d2532" stroke-width="0.8" paint-order="stroke" stroke-linejoin="round"><rect x="-4.2" y="-1.6" width="6" height="5.6" fill="#e2e4e7" /><rect x="0.6" y="-4.2" width="3.8" height="3.8" fill="#c9ccd0" /><rect x="1.4" y="-3.4" width="2.2" height="2.2" fill="#6a707a" /></g>
<g transform="translate(5.6,419.8)" stroke="#1d2532" stroke-width="0.8" paint-order="stroke" stroke-linejoin="round"><path d="M-4.4 -3.4 h8.8 l-3 4 l-1.4 3 l-2.6 -3.6z" fill="#e2e4e7" /><circle cx="2.6" cy="-2.6" r="1.7" fill="#44c45c" /></g>
<g transform="translate(5.6,431.6)" stroke="#1d2532" stroke-width="0.8" paint-order="stroke" stroke-linejoin="round"><rect x="-4.2" y="-4.4" width="1.4" height="7" fill="#e2e4e7" /><path d="M-2 -3.6 h3.4 v-1.4 l3 2.2 l-3 2.2 v-1.4 h-3.4z" fill="#46a4ee" /><rect x="-2.2" y="-0.2" width="6.6" height="1.6" fill="#46a4ee" /><rect x="-2.2" y="2" width="6.6" height="1.6" fill="#46a4ee" /><rect x="-2.2" y="4.2" width="6.6" height="1.2" fill="#46a4ee" /></g>
<g transform="translate(5.6,446.0)" stroke="#1d2532" stroke-width="0.8" paint-order="stroke" stroke-linejoin="round"><rect x="-0.7" y="-4.6" width="1.4" height="5" fill="#f2c63a" /><path d="M-2.6 0.4 h5.2 v1.4 h-5.2z" fill="#f2c63a" /><path d="M-3.4 1.8 h6.8 l0.6 2.8 h-8z" fill="#c89820" /></g>
<rect x="976.2" y="45.0" width="2.0" height="405.0" fill="#2a303a" />
<rect x="978.0" y="45.0" width="14.0" height="405.0" fill="#394150" />
<path d="M980.5 47.6 h8.6" stroke="#6a7484" stroke-width="1.2"/>
<g transform="translate(984.8,57.0)" stroke="#1d2532" stroke-width="0.8" paint-order="stroke" stroke-linejoin="round"><path d="M-2.4 2 l6 -6.4" fill="none" stroke="#f2c63a" stroke-width="2" /><path d="M-3.8 3.6 l1.4 -1.6" fill="none" stroke="#d83c3c" stroke-width="2" /><path d="M-4.4 4.6 h8" fill="none" stroke="#46a4ee" stroke-width="0.9" /></g>
<g transform="translate(984.8,68.8)" stroke="#1d2532" stroke-width="0.8" paint-order="stroke" stroke-linejoin="round"><circle cx="-2.6" cy="-2" r="1.9" fill="none" stroke="#e2e4e7" stroke-width="1"/><circle cx="1" cy="-2" r="1.9" fill="none" stroke="#e2e4e7" stroke-width="1"/><circle cx="-0.4" cy="2.6" r="1.8" fill="none" stroke="#46a4ee" stroke-width="1"/><circle cx="3" cy="2.6" r="1.8" fill="none" stroke="#46a4ee" stroke-width="1"/></g>
<g transform="translate(984.8,80.4)" stroke="#1d2532" stroke-width="0.8" paint-order="stroke" stroke-linejoin="round"><path d="M-0.6 -4.2 l-3.6 8 h3.6z" fill="none" stroke="#e2e4e7" stroke-width="0.9" /><path d="M0.8 -4.2 l3.6 8 h-3.6z" fill="none" stroke="#46a4ee" stroke-width="0.9" /></g>
<g transform="translate(984.8,91.6)" stroke="#1d2532" stroke-width="0.8" paint-order="stroke" stroke-linejoin="round"><path d="M4.4 -3.8 h-5 q-3.4 0 -3.4 3.6 q0 3.6 3.4 3.6 h5" fill="none" stroke="#46a4ee" stroke-width="1" /><path d="M4.4 -1.2 h-4.6 q-1.2 0 -1.2 1.2 q0 1.2 1.2 1.2 h4.6" fill="none" stroke="#e2e4e7" stroke-width="1" /></g>
<g transform="translate(984.8,103.2)" stroke="#1d2532" stroke-width="0.8" paint-order="stroke" stroke-linejoin="round"><path d="M-4.2 -4.2 h3.2 v3.2 h-3.2z M1 -4.2 h3.2 v3.2 h-3.2z M-4.2 1 h3.2 v3.2 h-3.2z" fill="none" stroke="#46a4ee" stroke-width="1" /><rect x="1" y="1" width="3.2" height="3.2" fill="#46a4ee" /></g>
<g transform="translate(984.8,115.0)" stroke="#1d2532" stroke-width="0.8" paint-order="stroke" stroke-linejoin="round"><path d="M0 -4.4 v8.8 M-4.4 0 h8.8" fill="none" stroke="#e2e4e7" stroke-width="1" /><path d="M0 -5 l1.6 2 h-3.2z M0 5 l1.6 -2 h-3.2z M-5 0 l2 1.6 v-3.2z M5 0 l-2 1.6 v-3.2z" fill="#e2e4e7" /></g>
<g transform="translate(984.8,126.6)" stroke="#1d2532" stroke-width="0.8" paint-order="stroke" stroke-linejoin="round"><path d="M3 -2.8 a4 4 0 1 0 1 3.4" fill="none" stroke="#e2e4e7" stroke-width="1.1" /><path d="M1.4 -4.8 l3 1.4 l-2.6 2z" fill="#e2e4e7" /></g>
<g transform="translate(984.8,138.2)" stroke="#1d2532" stroke-width="0.8" paint-order="stroke" stroke-linejoin="round"><path d="M-4.2 -4.2 h8.4 v8.4 h-8.4z" fill="none" stroke="#e2e4e7" stroke-width="0.9" /><rect x="-4.2" y="0" width="4.2" height="4.2" fill="#46a4ee" /></g>
<g transform="translate(984.8,149.8)" stroke="#1d2532" stroke-width="0.8" paint-order="stroke" stroke-linejoin="round"><path d="M-3.4 -4.2 h4 l3 3 v5.4 h-7z" fill="none" stroke="#e2e4e7" stroke-width="0.9" /><rect x="-2" y="-1.4" width="3" height="3.6" fill="#46a4ee" /></g>
<g transform="translate(984.8,161.4)" stroke="#1d2532" stroke-width="0.8" paint-order="stroke" stroke-linejoin="round"><path d="M-3 4.4 l5 -8.8 M3.6 4.4 l-3 -5" fill="none" stroke="#e2e4e7" stroke-width="1" /><path d="M-4.4 1.4 h3" fill="none" stroke="#46a4ee" stroke-width="1.2" /></g>
<g transform="translate(984.8,173.0)" stroke="#1d2532" stroke-width="0.8" paint-order="stroke" stroke-linejoin="round"><path d="M-4.4 1 h5 M3.4 -4.2 v8.4" fill="none" stroke="#e2e4e7" stroke-width="1" /><path d="M0.6 1 h2" fill="none" stroke="#46a4ee" stroke-width="1.2" /></g>
<g transform="translate(984.8,184.6)" stroke="#1d2532" stroke-width="0.8" paint-order="stroke" stroke-linejoin="round"><path d="M-4.2 -3.2 h8.4 v6.4 h-8.4z" fill="none" stroke="#e2e4e7" stroke-width="0.9" /></g>
<g transform="translate(984.8,196.2)" stroke="#1d2532" stroke-width="0.8" paint-order="stroke" stroke-linejoin="round"><path d="M-4.2 3.2 v-5.4 h3 M1.2 -2.2 h3 v5.4" fill="none" stroke="#e2e4e7" stroke-width="0.9" /><path d="M-0.6 -4.6 l1.6 1.4 l-1.6 1.4z" fill="#46a4ee" /></g>
<g transform="translate(984.8,207.8)" stroke="#1d2532" stroke-width="0.8" paint-order="stroke" stroke-linejoin="round"><path d="M-4.4 0 h3.4 M1 0 h3.4 M-2.7 -1.7 v3.4 M2.7 -1.7 v3.4" fill="none" stroke="#46a4ee" stroke-width="1" /></g>
<g transform="translate(984.8,219.4)" stroke="#1d2532" stroke-width="0.8" paint-order="stroke" stroke-linejoin="round"><path d="M-4.2 4.2 v-4.6 l4 -3.8 h4.4" fill="none" stroke="#e2e4e7" stroke-width="1" /></g>
<g transform="translate(984.8,231.0)" stroke="#1d2532" stroke-width="0.8" paint-order="stroke" stroke-linejoin="round"><path d="M-4.2 4.2 v-3.6 q0 -4.8 4.8 -4.8 h3.6" fill="none" stroke="#e2e4e7" stroke-width="1" /></g>
<g transform="translate(984.8,242.2)" stroke="#1d2532" stroke-width="0.8" paint-order="stroke" stroke-linejoin="round"><path d="M-4.2 4.2 q0 -4 3 -4.2 q3 -0.2 3 -4.2" fill="none" stroke="#46a4ee" stroke-width="1" /></g>
<g transform="translate(984.8,253.4)" stroke="#1d2532" stroke-width="0.8" paint-order="stroke" stroke-linejoin="round"><rect x="-3.6" y="-0.8" width="7.2" height="5.2" fill="#9ad0f8" rx="0.6"/><path d="M-2 -0.8 v-1.6 a2 2 0 0 1 4 0 v1.6" fill="none" stroke="#e2e4e7" stroke-width="1" /></g>
<path d="M980 261.4 h10" stroke="#6a7484" stroke-width="1"/>
<g transform="translate(984.8,269.2)" stroke="#1d2532" stroke-width="0.8" paint-order="stroke" stroke-linejoin="round"><rect x="-4.2" y="-3.8" width="5.6" height="4.6" fill="#e2e4e7" /><rect x="-1.2" y="-0.8" width="5.6" height="4.6" fill="#46a4ee" /></g>
<g transform="translate(984.8,280.8)" stroke="#1d2532" stroke-width="0.8" paint-order="stroke" stroke-linejoin="round"><rect x="-4.2" y="-3.8" width="5.6" height="4.6" fill="#46a4ee" /><rect x="-1.2" y="-0.8" width="5.6" height="4.6" fill="#e2e4e7" /></g>
<g transform="translate(984.8,292.4)" stroke="#1d2532" stroke-width="0.8" paint-order="stroke" stroke-linejoin="round"><rect x="-4.2" y="-3.8" width="5.6" height="4.6" fill="#e2e4e7" /><rect x="-1.2" y="-0.8" width="5.6" height="4.6" fill="#9ad0f8" /></g>
<g transform="translate(984.8,304.0)" stroke="#1d2532" stroke-width="0.8" paint-order="stroke" stroke-linejoin="round"><rect x="-4.2" y="-3.8" width="5.6" height="4.6" fill="#9ad0f8" /><rect x="-1.2" y="-0.8" width="5.6" height="4.6" fill="#e2e4e7" /></g>
<path d="M980 312.4 h10" stroke="#6a7484" stroke-width="1"/>
<g transform="translate(984.8,319.4)" stroke="#1d2532" stroke-width="0.8" paint-order="stroke" stroke-linejoin="round"><rect x="-3" y="-1.8" width="6.4" height="5.4" fill="#e2e4e7" /><text x="-3.4" y="-1.2" font-size="4.4" fill="#46a4ee">ABC</text></g>
<g transform="translate(984.8,331.0)" stroke="#1d2532" stroke-width="0.8" paint-order="stroke" stroke-linejoin="round"><rect x="-4" y="-3" width="6.4" height="5.4" fill="#e2e4e7" /><rect x="0.2" y="0.4" width="4" height="4" fill="#8a9098" /></g>
<path d="M980 339.4 h10" stroke="#6a7484" stroke-width="1"/>
<g transform="translate(984.8,347.4)" stroke="#1d2532" stroke-width="0.8" paint-order="stroke" stroke-linejoin="round"><text x="0" y="2.6" font-size="6.6" text-anchor="middle" fill="#46a4ee">xyz</text></g>
<g transform="translate(984.8,359.0)" stroke="#1d2532" stroke-width="0.8" paint-order="stroke" stroke-linejoin="round"><text x="0" y="2.6" font-size="6.4" text-anchor="middle" fill="#46a4ee">x/z</text></g>
<path d="M980 366.6 h10" stroke="#6a7484" stroke-width="1"/>
<g transform="translate(984.8,374.4)" stroke="#1d2532" stroke-width="0.8" paint-order="stroke" stroke-linejoin="round"><text x="0" y="2.6" font-size="7.4" text-anchor="middle" fill="#46a4ee">z▪</text></g>
<g transform="translate(984.8,386.0)" stroke="#1d2532" stroke-width="0.8" paint-order="stroke" stroke-linejoin="round"><text x="0" y="2.6" font-size="7.4" text-anchor="middle" fill="#46a4ee">x▪</text></g>
<g transform="translate(984.8,397.4)" stroke="#1d2532" stroke-width="0.8" paint-order="stroke" stroke-linejoin="round"><text x="0" y="2.6" font-size="7.4" text-anchor="middle" fill="#46a4ee">y▪</text></g>
<path d="M980 405.4 h10" stroke="#6a7484" stroke-width="1"/>
<g transform="translate(984.8,412.6)" stroke="#1d2532" stroke-width="0.8" paint-order="stroke" stroke-linejoin="round"><rect x="-4" y="-3.4" width="8" height="4" fill="#e2e4e7" /><rect x="-3" y="-2.4" width="6" height="1.4" fill="#46a4ee" /><rect x="-4" y="2" width="8" height="1.6" fill="#e6953a" /></g>
<g transform="translate(984.8,424.2)" stroke="#1d2532" stroke-width="0.8" paint-order="stroke" stroke-linejoin="round"><rect x="-4" y="-3.4" width="8" height="4" fill="#e2e4e7" /><rect x="-3" y="-2.4" width="3" height="1.4" fill="#46a4ee" /><rect x="-4" y="2" width="8" height="1.6" fill="#e6953a" /></g>
<path d="M980 431.4 h10" stroke="#6a7484" stroke-width="1"/>
<g transform="translate(984.8,440.0)" stroke="#1d2532" stroke-width="0.8" paint-order="stroke" stroke-linejoin="round"><rect x="-4.2" y="-3.4" width="4" height="7" fill="#e2e4e7" /><rect x="0.6" y="-2.6" width="3.6" height="5.2" fill="#46a4ee" /></g>
<rect x="14.4" y="431.4" width="961.8" height="9.8" fill="#f0f0f0" />
<path d="M406 436.6 h8.4" stroke="#8a8a8a" stroke-width="1"/>
<path d="M13.95 430.2 h474.3" stroke="#1a72e8" stroke-width="1.9"/>
<rect x="14.4" y="441.2" width="978.0" height="18.0" fill="#3b4453" />
<rect x="15.4" y="441.8" width="928.4" height="16.2" fill="#394150" stroke="#2d333e" stroke-width="0.9"/>
<g transform="translate(24.0,449.4)" stroke="#1d2532" stroke-width="0.8" paint-order="stroke" stroke-linejoin="round"><path d="M-4.4 -0.6 l3 -3 h6 l-3 3z" fill="#e2e4e7" /><path d="M-4.4 1.4 l3 -3 h6 l-3 3z" fill="#c4c8cd" /><path d="M-4.4 3.4 l3 -3 h6 l-3 3z" fill="#e2e4e7" /><circle cx="2.8" cy="2.8" r="1.8" fill="#f2c63a" /></g>
<g transform="translate(36.2,449.4)" stroke="#1d2532" stroke-width="0.8" paint-order="stroke" stroke-linejoin="round"><path d="M-4.4 -0.6 l3 -3 h6 l-3 3z" fill="#e2e4e7" /><path d="M-4.4 1.4 l3 -3 h6 l-3 3z" fill="#c4c8cd" /><path d="M-4.4 3.4 l3 -3 h6 l-3 3z" fill="#e2e4e7" /><path d="M-4 -3 l1.6 1.8 l3 -3.4" fill="none" stroke="#44c45c" stroke-width="1.2" /></g>
<g transform="translate(48.4,449.4)" stroke="#1d2532" stroke-width="0.8" paint-order="stroke" stroke-linejoin="round"><path d="M-4.4 -0.6 l3 -3 h6 l-3 3z" fill="#e2e4e7" /><path d="M-4.4 1.4 l3 -3 h6 l-3 3z" fill="#c4c8cd" /><path d="M-4.4 3.4 l3 -3 h6 l-3 3z" fill="#e2e4e7" /><path d="M1 4 l3.6 -3.6" fill="none" stroke="#e2e4e7" stroke-width="1.2" /></g>
<g transform="translate(60.6,449.4)" stroke="#1d2532" stroke-width="0.8" paint-order="stroke" stroke-linejoin="round"><path d="M-4.4 -0.6 l3 -3 h6 l-3 3z" fill="#e2e4e7" /><path d="M-4.4 1.4 l3 -3 h6 l-3 3z" fill="#c4c8cd" /><path d="M-4.4 3.4 l3 -3 h6 l-3 3z" fill="#e2e4e7" /><path d="M1 4 l3.6 -3.6" fill="none" stroke="#46a4ee" stroke-width="1.2" /></g>
<g transform="translate(73.0,449.4)" stroke="#1d2532" stroke-width="0.8" paint-order="stroke" stroke-linejoin="round"><path d="M-1 -4.4 q4 0.6 2 4 q-3 1 -1 4.6" fill="none" stroke="#46a4ee" stroke-width="1.1" /><path d="M-4.4 -0.6 l3 -3 h6 l-3 3z" fill="#e2e4e7" /><path d="M-4.4 1.4 l3 -3 h6 l-3 3z" fill="#c4c8cd" /><path d="M-4.4 3.4 l3 -3 h6 l-3 3z" fill="#e2e4e7" /></g>
<g transform="translate(85.2,449.4)" stroke="#1d2532" stroke-width="0.8" paint-order="stroke" stroke-linejoin="round"><path d="M-4.4 -0.6 l3 -3 h6 l-3 3z" fill="#e2e4e7" /><path d="M-4.4 1.4 l3 -3 h6 l-3 3z" fill="#c4c8cd" /><path d="M-4.4 3.4 l3 -3 h6 l-3 3z" fill="#e2e4e7" /><rect x="1" y="0.6" width="3.6" height="3.8" fill="#e2e4e7" /><rect x="1.8" y="1.6" width="0.8" height="2.8" fill="#5a606a" /><rect x="3.2" y="1.6" width="0.8" height="2.8" fill="#5a606a" /></g>
<path d="M92.7 444.4 v10.0" stroke="#252a33" stroke-width="0.8"/><path d="M93.5 444.4 v10.0" stroke="#555e6e" stroke-width="0.6"/>
<g transform="translate(100.4,449.4)" stroke="#1d2532" stroke-width="0.8" paint-order="stroke" stroke-linejoin="round"><path d="M-4.4 -0.6 l3 -3 h6 l-3 3z" fill="#e2e4e7" /><path d="M-4.4 1.4 l3 -3 h6 l-3 3z" fill="#c4c8cd" /><path d="M-4.4 3.4 l3 -3 h6 l-3 3z" fill="#e2e4e7" /><circle cx="2.8" cy="2.6" r="1.8" fill="#f2c63a" /><rect x="2.2" y="4" width="1.2" height="1" fill="#c8a030" /></g>
<g transform="translate(112.4,449.4)" stroke="#1d2532" stroke-width="0.8" paint-order="stroke" stroke-linejoin="round"><path d="M-4.4 -0.6 l3 -3 h6 l-3 3z" fill="#e2e4e7" /><path d="M-4.4 1.4 l3 -3 h6 l-3 3z" fill="#c4c8cd" /><path d="M-4.4 3.4 l3 -3 h6 l-3 3z" fill="#e2e4e7" /><path d="M2.8 0.4 l0.7 1.5 l1.6 0.2 l-1.2 1.1 l0.3 1.6 l-1.4 -0.8 l-1.4 0.8 l0.3 -1.6 l-1.2 -1.1 l1.6 -0.2z" fill="#f2c63a" /></g>
<g transform="translate(124.6,449.4)" stroke="#1d2532" stroke-width="0.8" paint-order="stroke" stroke-linejoin="round"><path d="M-4.4 -0.6 l3 -3 h6 l-3 3z" fill="#e2e4e7" /><path d="M-4.4 1.4 l3 -3 h6 l-3 3z" fill="#c4c8cd" /><path d="M-4.4 3.4 l3 -3 h6 l-3 3z" fill="#e2e4e7" /><path d="M2.8 0.4 l0.7 1.5 l1.6 0.2 l-1.2 1.1 l0.3 1.6 l-1.4 -0.8 l-1.4 0.8 l0.3 -1.6 l-1.2 -1.1 l1.6 -0.2z" fill="#46a4ee" /></g>
<g transform="translate(136.8,449.4)" stroke="#1d2532" stroke-width="0.8" paint-order="stroke" stroke-linejoin="round"><path d="M-4.4 -0.6 l3 -3 h6 l-3 3z" fill="#e2e4e7" /><path d="M-4.4 1.4 l3 -3 h6 l-3 3z" fill="#c4c8cd" /><path d="M-4.4 3.4 l3 -3 h6 l-3 3z" fill="#e2e4e7" /><circle cx="2.8" cy="2.6" r="1.8" fill="#e2e4e7" /><rect x="2.2" y="4" width="1.2" height="1" fill="#e2e4e7" /></g>
<g transform="translate(149.0,449.4)" stroke="#1d2532" stroke-width="0.8" paint-order="stroke" stroke-linejoin="round"><path d="M-4.4 -0.6 l3 -3 h6 l-3 3z" fill="#e2e4e7" /><path d="M-4.4 1.4 l3 -3 h6 l-3 3z" fill="#c4c8cd" /><path d="M-4.4 3.4 l3 -3 h6 l-3 3z" fill="#e2e4e7" /><rect x="1" y="1.6" width="3.8" height="3" fill="#46a4ee" /><path d="M1.8 1.6 v-1 a1.1 1.1 0 0 1 2.2 0 v1" fill="none" stroke="#e2e4e7" stroke-width="0.7" /></g>
<g transform="translate(161.2,449.4)" stroke="#1d2532" stroke-width="0.8" paint-order="stroke" stroke-linejoin="round"><path d="M-4.4 -0.6 l3 -3 h6 l-3 3z" fill="#e2e4e7" /><path d="M-4.4 1.4 l3 -3 h6 l-3 3z" fill="#c4c8cd" /><path d="M-4.4 3.4 l3 -3 h6 l-3 3z" fill="#e2e4e7" /><rect x="1" y="1.6" width="3.8" height="3" fill="#f2c63a" /><path d="M1.8 1.6 v-1 a1.1 1.1 0 0 1 2.2 0" fill="none" stroke="#e2e4e7" stroke-width="0.7" /></g>
<path d="M169.7 444.4 v10.0" stroke="#252a33" stroke-width="0.8"/><path d="M170.5 444.4 v10.0" stroke="#555e6e" stroke-width="0.6"/>
<g transform="translate(178.0,449.4)" stroke="#1d2532" stroke-width="0.8" paint-order="stroke" stroke-linejoin="round"><path d="M-4.4 -0.6 l3 -3 h6 l-3 3z" fill="#e2e4e7" /><path d="M-4.4 1.4 l3 -3 h6 l-3 3z" fill="#c4c8cd" /><path d="M-4.4 3.4 l3 -3 h6 l-3 3z" fill="#e2e4e7" /><rect x="0.6" y="0.4" width="4.2" height="4.2" fill="#f4f4f4" /><rect x="1.6" y="1.4" width="2.2" height="2.2" fill="#46a4ee" /></g>
<g transform="translate(348.4,449.4)" stroke="#1d2532" stroke-width="0.8" paint-order="stroke" stroke-linejoin="round"><path d="M-4.4 -0.6 l3 -3 h6 l-3 3z" fill="#e2e4e7" /><path d="M-4.4 1.4 l3 -3 h6 l-3 3z" fill="#c4c8cd" /><path d="M-4.4 3.4 l3 -3 h6 l-3 3z" fill="#e2e4e7" /><circle cx="1.6" cy="-2.8" r="1.6" fill="#e2e4e7" /></g>
<g transform="translate(361.0,449.4)" stroke="#1d2532" stroke-width="0.8" paint-order="stroke" stroke-linejoin="round"><path d="M-4.4 -0.6 l3 -3 h6 l-3 3z" fill="#e2e4e7" /><path d="M-4.4 1.4 l3 -3 h6 l-3 3z" fill="#c4c8cd" /><path d="M-4.4 3.4 l3 -3 h6 l-3 3z" fill="#e2e4e7" /><path d="M-3.4 -3.6 h3 M-3.4 -3.6 l1.4 -1.2 M-3.4 -3.6 l1.4 1.2" fill="none" stroke="#46a4ee" stroke-width="0.9" /></g>
<g transform="translate(373.4,449.4)" stroke="#1d2532" stroke-width="0.8" paint-order="stroke" stroke-linejoin="round"><path d="M-4.4 -0.6 l3 -3 h6 l-3 3z" fill="#e2e4e7" /><path d="M-4.4 1.4 l3 -3 h6 l-3 3z" fill="#c4c8cd" /><path d="M-4.4 3.4 l3 -3 h6 l-3 3z" fill="#e2e4e7" /><rect x="1" y="0.6" width="3.8" height="3.8" fill="#c9ccd0" /><rect x="1.8" y="1.4" width="2.2" height="2.2" fill="#e2e4e7" /></g>
<path d="M380.3 444.4 v10.0" stroke="#252a33" stroke-width="0.8"/><path d="M381.1 444.4 v10.0" stroke="#555e6e" stroke-width="0.6"/>
<path d="M688.7 444.4 v10.0" stroke="#252a33" stroke-width="0.8"/><path d="M689.5 444.4 v10.0" stroke="#555e6e" stroke-width="0.6"/>
<g transform="translate(697.0,449.4)" stroke="#1d2532" stroke-width="0.8" paint-order="stroke" stroke-linejoin="round"><path d="M-4.6 0 h6.6" fill="none" stroke="#e2e4e7" stroke-width="1" /><rect x="2.1" y="-1.1" width="2.2" height="2.2" fill="none" stroke="#e6953a" stroke-width="0.8"/><circle cx="-4.4" cy="0" r="0.7" fill="#e2e4e7" /></g>
<g transform="translate(709.0,449.4)" stroke="#1d2532" stroke-width="0.8" paint-order="stroke" stroke-linejoin="round"><path d="M-3.4 4.4 v-5.4 q0 -2 2 -2 h2" fill="none" stroke="#e2e4e7" stroke-width="0.9" /><rect x="-4.5" y="2.3" width="2.2" height="2.2" fill="none" stroke="#e6953a" stroke-width="0.8"/><rect x="1.5" y="-4.1" width="2.2" height="2.2" fill="none" stroke="#e6953a" stroke-width="0.8"/></g>
<path d="M716.7 444.4 v10.0" stroke="#252a33" stroke-width="0.8"/><path d="M717.5 444.4 v10.0" stroke="#555e6e" stroke-width="0.6"/>
<g transform="translate(724.4,449.4)" stroke="#1d2532" stroke-width="0.8" paint-order="stroke" stroke-linejoin="round"><path d="M-3.6 3.6 l7.2 -7.2" fill="none" stroke="#e2e4e7" stroke-width="0.9" /><rect x="-4.5" y="2.3" width="2.2" height="2.2" fill="none" stroke="#e6953a" stroke-width="0.8"/><rect x="2.3" y="-4.5" width="2.2" height="2.2" fill="none" stroke="#e6953a" stroke-width="0.8"/></g>
<g transform="translate(736.4,449.4)" stroke="#1d2532" stroke-width="0.8" paint-order="stroke" stroke-linejoin="round"><path d="M-4 4 l8 -8" fill="none" stroke="#e2e4e7" stroke-width="0.9" /><rect x="-1.1" y="-1.1" width="2.2" height="2.2" fill="none" stroke="#e6953a" stroke-width="0.8"/></g>
<g transform="translate(748.4,449.4)" stroke="#1d2532" stroke-width="0.8" paint-order="stroke" stroke-linejoin="round"><path d="M-4 -4 l8 8 M-4 4 l8 -8" fill="none" stroke="#e2e4e7" stroke-width="0.9" /><rect x="-1.1" y="-1.1" width="2.2" height="2.2" fill="none" stroke="#e6953a" stroke-width="0.8"/></g>
<g transform="translate(760.6,449.4)" stroke="#1d2532" stroke-width="0.8" paint-order="stroke" stroke-linejoin="round"><path d="M-4 -4 l8 8 M-4 4 l8 -8" fill="none" stroke="#e2e4e7" stroke-width="0.9" stroke-dasharray="3 1.4"/><rect x="-1.1" y="-1.1" width="2.2" height="2.2" fill="none" stroke="#e6953a" stroke-width="0.8"/></g>
<g transform="translate(772.6,449.4)" stroke="#1d2532" stroke-width="0.8" paint-order="stroke" stroke-linejoin="round"><path d="M-4.6 0 h9.2" fill="none" stroke="#e2e4e7" stroke-width="0.9" stroke-dasharray="2 1.2"/></g>
<path d="M780.7 444.4 v10.0" stroke="#252a33" stroke-width="0.8"/><path d="M781.5 444.4 v10.0" stroke="#555e6e" stroke-width="0.6"/>
<g transform="translate(788.4,449.4)" stroke="#1d2532" stroke-width="0.8" paint-order="stroke" stroke-linejoin="round"><circle cx="0" cy="0" r="4.2" fill="none" stroke="#e2e4e7" stroke-width="0.9"/><circle cx="0" cy="0" r="1.1" fill="none" stroke="#e6953a" stroke-width="0.8"/></g>
<g transform="translate(800.6,449.4)" stroke="#1d2532" stroke-width="0.8" paint-order="stroke" stroke-linejoin="round"><circle cx="0" cy="0" r="3.6" fill="none" stroke="#e2e4e7" stroke-width="0.9"/><path d="M0 -5 l1.3 1.3 l-1.3 1.3 l-1.3 -1.3z M0 2.4 l1.3 1.3 l-1.3 1.3 l-1.3 -1.3z M-3.7 -1.3 l1.3 1.3 l-1.3 1.3 l-1.3 -1.3z M3.7 -1.3 l1.3 1.3 l-1.3 1.3 l-1.3 -1.3z" fill="none" stroke="#e6953a" stroke-width="0.7"/></g>
<g transform="translate(813.0,449.4)" stroke="#1d2532" stroke-width="0.8" paint-order="stroke" stroke-linejoin="round"><circle cx="0.4" cy="0.6" r="3.6" fill="none" stroke="#e2e4e7" stroke-width="0.9"/><path d="M-4.4 -3 h5" fill="none" stroke="#e2e4e7" stroke-width="0.9" /><rect x="-0.7000000000000001" y="-4.1" width="2.2" height="2.2" fill="none" stroke="#e6953a" stroke-width="0.8"/></g>
<path d="M820.1 444.4 v10.0" stroke="#252a33" stroke-width="0.8"/><path d="M820.9 444.4 v10.0" stroke="#555e6e" stroke-width="0.6"/>
<g transform="translate(827.4,449.4)" stroke="#1d2532" stroke-width="0.8" paint-order="stroke" stroke-linejoin="round"><path d="M-4.4 3 h8.8 M0 3 v-7" fill="none" stroke="#e2e4e7" stroke-width="0.9" /><rect x="-1.1" y="1.9" width="2.2" height="2.2" fill="none" stroke="#e6953a" stroke-width="0.8"/></g>
<g transform="translate(839.6,449.4)" stroke="#1d2532" stroke-width="0.8" paint-order="stroke" stroke-linejoin="round"><path d="M-4.4 2.6 l6 -7 M-1.6 4.4 l6 -7" fill="none" stroke="#e2e4e7" stroke-width="0.9" /></g>
<g transform="translate(852.0,449.4)" stroke="#1d2532" stroke-width="0.8" paint-order="stroke" stroke-linejoin="round"><path d="M-4.2 -2.6 h6 l2.6 2 v2.4 h-8.6z" fill="none" stroke="#e2e4e7" stroke-width="0.8" /><rect x="-3.3000000000000003" y="1.5" width="2.2" height="2.2" fill="none" stroke="#e6953a" stroke-width="0.8"/><circle cx="2.4" cy="2.8" r="1.2" fill="none" stroke="#e2e4e7" stroke-width="0.7"/></g>
<g transform="translate(864.4,449.4)" stroke="#1d2532" stroke-width="0.8" paint-order="stroke" stroke-linejoin="round"><rect x="-1.1" y="-1.1" width="2.2" height="2.2" fill="none" stroke="#e6953a" stroke-width="0.8"/></g>
<path d="M871.7 444.4 v10.0" stroke="#252a33" stroke-width="0.8"/><path d="M872.5 444.4 v10.0" stroke="#555e6e" stroke-width="0.6"/>
<g transform="translate(879.4,449.4)" stroke="#1d2532" stroke-width="0.8" paint-order="stroke" stroke-linejoin="round"><path d="M-4.4 4 l6.4 -6.4" fill="none" stroke="#e2e4e7" stroke-width="0.9" /><path d="M-1 -2 q3 -2.6 4.4 1" fill="none" stroke="#e2e4e7" stroke-width="0.8" /><rect x="1.9" y="0.8999999999999999" width="2.2" height="2.2" fill="none" stroke="#e6953a" stroke-width="0.8"/></g>
<g transform="translate(891.6,449.4)" stroke="#1d2532" stroke-width="0.8" paint-order="stroke" stroke-linejoin="round"><path d="M-3 4 v-4.6 a3 3 0 0 1 6 0 v4.6" fill="none" stroke="#e2e4e7" stroke-width="2" /><path d="M1.6 -4.6 l3 3 M4.6 -4.6 l-3 3" fill="none" stroke="#d83c3c" stroke-width="1.1" /><rect x="2.6" y="2.6" width="1.6" height="1.6" fill="#e6953a" /></g>
<path d="M898.7 444.4 v10.0" stroke="#252a33" stroke-width="0.8"/><path d="M899.5 444.4 v10.0" stroke="#555e6e" stroke-width="0.6"/>
<g transform="translate(906.6,449.4)" stroke="#1d2532" stroke-width="0.8" paint-order="stroke" stroke-linejoin="round"><path d="M-3 4 v-4.6 a3 3 0 0 1 6 0 v4.6" fill="none" stroke="#e2e4e7" stroke-width="2" /><rect x="2.8" y="2.6" width="1.6" height="1.6" fill="#e6953a" /></g>
<path d="M914.1 444.4 v10.0" stroke="#252a33" stroke-width="0.8"/><path d="M914.9 444.4 v10.0" stroke="#555e6e" stroke-width="0.6"/>
<g transform="translate(923.0,449.4)" stroke="#1d2532" stroke-width="0.8" paint-order="stroke" stroke-linejoin="round"><path d="M-4 -1.6 l2.2 -2.4 h6 v6 l-2.2 2.4 h-6z M-4 -1.6 h6 v6.4 M2 -1.6 l2.2 -2.4" fill="none" stroke="#e2e4e7" stroke-width="0.8" /></g>
<g transform="translate(936.0,449.4)" stroke="#1d2532" stroke-width="0.8" paint-order="stroke" stroke-linejoin="round"><path d="M-4 -1.6 l2.2 -2.4 h6 v6 l-2.2 2.4 h-6z" fill="#46a4ee" /><path d="M-4 -1.6 h6 l2.2 -2.4 h-6z" fill="#c8e4fa" /><path d="M2 -1.6 l2.2 -2.4 v6 l-2.2 2.4z" fill="#e8eaec" /></g>
<path d="M17.4 445.4 v8.0" stroke="#6a7484" stroke-width="1.2"/>
<rect x="185.0" y="444.0" width="157.4" height="10.8" fill="#fff"/>
<text x="236.6" y="451.7" font-size="6.4" fill="#20242c" textLength="3.4" lengthAdjust="spacingAndGlyphs">0</text>
<path d="M334.4 448.4 l2.2 2.2 l2.2 -2.2" fill="none" stroke="#555a64" stroke-width="0.8"/>
<g transform="translate(190.4,449.4)"><circle cx="0" cy="-0.8" r="2.4" fill="#f4a820" /><rect x="-1" y="1.4" width="2" height="1.8" fill="#c88818" /></g>
<g transform="translate(200.2,449.4)"><circle cx="0" cy="0" r="1.9" fill="#f4a820" /><path d="M0 -3.8 v7.6 M-3.8 0 h7.6 M-2.7 -2.7 l5.4 5.4 M-2.7 2.7 l5.4 -5.4" fill="none" stroke="#f4a820" stroke-width="0.8" /></g>
<g transform="translate(210.4,449.4)"><path d="M-2.6 -2.6 h5.2 v5.2 h-5.2z" fill="none" stroke="#8a9098" stroke-width="0.8" /><rect x="-3.6" y="-3.6" width="2" height="2" fill="#8a9098" /><rect x="1.6" y="-3.6" width="2" height="2" fill="#8a9098" /><rect x="-3.6" y="1.6" width="2" height="2" fill="#8a9098" /><rect x="1" y="1" width="2.8" height="2.8" fill="#f4a820" /></g>
<g transform="translate(220.4,449.4)"><rect x="-2.8" y="-0.4" width="5.6" height="4.4" fill="#f4a820" /><path d="M-1.2 -0.4 v-1.6 a1.6 1.6 0 0 1 3.2 0" fill="none" stroke="#f4a820" stroke-width="1" /></g>
<g transform="translate(230.2,449.4)"><rect x="-3" y="-3" width="6" height="6" fill="#fff" stroke="#555a64" stroke-width="0.8"/></g>
<rect x="384.0" y="444.0" width="79.0" height="10.8" fill="#fff"/>
<text x="395.0" y="451.8" font-size="6.6" fill="#20242c" textLength="22.4" lengthAdjust="spacingAndGlyphs">ByLayer</text>
<path d="M455.0 448.4 l2.2 2.2 l2.2 -2.2" fill="none" stroke="#555a64" stroke-width="0.8"/>
<rect x="386.8" y="446" width="6.2" height="6.6" fill="#fff" stroke="#555a64" stroke-width="0.7"/>
<rect x="466.4" y="444.0" width="84.0" height="10.8" fill="#fff"/>
<text x="503.6" y="451.8" font-size="6.6" fill="#20242c" textLength="22.4" lengthAdjust="spacingAndGlyphs">ByLayer</text>
<path d="M542.4 448.4 l2.2 2.2 l2.2 -2.2" fill="none" stroke="#555a64" stroke-width="0.8"/>
<path d="M469 449.6 h31" stroke="#30343c" stroke-width="0.9"/>
<rect x="553.4" y="444.0" width="66.6" height="10.8" fill="#fff"/>
<text x="577.6" y="451.8" font-size="6.6" fill="#20242c" textLength="22.4" lengthAdjust="spacingAndGlyphs">ByLayer</text>
<path d="M612.0 448.4 l2.2 2.2 l2.2 -2.2" fill="none" stroke="#555a64" stroke-width="0.8"/>
<path d="M556 449.6 h19" stroke="#30343c" stroke-width="0.9"/>
<rect x="622.8" y="444.0" width="63.4" height="10.8" fill="#f6f6f6"/>
<text x="628.4" y="451.8" font-size="6.6" fill="#9a9ea6" textLength="21.2" lengthAdjust="spacingAndGlyphs">ByColor</text>
<path d="M678.2 448.4 l2.2 2.2 l2.2 -2.2" fill="none" stroke="#555a64" stroke-width="0.8"/>
<rect x="0.0" y="459.4" width="992.0" height="23.2" fill="#3b4453" />
<rect x="29.2" y="459.8" width="962.8" height="22.4" fill="#ffffff" />
<path d="M1.2 465 v11 M2.8 465 v11" stroke="#7a8494" stroke-width="0.8" stroke-dasharray="1 1"/>
<path d="M7.4 468.6 l4.4 4.4 M11.8 468.6 l-4.4 4.4" stroke="#e2e4e7" stroke-width="1.1"/>
<g transform="translate(21.6,471.0)" stroke="#1d2532" stroke-width="0.8" paint-order="stroke" stroke-linejoin="round"><path d="M-3.2 3.4 l4 -4" fill="none" stroke="#e2e4e7" stroke-width="1.6" /><path d="M1.4 -3.6 a2.4 2.4 0 1 0 2.6 2.8" fill="none" stroke="#e2e4e7" stroke-width="1.2" /></g>
<rect x="31.6" y="468.2" width="7" height="5.4" fill="#e4e4e4" stroke="#a8a8a8" stroke-width="0.6"/><path d="M32.8 471.8 h2.4" stroke="#888" stroke-width="0.6"/>
<path d="M40.6 470.2 h3 l-1.5 1.8z" fill="#a0a0a0"/>
<text x="48.4" y="473.6" font-size="7.8" fill="#808080" font-style="italic" textLength="53.4" lengthAdjust="spacingAndGlyphs">ここにコマンドを入力</text>
<rect x="0.0" y="482.4" width="992.0" height="16.6" fill="#222933" />
<path d="M6.6 488.4 h9 M6.6 491.4 h9 M6.6 494.4 h9" stroke="#e2e4e7" stroke-width="1.1"/>
<polygon points="21.0,499.0 26.6,484.0 53.6,484.0 48.0,499.0" fill="#3b4453" />
<text x="29" y="494.8" font-size="8" fill="#f4f4f4" textLength="16" lengthAdjust="spacingAndGlyphs">モデル</text>
<text x="61.0" y="494.4" font-size="7" fill="#e8eaec" text-anchor="middle">01</text>
<text x="80.4" y="494.4" font-size="7" fill="#e8eaec" text-anchor="middle">02</text>
<text x="100.0" y="494.4" font-size="7" fill="#e8eaec" text-anchor="middle">03</text>
<text x="119.4" y="494.4" font-size="7" fill="#e8eaec" text-anchor="middle">04</text>
<text x="139.0" y="494.4" font-size="7" fill="#e8eaec" text-anchor="middle">05</text>
<text x="158.4" y="494.4" font-size="7" fill="#e8eaec" text-anchor="middle">06</text>
<path d="M69.4 496.6 l2.4 -9" stroke="#59606c" stroke-width="0.8"/>
<path d="M89.0 496.6 l2.4 -9" stroke="#59606c" stroke-width="0.8"/>
<path d="M108.4 496.6 l2.4 -9" stroke="#59606c" stroke-width="0.8"/>
<path d="M128.0 496.6 l2.4 -9" stroke="#59606c" stroke-width="0.8"/>
<path d="M147.4 496.6 l2.4 -9" stroke="#59606c" stroke-width="0.8"/>
<path d="M167.0 496.6 l2.4 -9" stroke="#59606c" stroke-width="0.8"/>
<path d="M188.4 496.6 l2.4 -9" stroke="#59606c" stroke-width="0.8"/>
<path d="M174.4 491.4 h7.6 M178.2 487.6 v7.6" stroke="#e2e4e7" stroke-width="1.3"/>
<text x="589" y="494.8" font-size="8" fill="#f4f4f4" textLength="15.4" lengthAdjust="spacingAndGlyphs">モデル</text>
<rect x="654.8" y="486.4" width="11.6" height="11.2" fill="#4a86cc" />
<rect x="697.0" y="486.4" width="12.4" height="11.2" fill="#4a86cc" />
<rect x="710.0" y="486.4" width="11.6" height="11.2" fill="#4a86cc" />
<rect x="744.6" y="486.4" width="12.0" height="11.2" fill="#4a86cc" />
<rect x="780.0" y="486.4" width="12.4" height="11.2" fill="#4a86cc" />
<rect x="816.0" y="486.4" width="12.4" height="11.2" fill="#4a86cc" />
<rect x="908.0" y="486.4" width="12.4" height="11.2" fill="#4a86cc" />
<g transform="translate(612.4,492.0)"><path d="M-3.6 -1.8 h7.2 M-3.6 0.2 h7.2 M-3.6 2.2 h7.2 M-1.8 -3.6 v7.4 M0.2 -3.6 v7.4 M2.2 -3.6 v7.4" fill="none" stroke="#e2e4e7" stroke-width="0.7" /></g>
<g transform="translate(625.0,492.0)"><circle cx="-2.6" cy="-2.6" r="0.55" fill="#e2e4e7" /><circle cx="-2.6" cy="0" r="0.55" fill="#e2e4e7" /><circle cx="-2.6" cy="2.6" r="0.55" fill="#e2e4e7" /><circle cx="0" cy="-2.6" r="0.55" fill="#e2e4e7" /><circle cx="0" cy="0" r="0.55" fill="#e2e4e7" /><circle cx="0" cy="2.6" r="0.55" fill="#e2e4e7" /><circle cx="2.6" cy="-2.6" r="0.55" fill="#e2e4e7" /><circle cx="2.6" cy="0" r="0.55" fill="#e2e4e7" /><circle cx="2.6" cy="2.6" r="0.55" fill="#e2e4e7" /></g>
<path d="M633.6 490.8 h4 l-2 2.4z" fill="#e2e4e7"/>
<path d="M641.4 487 v10" stroke="#59606c" stroke-width="0.7"/>
<g transform="translate(647.6,492.0)"><path d="M-3 -4 v7.4 h7" fill="none" stroke="#e2e4e7" stroke-width="1" /><path d="M-0.6 3.4 v-2 h2" fill="none" stroke="#e2e4e7" stroke-width="0.7" /></g>
<g transform="translate(660.6,492.0)"><circle cx="0" cy="0.6" r="3.2" fill="none" stroke="#e2e4e7" stroke-width="1"/><path d="M0 0.6 l4 -4 M0 0.6 h4.6" fill="none" stroke="#e2e4e7" stroke-width="0.9" /></g>
<path d="M668.6 490.8 h4 l-2 2.4z" fill="#e2e4e7"/>
<g transform="translate(681.4,492.0)"><path d="M-3 -4 l6 8" fill="none" stroke="#44c45c" stroke-width="1" /><path d="M0 0 l-3 3.6" fill="none" stroke="#d83c3c" stroke-width="1" /><path d="M0 -4 v4" fill="none" stroke="#e2e4e7" stroke-width="0.9" /></g>
<path d="M690.0 490.8 h4 l-2 2.4z" fill="#e2e4e7"/>
<g transform="translate(703.2,492.0)"><path d="M-3.8 3.6 h7.6 M-3.8 3.6 l7 -7" fill="none" stroke="#e2e4e7" stroke-width="1.1" /></g>
<g transform="translate(715.8,492.0)"><rect x="-3" y="-2" width="6.4" height="6" fill="none" stroke="#e2e4e7" stroke-width="1"/><rect x="-4.2" y="-3.4" width="2.4" height="2.4" fill="#e2e4e7" /></g>
<path d="M724.4 490.8 h4 l-2 2.4z" fill="#e2e4e7"/>
<g transform="translate(737.2,492.0)"><path d="M-3.8 -3 h7.6" fill="none" stroke="#e2e4e7" stroke-width="0.6" /><path d="M-3.8 -0.6 h5" fill="none" stroke="#e2e4e7" stroke-width="1.1" /><path d="M-3.8 2.6 h7.6" fill="none" stroke="#e2e4e7" stroke-width="1.8" /></g>
<g transform="translate(750.6,492.0)"><path d="M-3.6 -1.4 l2.4 -2.4 h5 v5 l-2.4 2.6 h-5z" fill="#e2e4e7" /><rect x="-3.6" y="-3.8" width="2.4" height="2.4" fill="#e2e4e7" /></g>
<g transform="translate(763.2,492.0)"><rect x="-3.8" y="-1.2" width="5.4" height="5" fill="none" stroke="#e2e4e7" stroke-width="0.9"/><path d="M-1.8 -1.2 v-2 h5.6 v5 h-2" fill="none" stroke="#e2e4e7" stroke-width="0.9" /></g>
<path d="M772.4 490.8 h4 l-2 2.4z" fill="#e2e4e7"/>
<g transform="translate(786.2,492.0)"><path d="M-3.2 -4.2 v6.4 h6.6" fill="none" stroke="#e2e4e7" stroke-width="1.1" /><path d="M-3.2 -5 l1.3 2 h-2.6z" fill="#e2e4e7" /><rect x="-0.6" y="-1.6" width="3.2" height="3.2" fill="#e2e4e7" /></g>
<g transform="translate(799.0,492.0)"><rect x="-3.4" y="-3" width="6.8" height="6.4" fill="none" stroke="#e2e4e7" stroke-width="0.9"/><rect x="-1.4" y="-1" width="2.8" height="2.6" fill="none" stroke="#e2e4e7" stroke-width="0.7"/><circle cx="-3.4" cy="-3" r="0.8" fill="#44c45c" /><circle cx="3.4" cy="3.4" r="0.8" fill="#44c45c" /></g>
<path d="M807.6 490.8 h4 l-2 2.4z" fill="#e2e4e7"/>
<g transform="translate(822.2,492.0)"><path d="M0 -4.2 l1 3.4 l3 4.4 h-1.6 l-2.4 -3 l-2.4 3 h-1.6 l3 -4.4z" fill="#e2e4e7" /><path d="M2.2 -3.6 l1.6 -0.8" fill="none" stroke="#e2e4e7" stroke-width="0.8" /></g>
<g transform="translate(834.4,492.0)"><path d="M0 -4.2 l1 3.4 l3 4.4 h-1.6 l-2.4 -3 l-2.4 3 h-1.6 l3 -4.4z" fill="#e2e4e7" /><path d="M2.4 -2.4 h2.4 M3.6 -3.6 v2.4" fill="none" stroke="#e2e4e7" stroke-width="0.7" /></g>
<g transform="translate(846.6,492.0)"><path d="M0 -4.2 l1 3.4 l3 4.4 h-1.6 l-2.4 -3 l-2.4 3 h-1.6 l3 -4.4z" fill="#e2e4e7" /></g>
<path d="M865.6 490.8 h4 l-2 2.4z" fill="#e2e4e7"/>
<g transform="translate(878.4,492.0)"><circle cx="0" cy="0" r="3" fill="#e2e4e7" /><circle cx="0" cy="0" r="1.2" fill="#222933" /><path d="M0 -4.4 v8.8 M-4.4 0 h8.8 M-3.1 -3.1 l6.2 6.2 M-3.1 3.1 l6.2 -6.2" fill="none" stroke="#e2e4e7" stroke-width="1.3" stroke-dasharray="1.6 5.6"/></g>
<path d="M887.4 490.8 h4 l-2 2.4z" fill="#e2e4e7"/>
<g transform="translate(900.4,492.0)"><path d="M-4.4 0 h8.8 M0 -4.4 v8.8" fill="none" stroke="#e2e4e7" stroke-width="1.2" /></g>
<g transform="translate(914.2,492.0)"><rect x="-3" y="-4" width="6.2" height="8.2" fill="none" stroke="#e2e4e7" stroke-width="0.9"/><path d="M-1.6 -2 h3.4 M-1.6 0 h3.4 M-1.6 2 h3.4" fill="none" stroke="#e2e4e7" stroke-width="0.8" /></g>
<g transform="translate(929.0,492.0)"><rect x="-3.8" y="-3.8" width="3" height="3" fill="none" stroke="#e2e4e7" stroke-width="0.8"/><circle cx="2.4" cy="-2.2" r="1.6" fill="none" stroke="#e2e4e7" stroke-width="0.8"/><path d="M-1 4 l1.8 -3 l1.8 3z" fill="none" stroke="#e2e4e7" stroke-width="0.8" /></g>
<g transform="translate(942.0,492.0)"><rect x="-3.6" y="-3.8" width="3.4" height="3.4" fill="#46a4ee" /><rect x="-1" y="-1" width="4.4" height="4" fill="#f2c63a" /><path d="M-3.4 2.4 l1.4 1.6 l3 -3.4" fill="none" stroke="#44c45c" stroke-width="1.1" /></g>
<g transform="translate(955.4,492.0)"><rect x="-4" y="-3.6" width="7.4" height="5.6" fill="#e2e4e7" /><path d="M-3 0.6 l2 -2.4 l1.6 1.6 l1.6 -2" fill="none" stroke="#44c45c" stroke-width="0.7" /><path d="M1 4.4 l2 -3.6 l2 3.6z" fill="#e6953a" /></g>
<g transform="translate(968.4,492.0)"><path d="M-3.8 4 v-3 q0 -1.6 1.6 -1.6 h3.6 q2.6 0 2.6 2.4 v2.2z" fill="#d8a060" /><circle cx="-2" cy="-2.4" r="1.5" fill="none" stroke="#d8a060" stroke-width="0.8"/></g>
<g transform="translate(984.4,492.0)"><rect x="-4.2" y="-3.2" width="8.4" height="6.6" fill="none" stroke="#e2e4e7" stroke-width="1"/><path d="M-2.4 1.6 l1.6 -1.6 M2.6 -1.6 l-1.6 1.6" fill="none" stroke="#e2e4e7" stroke-width="0.8" /><path d="M0.6 -1.8 h2.2 v2.2z M-2.6 1.8 v-2.2 l2.2 2.2z" fill="#e2e4e7" /></g>
<text x="853.6" y="494.4" font-size="6.4" fill="#e8eaec" textLength="8.4" lengthAdjust="spacingAndGlyphs">1:1</text>
<path d="M813 487 v10 M974.6 487 v10" stroke="#59606c" stroke-width="0.7"/>
</svg>
</body></html>
